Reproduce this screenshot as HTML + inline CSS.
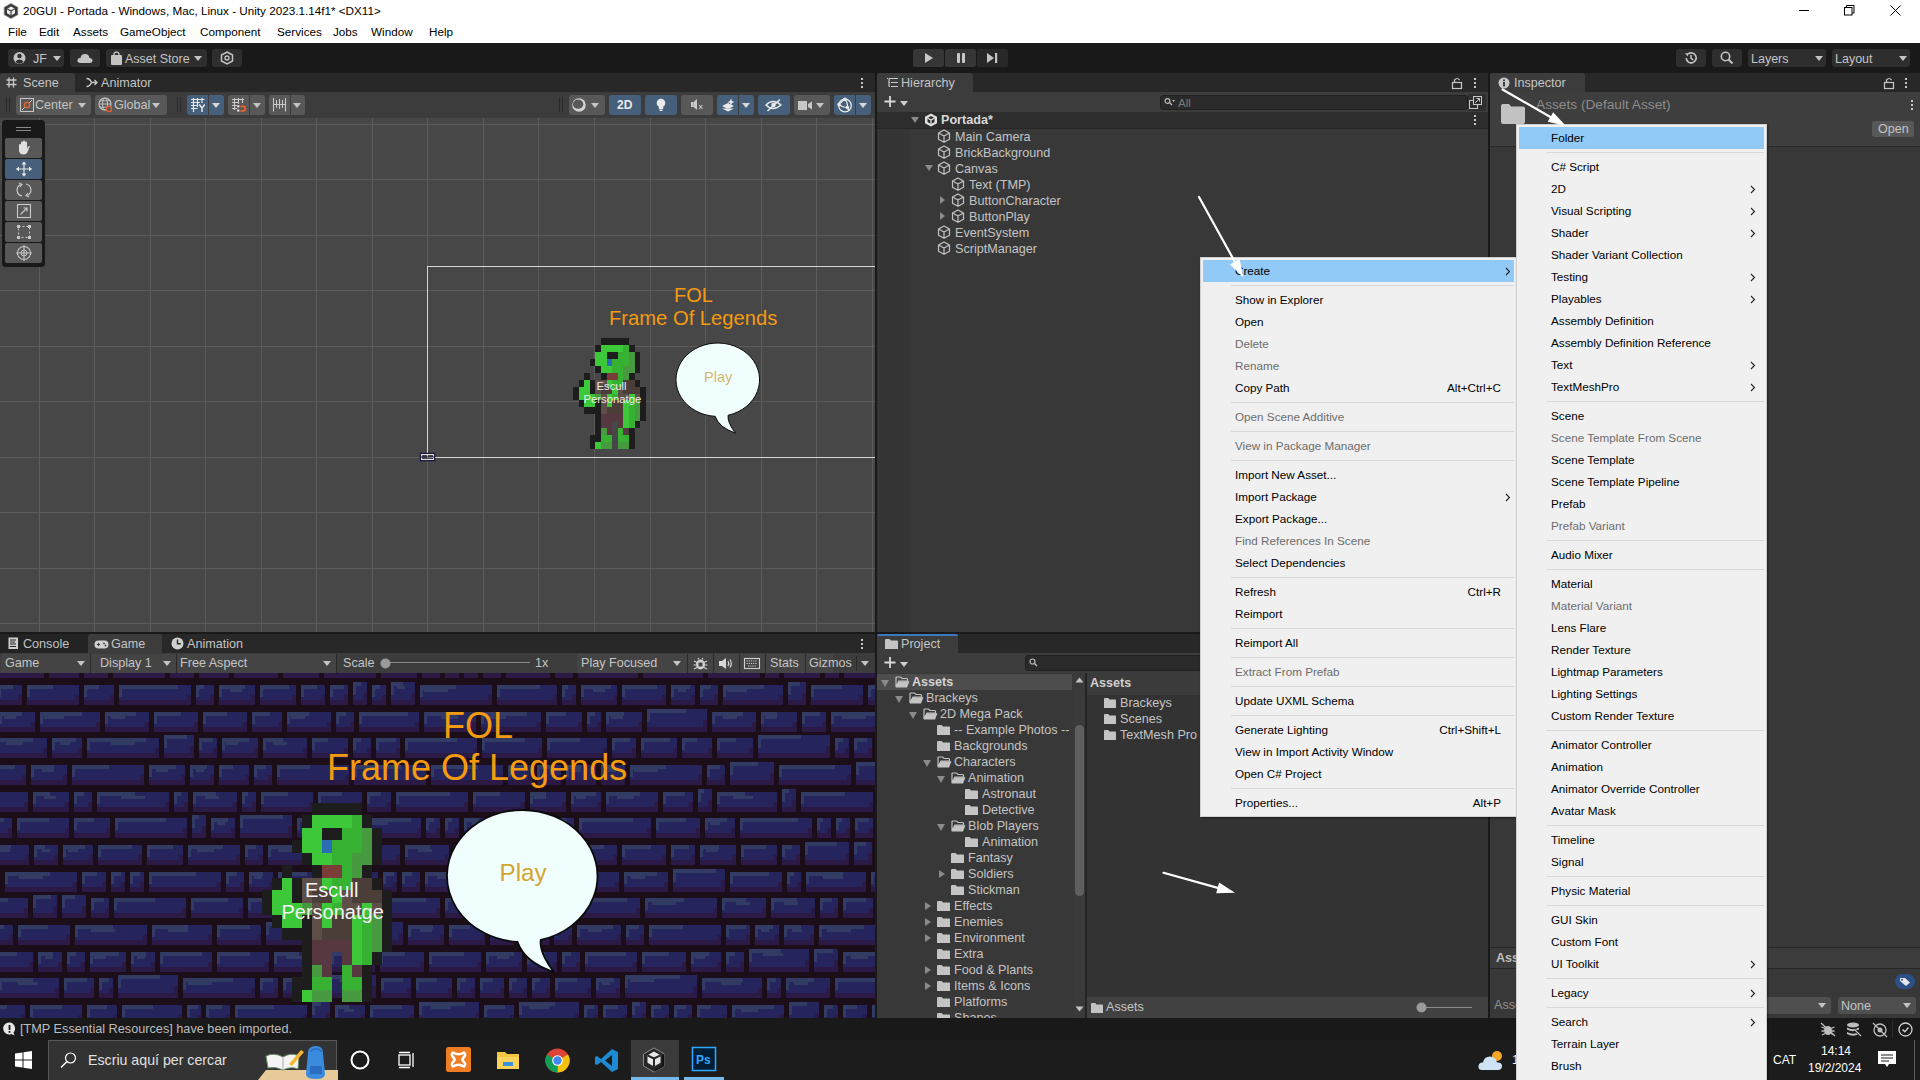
<!DOCTYPE html>
<html><head><meta charset="utf-8"><style>
*{margin:0;padding:0;box-sizing:border-box}
html,body{width:1920px;height:1080px;overflow:hidden;background:#191919;font-family:"Liberation Sans",sans-serif;}
div,span{position:absolute}
.t{white-space:nowrap;line-height:1}
.w{font-size:11.7px;color:#000}
.u{font-size:12.6px;color:#c4c4c4}
.tbb{background:#2d2d2d;border-radius:3px}
.btn{background:#585858;border-radius:3px}
.btnb{background:#46607c;border-radius:3px}
.tri{width:0;height:0;border-left:4px solid transparent;border-right:4px solid transparent;border-top:5px solid #c4c4c4}
.trir{width:0;height:0;border-top:4px solid transparent;border-bottom:4px solid transparent;border-left:5px solid #8a8a8a}
.trid{width:0;height:0;border-left:4px solid transparent;border-right:4px solid transparent;border-top:6px solid #8a8a8a}
.menu{background:#f0f0f0;border:1px solid #d0d0d0;box-shadow:1px 1px 2px rgba(0,0,0,.45)}
.mi{font-size:11.7px;color:#000;white-space:nowrap;line-height:1}
.dis{color:#6d6d6d}
.hl{background:#91c9f7}
.sep{height:1px;background:#d7d7d7}
.chev{width:5px;height:5px;border-right:1.2px solid #222;border-top:1.2px solid #222;transform:rotate(45deg)}
svg{position:absolute;overflow:visible}
</style></head><body>
<div style="left:0px;top:0px;width:1920px;height:43px;background:#fff;"></div><svg style="left:3px;top:3px" width="16" height="16" viewBox="0 0 16 16"><polygon points="8,0.5 14.8,4.3 14.8,11.7 8,15.5 1.2,11.7 1.2,4.3" fill="#3a3a3a" stroke="#888" stroke-width="0.8"/><path d="M8 3.5 L12 5.8 L12 10.2 L8 12.5 L4 10.2 L4 5.8Z" fill="#eee"/><path d="M8 8 L8 12.5 M8 8 L4 5.8 M8 8 L12 5.8" stroke="#3a3a3a" stroke-width="1.2"/></svg><div class="t w" style="left:23px;top:5px;">20GUI - Portada - Windows, Mac, Linux - Unity 2023.1.14f1* &lt;DX11&gt;</div><div class="t w" style="left:8px;top:26px;">File</div><div class="t w" style="left:39px;top:26px;">Edit</div><div class="t w" style="left:73px;top:26px;">Assets</div><div class="t w" style="left:120px;top:26px;">GameObject</div><div class="t w" style="left:200px;top:26px;">Component</div><div class="t w" style="left:277px;top:26px;">Services</div><div class="t w" style="left:333px;top:26px;">Jobs</div><div class="t w" style="left:371px;top:26px;">Window</div><div class="t w" style="left:429px;top:26px;">Help</div><div style="left:1799px;top:10px;width:10px;height:1px;background:#000;"></div><svg style="left:1844px;top:5px" width="11" height="11"><rect x="0.5" y="2.5" width="7.5" height="7.5" fill="none" stroke="#000"/><path d="M2.5 2.5 V0.5 H10 V8 H8" fill="none" stroke="#000"/></svg><svg style="left:1890px;top:5px" width="11" height="11"><path d="M0.5 0.5 L10.5 10.5 M10.5 0.5 L0.5 10.5" stroke="#000" stroke-width="1"/></svg><div style="left:0px;top:43px;width:1920px;height:30px;background:#191919;"></div><div style="left:8px;top:49px;width:56px;height:18px;background:#2e2e2e;border-radius:3px"></div><svg style="left:13px;top:51px" width="14" height="14"><circle cx="6.5" cy="7" r="6" fill="#c4c4c4"/><circle cx="6.5" cy="5" r="2.2" fill="#2e2e2e"/><path d="M2.5 10.5 Q6.5 6.5 10.5 10.5 L9 12 Q6.5 13.5 4 12Z" fill="#2e2e2e"/></svg><div class="t u" style="left:33px;top:53px;font-size:12.5px">JF</div><div class="tri" style="left:53px;top:56px"></div><div style="left:70px;top:49px;width:30px;height:18px;background:#2e2e2e;border-radius:3px"></div><svg style="left:77px;top:52px" width="16" height="12"><path d="M3.5 11 Q0 11 0.5 8 Q1 5.5 3.5 6 Q4 2 8 2 Q12 2 12.5 6 Q15.5 6 15.5 8.5 Q15.5 11 12.5 11Z" fill="#c4c4c4"/></svg><div style="left:106px;top:49px;width:101px;height:18px;background:#2e2e2e;border-radius:3px"></div><svg style="left:111px;top:51px" width="12" height="14"><rect x="0" y="4" width="11" height="10" rx="1" fill="#c4c4c4"/><path d="M3 5 V2.5 Q5.5 -0.5 8 2.5 V5" fill="none" stroke="#c4c4c4" stroke-width="1.3"/></svg><div class="t u" style="left:125px;top:53px;font-size:12.5px">Asset Store</div><div class="tri" style="left:194px;top:56px"></div><div style="left:212px;top:49px;width:30px;height:18px;background:#2e2e2e;border-radius:3px"></div><svg style="left:220px;top:51px" width="14" height="14"><polygon points="7,1 12.5,4 12.5,10 7,13 1.5,10 1.5,4" fill="none" stroke="#c4c4c4" stroke-width="1.5"/><circle cx="7" cy="7" r="2" fill="none" stroke="#c4c4c4" stroke-width="1.3"/></svg><div style="left:913px;top:49px;width:31px;height:18px;background:#363636;border-radius:2px"></div><div style="left:945px;top:49px;width:31px;height:18px;background:#363636;border-radius:2px"></div><div style="left:977px;top:49px;width:31px;height:18px;background:#282828;border-radius:2px"></div><svg style="left:923px;top:52px" width="12" height="12"><path d="M2 1 L10 6 L2 11Z" fill="#c8c8c8"/></svg><div style="left:957px;top:53px;width:3px;height:10px;background:#c8c8c8;border-radius:1px"></div><div style="left:962px;top:53px;width:3px;height:10px;background:#c8c8c8;border-radius:1px"></div><svg style="left:986px;top:52px" width="12" height="12"><path d="M1 1 L8 6 L1 11Z" fill="#c4c4c4"/><rect x="9" y="1" width="2.2" height="10" fill="#c4c4c4"/></svg><div style="left:1676px;top:49px;width:30px;height:18px;background:#2e2e2e;border-radius:3px"></div><svg style="left:1684px;top:51px" width="14" height="14"><path d="M2.2 7 A5 5 0 1 0 4 3" fill="none" stroke="#c4c4c4" stroke-width="1.6"/><path d="M1 2 L4.5 2.5 L3.5 5.5Z" fill="#c4c4c4"/><path d="M7 4 V7.3 L9.3 8.8" fill="none" stroke="#c4c4c4" stroke-width="1.5"/></svg><div style="left:1712px;top:49px;width:30px;height:18px;background:#2e2e2e;border-radius:3px"></div><svg style="left:1720px;top:51px" width="14" height="14"><circle cx="5.5" cy="5.5" r="4.2" fill="none" stroke="#c4c4c4" stroke-width="1.6"/><path d="M8.5 8.5 L12.5 12.5" stroke="#c4c4c4" stroke-width="2"/></svg><div style="left:1748px;top:49px;width:78px;height:18px;background:#2e2e2e;border-radius:3px"></div><div class="t u" style="left:1751px;top:53px;font-size:12.5px">Layers</div><div class="tri" style="left:1815px;top:56px"></div><div style="left:1832px;top:49px;width:78px;height:18px;background:#2e2e2e;border-radius:3px"></div><div class="t u" style="left:1835px;top:53px;font-size:12.5px">Layout</div><div class="tri" style="left:1899px;top:56px"></div><div style="left:0px;top:73px;width:875px;height:19px;background:#282828;"></div><div style="left:0px;top:73px;width:75px;height:19px;background:#3c3c3c;border-radius:3px 3px 0 0"></div><svg style="left:6px;top:77px" width="11" height="11"><path d="M3 0.5 V10.5 M7.5 0.5 V10.5 M0.5 3 H10.5 M0.5 7.5 H10.5" stroke="#c8c8c8" stroke-width="1.3"/></svg><div class="t u" style="left:23px;top:77px;">Scene</div><svg style="left:86px;top:77px" width="12" height="11"><path d="M0.5 1.5 Q4 1.5 5.5 5.5 Q4 9.5 0.5 9.5 M5.5 5.5 H11 M8.5 3 L11 5.5 L8.5 8" fill="none" stroke="#c8c8c8" stroke-width="1.3"/></svg><div class="t u" style="left:101px;top:77px;">Animator</div><div style="left:861px;top:78px;width:2px;height:2px;background:#c8c8c8;"></div><div style="left:861px;top:82px;width:2px;height:2px;background:#c8c8c8;"></div><div style="left:861px;top:86px;width:2px;height:2px;background:#c8c8c8;"></div><div style="left:0px;top:92px;width:875px;height:26px;background:#3c3c3c;"></div><div style="left:6px;top:97px;width:1px;height:15px;background:#2a2a2a;"></div><div style="left:9px;top:97px;width:1px;height:15px;background:#2a2a2a;"></div><div style="left:16px;top:95px;width:75px;height:20px;background:#585858;border-radius:3px"></div><svg style="left:20px;top:98px" width="14" height="14"><rect x="0.5" y="0.5" width="13" height="13" fill="none" stroke="#c8c8c8"/><circle cx="7" cy="7" r="2.6" fill="none" stroke="#e8622c" stroke-width="1.4"/><path d="M2 12 L4.6 9.4 M9.4 4.6 L12 2" stroke="#c8c8c8"/></svg><div class="t u" style="left:35px;top:99px;">Center</div><div class="tri" style="left:78px;top:103px"></div><div style="left:95px;top:95px;width:72px;height:20px;background:#585858;border-radius:3px"></div><svg style="left:98px;top:97px" width="16" height="16"><circle cx="7" cy="7" r="6" fill="none" stroke="#c8c8c8" stroke-width="1.1"/><ellipse cx="7" cy="7" rx="2.5" ry="6" fill="none" stroke="#c8c8c8" stroke-width="1"/><path d="M1 7 H13 M2 3.8 H12 M2 10.2 H12" stroke="#c8c8c8" stroke-width="0.9"/><circle cx="11" cy="12" r="2.6" fill="#585858" stroke="#e8622c" stroke-width="1.3"/></svg><div class="t u" style="left:114px;top:99px;">Global</div><div class="tri" style="left:152px;top:103px"></div><div style="left:177px;top:97px;width:1px;height:15px;background:#2a2a2a;"></div><div style="left:180px;top:97px;width:1px;height:15px;background:#2a2a2a;"></div><div style="left:187px;top:95px;width:37px;height:20px;background:#46607c;border-radius:3px"></div><div style="left:208px;top:95px;width:1px;height:20px;background:#3c3c3c;"></div><svg style="left:191px;top:98px" width="16" height="15"><path d="M2.5 0 V14 M6.5 0 V9 M11 0 V5 M0 1.5 H13.5 M0 4.5 H9 M0 7.5 H6.5 M0 10.5 H6.5" stroke="#e6e6e6" stroke-width="1.2"/><path d="M8.3 6.5 L11 10 L13.7 6.5 M11 10 V14" fill="none" stroke="#e6e6e6" stroke-width="1.5"/></svg><div class="tri" style="left:212px;top:103px;border-top-color:#d8d8d8"></div><div style="left:228px;top:95px;width:37px;height:20px;background:#585858;border-radius:3px"></div><div style="left:249px;top:95px;width:1px;height:20px;background:#3c3c3c;"></div><svg style="left:232px;top:98px" width="16" height="15"><path d="M2.5 0 V12 M6.5 0 V6 M10.5 0 V5 M0 1.5 H12 M0 4.5 H6 M0 7.5 H5 M0 10.5 H5" stroke="#c8c8c8" stroke-width="1.1"/><rect x="5.3" y="7.3" width="2" height="2" fill="#fff"/><rect x="5.3" y="11.5" width="2" height="2" fill="#fff"/><path d="M8.5 8.3 H11 Q13.3 8.3 13.3 10.6 Q13.3 12.8 11 12.8 H8.5" fill="none" stroke="#f0602a" stroke-width="1.8"/></svg><div class="tri" style="left:253px;top:103px"></div><div style="left:269px;top:95px;width:36px;height:20px;background:#585858;border-radius:3px"></div><div style="left:290px;top:95px;width:1px;height:20px;background:#3c3c3c;"></div><svg style="left:272px;top:98px" width="16" height="15"><path d="M1.5 0 V13.5 M13.5 0 V13.5 M4.5 2 V10 M7.5 1 V11 M10.5 2 V10 M1.5 6.5 H13.5" stroke="#c8c8c8" stroke-width="1.1"/></svg><div class="tri" style="left:293px;top:103px"></div><div style="left:559px;top:97px;width:1px;height:15px;background:#2a2a2a;"></div><div style="left:562px;top:97px;width:1px;height:15px;background:#2a2a2a;"></div><div style="left:569px;top:95px;width:36px;height:20px;background:#585858;border-radius:3px"></div><svg style="left:572px;top:98px" width="16" height="16"><circle cx="7" cy="7" r="6.8" fill="#d2d2d2"/><ellipse cx="6.1" cy="6.2" rx="5.2" ry="4.6" fill="#585858"/></svg><div class="tri" style="left:591px;top:103px"></div><div style="left:609px;top:95px;width:32px;height:20px;background:#46607c;border-radius:3px"></div><div class="t u" style="left:617px;top:99px;color:#eaeaea;font-weight:bold;font-size:12px">2D</div><div style="left:645px;top:95px;width:32px;height:20px;background:#46607c;border-radius:3px"></div><svg style="left:655px;top:98px" width="12" height="14"><circle cx="6" cy="5" r="4.3" fill="#eaeaea"/><rect x="3.8" y="8" width="4.4" height="3" fill="#eaeaea"/><rect x="4.5" y="11.5" width="3" height="1.5" fill="#eaeaea"/></svg><div style="left:681px;top:95px;width:32px;height:20px;background:#585858;border-radius:3px"></div><svg style="left:690px;top:98px" width="14" height="14"><rect x="1" y="4" width="2.5" height="5" fill="#c8c8c8"/><path d="M3.5 4 L7 1 V12 L3.5 9Z" fill="#c8c8c8"/><path d="M9 7 L12.5 11 M12.5 7 L9 11" stroke="#c8c8c8" stroke-width="1.1"/></svg><div style="left:717px;top:95px;width:37px;height:20px;background:#46607c;border-radius:3px"></div><div style="left:738px;top:95px;width:1px;height:20px;background:#3c3c3c;"></div><svg style="left:721px;top:98px" width="16" height="14"><path d="M1 8 L7 5 L13 8 L7 11Z M1 10.5 L7 13.5 L13 10.5" fill="#eaeaea"/><path d="M10 0.5 L11 3 L13.5 4 L11 5 L10 7.5 L9 5 L6.5 4 L9 3Z" fill="#eaeaea"/></svg><div class="tri" style="left:742px;top:103px;border-top-color:#d8d8d8"></div><div style="left:758px;top:95px;width:32px;height:20px;background:#46607c;border-radius:3px"></div><svg style="left:765px;top:98px" width="18" height="14"><path d="M1 7 Q8 0 16 7 Q8 14 1 7Z" fill="none" stroke="#eaeaea" stroke-width="1.3"/><circle cx="8.5" cy="7" r="2.2" fill="#eaeaea"/><path d="M2.5 13 L15 1.5" stroke="#eaeaea" stroke-width="1.5"/></svg><div style="left:794px;top:95px;width:36px;height:20px;background:#585858;border-radius:3px"></div><svg style="left:798px;top:100px" width="16" height="11"><rect x="0" y="1" width="9" height="9" fill="#c8c8c8"/><path d="M10 4 L14 1.5 V9.5 L10 7Z" fill="#c8c8c8"/></svg><div class="tri" style="left:816px;top:103px"></div><div style="left:834px;top:95px;width:37px;height:20px;background:#46607c;border-radius:3px"></div><div style="left:855px;top:95px;width:1px;height:20px;background:#3c3c3c;"></div><svg style="left:837px;top:97px" width="16" height="16"><circle cx="8" cy="8.5" r="6.3" fill="none" stroke="#eaeaea" stroke-width="1.3"/><path d="M8 2.2 Q4 5 2 7.5 M8 2.2 Q11 6 10.5 10.5 M2 7.5 Q6 11 10.5 10.5 M10.5 10.5 L12 14" fill="none" stroke="#eaeaea" stroke-width="1.1"/><circle cx="8" cy="2.2" r="1.7" fill="#eaeaea"/><circle cx="2" cy="7.5" r="1.7" fill="#eaeaea"/><circle cx="10.5" cy="10.5" r="1.7" fill="#eaeaea"/></svg><div class="tri" style="left:859px;top:103px;border-top-color:#d8d8d8"></div><div style="left:0px;top:118px;width:875px;height:514px;background:#474747;overflow:hidden"></div><svg style="left:0px;top:118px" width="875" height="514" shape-rendering="crispEdges"><rect x="39" y="0" width="1" height="514" fill="#5b5b5b"/><rect x="94" y="0" width="1" height="514" fill="#5b5b5b"/><rect x="150" y="0" width="1" height="514" fill="#5b5b5b"/><rect x="205" y="0" width="1" height="514" fill="#5b5b5b"/><rect x="261" y="0" width="1" height="514" fill="#5b5b5b"/><rect x="316" y="0" width="1" height="514" fill="#5b5b5b"/><rect x="372" y="0" width="1" height="514" fill="#5b5b5b"/><rect x="427" y="0" width="1" height="514" fill="#5b5b5b"/><rect x="483" y="0" width="1" height="514" fill="#5b5b5b"/><rect x="538" y="0" width="1" height="514" fill="#5b5b5b"/><rect x="594" y="0" width="1" height="514" fill="#5b5b5b"/><rect x="650" y="0" width="1" height="514" fill="#5b5b5b"/><rect x="705" y="0" width="1" height="514" fill="#5b5b5b"/><rect x="761" y="0" width="1" height="514" fill="#5b5b5b"/><rect x="816" y="0" width="1" height="514" fill="#5b5b5b"/><rect x="872" y="0" width="1" height="514" fill="#5b5b5b"/><rect x="0" y="6" width="875" height="1" fill="#5b5b5b"/><rect x="0" y="61" width="875" height="1" fill="#5b5b5b"/><rect x="0" y="117" width="875" height="1" fill="#5b5b5b"/><rect x="0" y="172" width="875" height="1" fill="#5b5b5b"/><rect x="0" y="228" width="875" height="1" fill="#5b5b5b"/><rect x="0" y="283" width="875" height="1" fill="#5b5b5b"/><rect x="0" y="339" width="875" height="1" fill="#5b5b5b"/><rect x="0" y="394" width="875" height="1" fill="#5b5b5b"/><rect x="0" y="450" width="875" height="1" fill="#5b5b5b"/><rect x="0" y="505" width="875" height="1" fill="#5b5b5b"/><rect x="427" y="148" width="448" height="1" fill="#d6d6d6"/><rect x="427" y="148" width="1" height="192" fill="#d6d6d6"/><rect x="427" y="339" width="448" height="1" fill="#d6d6d6"/></svg><svg style="left:420px;top:453px" width="16" height="9"><rect x="0.5" y="0.5" width="14" height="7" fill="none" stroke="#1a1a40" stroke-width="1.5"/><rect x="1.5" y="1.5" width="12" height="5" fill="none" stroke="#e0e0e0" stroke-width="1"/><rect x="1" y="3.5" width="13" height="1" fill="#1a1a40"/></svg><div class="t" style="left:674px;top:284.5px;font-size:20px;color:#f49a10">FOL</div><div class="t" style="left:609px;top:307.5px;font-size:20.2px;color:#f49a10">Frame Of Legends</div><svg style="left:572.8px;top:338px" width="72.8" height="111.0" shape-rendering="crispEdges"><rect x="28.00" y="0.00" width="28.00" height="6.94" fill="#1d1d1d"/><rect x="22.40" y="6.94" width="5.60" height="6.94" fill="#1d1d1d"/><rect x="28.00" y="6.94" width="22.40" height="6.94" fill="#3dc83a"/><rect x="50.40" y="6.94" width="5.60" height="6.94" fill="#37b131"/><rect x="56.00" y="6.94" width="5.60" height="6.94" fill="#1d1d1d"/><rect x="22.40" y="13.88" width="11.20" height="6.94" fill="#3dc83a"/><rect x="33.60" y="13.88" width="11.20" height="6.94" fill="#1d1d1d"/><rect x="44.80" y="13.88" width="11.20" height="6.94" fill="#37b131"/><rect x="56.00" y="13.88" width="5.60" height="6.94" fill="#479a40"/><rect x="61.60" y="13.88" width="5.60" height="6.94" fill="#1d1d1d"/><rect x="16.80" y="20.82" width="5.60" height="6.94" fill="#1d1d1d"/><rect x="22.40" y="20.82" width="11.20" height="6.94" fill="#3dc83a"/><rect x="33.60" y="20.82" width="5.60" height="6.94" fill="#2b6db5"/><rect x="39.20" y="20.82" width="16.80" height="6.94" fill="#37b131"/><rect x="56.00" y="20.82" width="5.60" height="6.94" fill="#479a40"/><rect x="61.60" y="20.82" width="5.60" height="6.94" fill="#1d1d1d"/><rect x="22.40" y="27.76" width="5.60" height="6.94" fill="#1d1d1d"/><rect x="28.00" y="27.76" width="11.20" height="6.94" fill="#3dc83a"/><rect x="39.20" y="27.76" width="11.20" height="6.94" fill="#37b131"/><rect x="50.40" y="27.76" width="11.20" height="6.94" fill="#479a40"/><rect x="61.60" y="27.76" width="5.60" height="6.94" fill="#1d1d1d"/><rect x="11.20" y="34.70" width="5.60" height="6.94" fill="#1d1d1d"/><rect x="28.00" y="34.70" width="5.60" height="6.94" fill="#1d1d1d"/><rect x="33.60" y="34.70" width="11.20" height="6.94" fill="#7b3c3a"/><rect x="44.80" y="34.70" width="5.60" height="6.94" fill="#37b131"/><rect x="50.40" y="34.70" width="5.60" height="6.94" fill="#479a40"/><rect x="56.00" y="34.70" width="5.60" height="6.94" fill="#1d1d1d"/><rect x="5.60" y="41.64" width="5.60" height="6.94" fill="#1d1d1d"/><rect x="11.20" y="41.64" width="5.60" height="6.94" fill="#3dc83a"/><rect x="16.80" y="41.64" width="5.60" height="6.94" fill="#1d1d1d"/><rect x="22.40" y="41.64" width="11.20" height="6.94" fill="#5d4f47"/><rect x="33.60" y="41.64" width="5.60" height="6.94" fill="#3dc83a"/><rect x="39.20" y="41.64" width="11.20" height="6.94" fill="#37b131"/><rect x="50.40" y="41.64" width="11.20" height="6.94" fill="#4b3e38"/><rect x="61.60" y="41.64" width="5.60" height="6.94" fill="#1d1d1d"/><rect x="0.00" y="48.58" width="5.60" height="6.94" fill="#1d1d1d"/><rect x="5.60" y="48.58" width="11.20" height="6.94" fill="#3dc83a"/><rect x="16.80" y="48.58" width="5.60" height="6.94" fill="#1d1d1d"/><rect x="22.40" y="48.58" width="5.60" height="6.94" fill="#5d4f47"/><rect x="28.00" y="48.58" width="11.20" height="6.94" fill="#4b3e38"/><rect x="39.20" y="48.58" width="5.60" height="6.94" fill="#3dc83a"/><rect x="44.80" y="48.58" width="5.60" height="6.94" fill="#5d4f47"/><rect x="50.40" y="48.58" width="16.80" height="6.94" fill="#4b3e38"/><rect x="67.20" y="48.58" width="5.60" height="6.94" fill="#1d1d1d"/><rect x="0.00" y="55.52" width="5.60" height="6.94" fill="#1d1d1d"/><rect x="5.60" y="55.52" width="16.80" height="6.94" fill="#3dc83a"/><rect x="22.40" y="55.52" width="5.60" height="6.94" fill="#479a40"/><rect x="28.00" y="55.52" width="5.60" height="6.94" fill="#5d4f47"/><rect x="33.60" y="55.52" width="5.60" height="6.94" fill="#3dc83a"/><rect x="39.20" y="55.52" width="5.60" height="6.94" fill="#37b131"/><rect x="44.80" y="55.52" width="11.20" height="6.94" fill="#5d4f47"/><rect x="56.00" y="55.52" width="5.60" height="6.94" fill="#3dc83a"/><rect x="61.60" y="55.52" width="5.60" height="6.94" fill="#5d4f47"/><rect x="67.20" y="55.52" width="5.60" height="6.94" fill="#1d1d1d"/><rect x="5.60" y="62.46" width="5.60" height="6.94" fill="#1d1d1d"/><rect x="11.20" y="62.46" width="11.20" height="6.94" fill="#3dc83a"/><rect x="22.40" y="62.46" width="5.60" height="6.94" fill="#1d1d1d"/><rect x="28.00" y="62.46" width="5.60" height="6.94" fill="#5d4f47"/><rect x="33.60" y="62.46" width="5.60" height="6.94" fill="#3dc83a"/><rect x="39.20" y="62.46" width="11.20" height="6.94" fill="#4b3e38"/><rect x="50.40" y="62.46" width="5.60" height="6.94" fill="#3dc83a"/><rect x="56.00" y="62.46" width="5.60" height="6.94" fill="#37b131"/><rect x="61.60" y="62.46" width="5.60" height="6.94" fill="#479a40"/><rect x="67.20" y="62.46" width="5.60" height="6.94" fill="#1d1d1d"/><rect x="11.20" y="69.40" width="16.80" height="6.94" fill="#1d1d1d"/><rect x="28.00" y="69.40" width="5.60" height="6.94" fill="#5d4f47"/><rect x="33.60" y="69.40" width="16.80" height="6.94" fill="#4b3e38"/><rect x="50.40" y="69.40" width="5.60" height="6.94" fill="#3dc83a"/><rect x="56.00" y="69.40" width="5.60" height="6.94" fill="#37b131"/><rect x="61.60" y="69.40" width="5.60" height="6.94" fill="#479a40"/><rect x="67.20" y="69.40" width="5.60" height="6.94" fill="#1d1d1d"/><rect x="22.40" y="76.34" width="5.60" height="6.94" fill="#1d1d1d"/><rect x="28.00" y="76.34" width="22.40" height="6.94" fill="#573840"/><rect x="50.40" y="76.34" width="5.60" height="6.94" fill="#3dc83a"/><rect x="56.00" y="76.34" width="5.60" height="6.94" fill="#37b131"/><rect x="61.60" y="76.34" width="5.60" height="6.94" fill="#479a40"/><rect x="67.20" y="76.34" width="5.60" height="6.94" fill="#1d1d1d"/><rect x="22.40" y="83.28" width="5.60" height="6.94" fill="#1d1d1d"/><rect x="28.00" y="83.28" width="11.20" height="6.94" fill="#573840"/><rect x="44.80" y="83.28" width="5.60" height="6.94" fill="#573840"/><rect x="50.40" y="83.28" width="5.60" height="6.94" fill="#3dc83a"/><rect x="56.00" y="83.28" width="5.60" height="6.94" fill="#37b131"/><rect x="61.60" y="83.28" width="5.60" height="6.94" fill="#1d1d1d"/><rect x="22.40" y="90.22" width="5.60" height="6.94" fill="#1d1d1d"/><rect x="28.00" y="90.22" width="5.60" height="6.94" fill="#479a40"/><rect x="33.60" y="90.22" width="5.60" height="6.94" fill="#573840"/><rect x="44.80" y="90.22" width="5.60" height="6.94" fill="#37b131"/><rect x="50.40" y="90.22" width="5.60" height="6.94" fill="#573840"/><rect x="56.00" y="90.22" width="5.60" height="6.94" fill="#1d1d1d"/><rect x="16.80" y="97.16" width="11.20" height="6.94" fill="#1d1d1d"/><rect x="28.00" y="97.16" width="11.20" height="6.94" fill="#37b131"/><rect x="44.80" y="97.16" width="11.20" height="6.94" fill="#37b131"/><rect x="56.00" y="97.16" width="5.60" height="6.94" fill="#1d1d1d"/><rect x="16.80" y="104.10" width="5.60" height="6.94" fill="#1d1d1d"/><rect x="22.40" y="104.10" width="5.60" height="6.94" fill="#3dc83a"/><rect x="28.00" y="104.10" width="11.20" height="6.94" fill="#479a40"/><rect x="44.80" y="104.10" width="11.20" height="6.94" fill="#479a40"/><rect x="56.00" y="104.10" width="5.60" height="6.94" fill="#1d1d1d"/></svg><div class="t" style="left:596.5px;top:381px;font-size:11.3px;color:#ececec">Escull</div><div class="t" style="left:583.5px;top:393.5px;font-size:11.3px;color:#ececec">Personatge</div><svg style="left:671.00px;top:337.50px" width="94" height="111"><path transform="translate(46.8,41.7)" d="M10.28 35.57 A41.8 36.7 0 1 0 -2.64 36.63 Q1.11 47.83 17.64 53.38 Q9.39 42.61 10.28 35.57Z" fill="#f0fefe" stroke="#0a0a0a" stroke-width="1.0" stroke-linejoin="round"/></svg><div class="t" style="left:704px;top:370px;font-size:14.5px;color:#d6b670">Play</div><div style="left:2px;top:120px;width:43px;height:147px;background:#191919;border-radius:4px"></div><div style="left:16px;top:127px;width:15px;height:1px;background:#8a8a8a;"></div><div style="left:16px;top:130px;width:15px;height:1px;background:#8a8a8a;"></div><div style="left:5px;top:138px;width:37px;height:20px;background:#585858;border-radius:2px"></div><div style="left:5px;top:159px;width:37px;height:20px;background:#46607c;border-radius:2px"></div><div style="left:5px;top:180px;width:37px;height:20px;background:#585858;border-radius:2px"></div><div style="left:5px;top:201px;width:37px;height:20px;background:#585858;border-radius:2px"></div><div style="left:5px;top:222px;width:37px;height:20px;background:#585858;border-radius:2px"></div><div style="left:5px;top:243px;width:37px;height:20px;background:#585858;border-radius:2px"></div><svg style="left:16px;top:140px" width="16" height="16"><path d="M3 9 V5 Q3 4 4 4 Q5 4 5 5 V8 V2.5 Q5 1.5 6 1.5 Q7 1.5 7 2.5 V7.5 V1.5 Q7 0.5 8 0.5 Q9 0.5 9 1.5 V7.5 V2.5 Q9 1.5 10 1.5 Q11 1.5 11 2.5 V9 L12 6.5 Q13 5.5 13.8 6.3 L11.5 12 Q10.5 14.5 7.5 14.5 Q4 14.5 3 11Z" fill="#e0e0e0"/></svg><svg style="left:15px;top:161px" width="18" height="16"><path d="M9 1 V15 M1.5 8 H16.5" stroke="#e6e6e6" stroke-width="1.2"/><path d="M9 0.5 L6.5 3.5 H11.5Z M9 15.5 L6.5 12.5 H11.5Z M1 8 L4 5.5 V10.5Z M17 8 L14 5.5 V10.5Z" fill="#e6e6e6"/></svg><svg style="left:16px;top:182px" width="16" height="16"><path d="M5 2.5 A6 6 0 0 0 6 14 M11 13.5 A6 6 0 0 0 10 2" fill="none" stroke="#c8c8c8" stroke-width="1.2"/><path d="M3 1 L6 2.5 L4 5 M13 15 L10 13.5 L12 11" fill="none" stroke="#c8c8c8" stroke-width="1.1"/></svg><svg style="left:16px;top:203px" width="16" height="16"><rect x="1.5" y="1.5" width="13" height="13" fill="none" stroke="#c8c8c8" stroke-width="1.1"/><path d="M4.5 11.5 L11 5 M7.5 5 H11 V8.5" fill="none" stroke="#c8c8c8" stroke-width="1.1"/></svg><svg style="left:16px;top:224px" width="16" height="16"><rect x="2.5" y="2.5" width="11" height="11" fill="none" stroke="#c8c8c8" stroke-width="1" stroke-dasharray="2 2"/><rect x="1" y="1" width="3" height="3" fill="#c8c8c8"/><rect x="12" y="1" width="3" height="3" fill="#c8c8c8"/><rect x="1" y="12" width="3" height="3" fill="#c8c8c8"/><rect x="12" y="12" width="3" height="3" fill="#c8c8c8"/></svg><svg style="left:15px;top:244px" width="18" height="18"><circle cx="9" cy="9" r="6.5" fill="none" stroke="#c8c8c8" stroke-width="1.1"/><path d="M9 1 V17 M1 9 H17" stroke="#c8c8c8" stroke-width="1.1"/><circle cx="9" cy="9" r="3" fill="none" stroke="#c8c8c8" stroke-width="1"/></svg><div style="left:877px;top:73px;width:611px;height:559px;background:#383838;"></div><div style="left:877px;top:73px;width:611px;height:19px;background:#282828;"></div><div style="left:877px;top:73px;width:96px;height:19px;background:#3c3c3c;border-radius:3px 3px 0 0"></div><svg style="left:886px;top:77px" width="13" height="11"><path d="M3 1.5 H12 M5 5.5 H12 M5 9.5 H12 M1 1.5 H2 M3 1.5 V9.5 M3 5.5 H4 M3 9.5 H4" stroke="#c8c8c8" stroke-width="1.2"/></svg><div class="t u" style="left:901px;top:77px;">Hierarchy</div><svg style="left:1452px;top:77px" width="11" height="12"><rect x="0.5" y="5.5" width="9" height="6" fill="none" stroke="#c8c8c8" stroke-width="1.2"/><path d="M2.5 5.5 V3 Q5 0 7.5 3" fill="none" stroke="#c8c8c8" stroke-width="1.2"/></svg><div style="left:1474px;top:78px;width:2px;height:2px;background:#c8c8c8;"></div><div style="left:1474px;top:82px;width:2px;height:2px;background:#c8c8c8;"></div><div style="left:1474px;top:86px;width:2px;height:2px;background:#c8c8c8;"></div><div style="left:877px;top:92px;width:611px;height:20px;background:#3c3c3c;"></div><svg style="left:884px;top:95px" width="14" height="14"><path d="M6 1 V12 M0.5 6.5 H11.5" stroke="#d8d8d8" stroke-width="1.8"/></svg><div class="tri" style="left:900px;top:101px;border-top-color:#d0d0d0"></div><div style="left:1160px;top:95px;width:308px;height:15px;background:#2a2a2a;border-radius:3px;border:1px solid #212121"></div><svg style="left:1164px;top:97px" width="12" height="10"><circle cx="3.5" cy="4" r="2.4" fill="none" stroke="#bbb" stroke-width="1.2"/><path d="M5.5 5.5 L8 8" stroke="#bbb" stroke-width="1.3"/><path d="M8 3 L11 3 L9.5 5Z" fill="#bbb"/></svg><div class="t u" style="left:1178px;top:98px;color:#7a7a7a;font-size:11.5px">All</div><div style="left:1468px;top:94px;width:18px;height:17px;background:#2f2f2f;border-radius:2px"></div><svg style="left:1469px;top:96px" width="14" height="14"><rect x="0.5" y="4.5" width="8" height="8" fill="none" stroke="#c8c8c8"/><rect x="4.5" y="0.5" width="8" height="8" fill="#2f2f2f" stroke="#c8c8c8"/><path d="M6 7 L10.5 2.5 M7.5 2.5 H10.5 V5.5" fill="none" stroke="#c8c8c8"/></svg><div style="left:877px;top:112px;width:611px;height:16px;background:#2d2d2d;"></div><div style="left:877px;top:128px;width:611px;height:1px;background:#262626;"></div><div style="left:877px;top:129px;width:32px;height:503px;background:#353535;"></div><div class="trid" style="left:911px;top:117px"></div><svg style="left:924px;top:113px" width="14" height="14"><path d="M7 0.5 L13 3.8 V10.2 L7 13.5 L1 10.2 V3.8Z" fill="#e0e0e0"/><path d="M7 3 L10.5 5 V9 L7 11 L3.5 9 V5Z" fill="#2d2d2d"/><path d="M7 7 V11 M7 7 L3.5 5 M7 7 L10.5 5" stroke="#e0e0e0" stroke-width="1.3"/></svg><div class="t u" style="left:941px;top:114px;font-weight:bold;color:#d8d8d8">Portada*</div><div style="left:1474px;top:115px;width:2px;height:2px;background:#c8c8c8;"></div><div style="left:1474px;top:119px;width:2px;height:2px;background:#c8c8c8;"></div><div style="left:1474px;top:123px;width:2px;height:2px;background:#c8c8c8;"></div><svg style="left:937px;top:129px" width="14" height="14"><path d="M7 1 L12.5 4 V10.2 L7 13.2 L1.5 10.2 V4Z M1.5 4 L7 7 L12.5 4 M7 7 V13.2" fill="none" stroke="#c4c4c4" stroke-width="1.2" stroke-linejoin="round"/></svg><div class="t u" style="left:955px;top:131px;">Main Camera</div><svg style="left:937px;top:145px" width="14" height="14"><path d="M7 1 L12.5 4 V10.2 L7 13.2 L1.5 10.2 V4Z M1.5 4 L7 7 L12.5 4 M7 7 V13.2" fill="none" stroke="#c4c4c4" stroke-width="1.2" stroke-linejoin="round"/></svg><div class="t u" style="left:955px;top:147px;">BrickBackground</div><svg style="left:937px;top:161px" width="14" height="14"><path d="M7 1 L12.5 4 V10.2 L7 13.2 L1.5 10.2 V4Z M1.5 4 L7 7 L12.5 4 M7 7 V13.2" fill="none" stroke="#c4c4c4" stroke-width="1.2" stroke-linejoin="round"/></svg><div class="t u" style="left:955px;top:163px;">Canvas</div><div class="trid" style="left:925px;top:165px"></div><svg style="left:951px;top:177px" width="14" height="14"><path d="M7 1 L12.5 4 V10.2 L7 13.2 L1.5 10.2 V4Z M1.5 4 L7 7 L12.5 4 M7 7 V13.2" fill="none" stroke="#c4c4c4" stroke-width="1.2" stroke-linejoin="round"/></svg><div class="t u" style="left:969px;top:179px;">Text (TMP)</div><svg style="left:951px;top:193px" width="14" height="14"><path d="M7 1 L12.5 4 V10.2 L7 13.2 L1.5 10.2 V4Z M1.5 4 L7 7 L12.5 4 M7 7 V13.2" fill="none" stroke="#c4c4c4" stroke-width="1.2" stroke-linejoin="round"/></svg><div class="t u" style="left:969px;top:195px;">ButtonCharacter</div><div class="trir" style="left:940px;top:196px"></div><svg style="left:951px;top:209px" width="14" height="14"><path d="M7 1 L12.5 4 V10.2 L7 13.2 L1.5 10.2 V4Z M1.5 4 L7 7 L12.5 4 M7 7 V13.2" fill="none" stroke="#c4c4c4" stroke-width="1.2" stroke-linejoin="round"/></svg><div class="t u" style="left:969px;top:211px;">ButtonPlay</div><div class="trir" style="left:940px;top:212px"></div><svg style="left:937px;top:225px" width="14" height="14"><path d="M7 1 L12.5 4 V10.2 L7 13.2 L1.5 10.2 V4Z M1.5 4 L7 7 L12.5 4 M7 7 V13.2" fill="none" stroke="#c4c4c4" stroke-width="1.2" stroke-linejoin="round"/></svg><div class="t u" style="left:955px;top:227px;">EventSystem</div><svg style="left:937px;top:241px" width="14" height="14"><path d="M7 1 L12.5 4 V10.2 L7 13.2 L1.5 10.2 V4Z M1.5 4 L7 7 L12.5 4 M7 7 V13.2" fill="none" stroke="#c4c4c4" stroke-width="1.2" stroke-linejoin="round"/></svg><div class="t u" style="left:955px;top:243px;">ScriptManager</div><div style="left:1490px;top:73px;width:430px;height:945px;background:#383838;"></div><div style="left:1490px;top:73px;width:430px;height:19px;background:#282828;"></div><div style="left:1490px;top:73px;width:95px;height:19px;background:#3c3c3c;border-radius:3px 3px 0 0"></div><svg style="left:1498px;top:77px" width="12" height="12"><circle cx="6" cy="6" r="5.5" fill="#c8c8c8"/><rect x="5" y="5" width="2" height="4.5" fill="#3c3c3c"/><rect x="5" y="2.5" width="2" height="1.6" fill="#3c3c3c"/></svg><div class="t u" style="left:1514px;top:77px;">Inspector</div><svg style="left:1884px;top:77px" width="11" height="12"><rect x="0.5" y="5.5" width="9" height="6" fill="none" stroke="#c8c8c8" stroke-width="1.2"/><path d="M2.5 5.5 V3 Q5 0 7.5 3" fill="none" stroke="#c8c8c8" stroke-width="1.2"/></svg><div style="left:1905px;top:78px;width:2px;height:2px;background:#c8c8c8;"></div><div style="left:1905px;top:82px;width:2px;height:2px;background:#c8c8c8;"></div><div style="left:1905px;top:86px;width:2px;height:2px;background:#c8c8c8;"></div><div style="left:1490px;top:92px;width:430px;height:55px;background:#3e3e3e;"></div><div style="left:1490px;top:146px;width:430px;height:1px;background:#2a2a2a;"></div><svg style="left:1500px;top:103px" width="26" height="22"><path d="M1 3 Q1 1 3 1 H9 L11 3.5 H23 Q25 3.5 25 5.5 V19 Q25 21 23 21 H3 Q1 21 1 19Z" fill="#c2c2c2"/></svg><div class="t u" style="left:1536px;top:98px;font-size:13.7px;color:#8c8c8c">Assets (Default Asset)</div><div style="left:1911px;top:100px;width:2px;height:2px;background:#c8c8c8;"></div><div style="left:1911px;top:104px;width:2px;height:2px;background:#c8c8c8;"></div><div style="left:1911px;top:108px;width:2px;height:2px;background:#c8c8c8;"></div><div style="left:1872px;top:121px;width:42px;height:16px;background:#585858;border-radius:3px"></div><div class="t u" style="left:1878px;top:123px;font-size:12.5px">Open</div><div style="left:1490px;top:947px;width:430px;height:1px;background:#262626;"></div><div style="left:1490px;top:948px;width:430px;height:20px;background:#3c3c3c;"></div><div class="t u" style="left:1496px;top:952px;font-weight:bold;color:#bdbdbd">Assets</div><div style="left:1490px;top:968px;width:430px;height:1px;background:#262626;"></div><svg style="left:1895px;top:974px" width="20" height="15"><rect x="0" y="0" width="20" height="15" rx="7.5" fill="#2b4f87"/><path d="M5 4 H10 L15 8.5 L11 12 L5 7Z" fill="#e8e8e8"/><circle cx="7" cy="5.8" r="1" fill="#2b4f87"/></svg><div style="left:1490px;top:996px;width:430px;height:22px;background:#383838;"></div><div class="t u" style="left:1494px;top:999px;color:#8f8f8f">Assets</div><div style="left:1655px;top:997px;width:176px;height:17px;background:#4f4f4f;border-radius:3px"></div><div class="tri" style="left:1818px;top:1003px"></div><div style="left:1838px;top:997px;width:78px;height:17px;background:#4f4f4f;border-radius:3px"></div><div class="t u" style="left:1841px;top:1000px;">None</div><div class="tri" style="left:1903px;top:1003px"></div><div style="left:0px;top:634px;width:875px;height:19px;background:#282828;"></div><div style="left:0px;top:634px;width:88px;height:19px;background:#232323;border-radius:3px 3px 0 0"></div><svg style="left:8px;top:637px" width="11" height="13"><rect x="0.5" y="0.5" width="9.5" height="11.5" fill="#d0d0d0"/><path d="M2 3 H8 M2 5 H7 M2 7 H8 M2 9.5 H8" stroke="#232323" stroke-width="1"/></svg><div class="t u" style="left:23px;top:638px;">Console</div><div style="left:88px;top:634px;width:74px;height:19px;background:#3c3c3c;border-radius:3px 3px 0 0"></div><svg style="left:94px;top:640px" width="15" height="9"><rect x="0.5" y="0.5" width="14" height="8" rx="4" fill="#d0d0d0"/><path d="M3 4.5 H6 M4.5 3 V6" stroke="#3c3c3c" stroke-width="1.1"/><circle cx="10" cy="3.3" r="0.9" fill="#3c3c3c"/><circle cx="11.5" cy="5.5" r="0.9" fill="#3c3c3c"/></svg><div class="t u" style="left:111px;top:638px;">Game</div><svg style="left:171px;top:637px" width="13" height="13"><circle cx="6.5" cy="6.5" r="6" fill="#d0d0d0"/><path d="M6.5 2.5 V6.8 H9.8" fill="none" stroke="#282828" stroke-width="1.4"/></svg><div class="t u" style="left:187px;top:638px;">Animation</div><div style="left:861px;top:639px;width:2px;height:2px;background:#c8c8c8;"></div><div style="left:861px;top:643px;width:2px;height:2px;background:#c8c8c8;"></div><div style="left:861px;top:647px;width:2px;height:2px;background:#c8c8c8;"></div><div style="left:0px;top:653px;width:875px;height:20px;background:#3c3c3c;"></div><div style="left:1px;top:654px;width:89px;height:19px;background:#444444;"></div><div style="left:90px;top:654px;width:1px;height:19px;background:#2a2a2a;"></div><div class="t u" style="left:5px;top:657px;">Game</div><div class="tri" style="left:77px;top:661px"></div><div style="left:91px;top:654px;width:85px;height:19px;background:#444444;"></div><div style="left:176px;top:654px;width:1px;height:19px;background:#2a2a2a;"></div><div class="t u" style="left:100px;top:657px;">Display 1</div><div class="tri" style="left:163px;top:661px"></div><div style="left:177px;top:654px;width:159px;height:19px;background:#444444;"></div><div style="left:336px;top:654px;width:1px;height:19px;background:#2a2a2a;"></div><div class="t u" style="left:180px;top:657px;">Free Aspect</div><div class="tri" style="left:323px;top:661px"></div><div class="t u" style="left:343px;top:657px;">Scale</div><div style="left:385px;top:662px;width:145px;height:1px;background:#8a8a8a;"></div><svg style="left:380px;top:658px" width="11" height="11"><circle cx="5.5" cy="5.5" r="5" fill="#9a9a9a"/></svg><div class="t u" style="left:535px;top:657px;">1x</div><div style="left:577px;top:654px;width:110px;height:19px;background:#444444;"></div><div style="left:687px;top:654px;width:1px;height:19px;background:#2a2a2a;"></div><div class="t u" style="left:581px;top:657px;">Play Focused</div><div class="tri" style="left:673px;top:661px"></div><div style="left:688px;top:654px;width:145px;height:19px;background:#444444;"></div><div style="left:713px;top:654px;width:1px;height:19px;background:#2a2a2a;"></div><div style="left:739px;top:654px;width:1px;height:19px;background:#2a2a2a;"></div><div style="left:765px;top:654px;width:1px;height:19px;background:#2a2a2a;"></div><div style="left:805px;top:654px;width:1px;height:19px;background:#2a2a2a;"></div><svg style="left:692px;top:656px" width="17" height="15"><ellipse cx="8.5" cy="8.5" rx="4.5" ry="5" fill="#d0d0d0"/><path d="M2 5 L5 6.5 M15 5 L12 6.5 M1.5 9 H4.5 M15.5 9 H12.5 M2 13 L5 11.5 M15 13 L12 11.5 M6 2 L7 3.5 M11 2 L10 3.5" stroke="#d0d0d0" stroke-width="1.2"/><rect x="6.5" y="6.5" width="4" height="4" fill="#444"/></svg><svg style="left:718px;top:657px" width="16" height="13"><rect x="1" y="4" width="3" height="5" fill="#d8d8d8"/><path d="M4 4 L8 1 V12 L4 9Z" fill="#d8d8d8"/><path d="M10 4 Q11.5 6.5 10 9 M12 2.5 Q14.5 6.5 12 10.5" fill="none" stroke="#d8d8d8" stroke-width="1.2"/></svg><svg style="left:744px;top:658px" width="16" height="11"><rect x="0.5" y="0.5" width="15" height="10" fill="none" stroke="#d0d0d0" stroke-width="1.1"/><path d="M2.5 3 H13.5 M2.5 5.5 H13.5 M4 8 H12" stroke="#d0d0d0" stroke-width="1" stroke-dasharray="1.2 1"/></svg><div class="t u" style="left:770px;top:657px;">Stats</div><div class="t u" style="left:809px;top:657px;">Gizmos</div><div style="left:856px;top:656px;width:1px;height:15px;background:#2a2a2a;"></div><div class="tri" style="left:861px;top:661px"></div><svg style="left:0px;top:673px;overflow:hidden" width="875" height="345" shape-rendering="crispEdges"><rect x="0" y="0" width="875" height="345" fill="#1b0e19"/><rect x="-28" y="-15" width="72" height="20" fill="#25245c"/><rect x="-28" y="-15" width="54" height="4" fill="#313b63"/><rect x="-28" y="-11" width="3" height="8" fill="#313b63"/><rect x="-6" y="-11" width="24" height="3" fill="#313b63"/><rect x="-28" y="0" width="72" height="5" fill="#2a1a45"/><rect x="40" y="-5" width="4" height="10" fill="#2a1a45"/><rect x="49" y="-15" width="30" height="20" fill="#25245c"/><rect x="49" y="-15" width="19" height="4" fill="#313b63"/><rect x="49" y="-11" width="3" height="8" fill="#313b63"/><rect x="49" y="0" width="30" height="5" fill="#2a1a45"/><rect x="75" y="-5" width="4" height="10" fill="#2a1a45"/><rect x="84" y="-18" width="24" height="23" fill="#25245c"/><rect x="84" y="-18" width="13" height="4" fill="#313b63"/><rect x="84" y="-14" width="3" height="9" fill="#313b63"/><rect x="88" y="-14" width="8" height="3" fill="#313b63"/><rect x="84" y="0" width="24" height="5" fill="#2a1a45"/><rect x="104" y="-7" width="4" height="12" fill="#2a1a45"/><rect x="113" y="-15" width="52" height="20" fill="#25245c"/><rect x="113" y="-15" width="37" height="4" fill="#313b63"/><rect x="113" y="-11" width="3" height="8" fill="#313b63"/><rect x="113" y="0" width="52" height="5" fill="#2a1a45"/><rect x="161" y="-5" width="4" height="10" fill="#2a1a45"/><rect x="170" y="-15" width="24" height="20" fill="#25245c"/><rect x="170" y="-15" width="18" height="4" fill="#313b63"/><rect x="170" y="-11" width="3" height="8" fill="#313b63"/><rect x="174" y="-11" width="8" height="3" fill="#313b63"/><rect x="170" y="0" width="24" height="5" fill="#2a1a45"/><rect x="190" y="-5" width="4" height="10" fill="#2a1a45"/><rect x="199" y="-15" width="30" height="20" fill="#25245c"/><rect x="199" y="-15" width="20" height="4" fill="#313b63"/><rect x="199" y="-11" width="3" height="8" fill="#313b63"/><rect x="199" y="0" width="30" height="5" fill="#2a1a45"/><rect x="225" y="-5" width="4" height="10" fill="#2a1a45"/><rect x="234" y="-15" width="44" height="20" fill="#25245c"/><rect x="234" y="-15" width="34" height="4" fill="#313b63"/><rect x="234" y="-11" width="3" height="8" fill="#313b63"/><rect x="234" y="0" width="44" height="5" fill="#2a1a45"/><rect x="274" y="-5" width="4" height="10" fill="#2a1a45"/><rect x="283" y="-15" width="36" height="20" fill="#25245c"/><rect x="283" y="-15" width="25" height="4" fill="#313b63"/><rect x="283" y="-11" width="3" height="8" fill="#313b63"/><rect x="291" y="-11" width="12" height="3" fill="#313b63"/><rect x="283" y="0" width="36" height="5" fill="#2a1a45"/><rect x="315" y="-5" width="4" height="10" fill="#2a1a45"/><rect x="324" y="-15" width="52" height="20" fill="#25245c"/><rect x="324" y="-15" width="44" height="4" fill="#313b63"/><rect x="324" y="-11" width="3" height="8" fill="#313b63"/><rect x="324" y="0" width="52" height="5" fill="#2a1a45"/><rect x="372" y="-5" width="4" height="10" fill="#2a1a45"/><rect x="381" y="-15" width="36" height="20" fill="#25245c"/><rect x="381" y="-15" width="19" height="4" fill="#313b63"/><rect x="381" y="-11" width="3" height="8" fill="#313b63"/><rect x="386" y="-11" width="12" height="3" fill="#313b63"/><rect x="381" y="0" width="36" height="5" fill="#2a1a45"/><rect x="413" y="-5" width="4" height="10" fill="#2a1a45"/><rect x="422" y="-15" width="18" height="20" fill="#25245c"/><rect x="422" y="-15" width="14" height="4" fill="#313b63"/><rect x="422" y="-11" width="3" height="8" fill="#313b63"/><rect x="422" y="0" width="18" height="5" fill="#2a1a45"/><rect x="436" y="-5" width="4" height="10" fill="#2a1a45"/><rect x="445" y="-15" width="14" height="20" fill="#25245c"/><rect x="445" y="-15" width="6" height="4" fill="#313b63"/><rect x="445" y="-11" width="3" height="8" fill="#313b63"/><rect x="445" y="0" width="14" height="5" fill="#2a1a45"/><rect x="455" y="-5" width="4" height="10" fill="#2a1a45"/><rect x="464" y="-15" width="14" height="20" fill="#25245c"/><rect x="464" y="-15" width="11" height="4" fill="#313b63"/><rect x="464" y="-11" width="3" height="8" fill="#313b63"/><rect x="464" y="0" width="14" height="5" fill="#2a1a45"/><rect x="474" y="-5" width="4" height="10" fill="#2a1a45"/><rect x="483" y="-15" width="18" height="20" fill="#25245c"/><rect x="483" y="-15" width="9" height="4" fill="#313b63"/><rect x="483" y="-11" width="3" height="8" fill="#313b63"/><rect x="483" y="0" width="18" height="5" fill="#2a1a45"/><rect x="497" y="-5" width="4" height="10" fill="#2a1a45"/><rect x="506" y="-18" width="44" height="23" fill="#25245c"/><rect x="506" y="-18" width="25" height="4" fill="#313b63"/><rect x="506" y="-14" width="3" height="9" fill="#313b63"/><rect x="506" y="0" width="44" height="5" fill="#2a1a45"/><rect x="546" y="-7" width="4" height="12" fill="#2a1a45"/><rect x="555" y="-15" width="18" height="20" fill="#25245c"/><rect x="555" y="-15" width="13" height="4" fill="#313b63"/><rect x="555" y="-11" width="3" height="8" fill="#313b63"/><rect x="555" y="0" width="18" height="5" fill="#2a1a45"/><rect x="569" y="-5" width="4" height="10" fill="#2a1a45"/><rect x="578" y="-15" width="60" height="20" fill="#25245c"/><rect x="578" y="-15" width="31" height="4" fill="#313b63"/><rect x="578" y="-11" width="3" height="8" fill="#313b63"/><rect x="578" y="0" width="60" height="5" fill="#2a1a45"/><rect x="634" y="-5" width="4" height="10" fill="#2a1a45"/><rect x="643" y="-15" width="60" height="20" fill="#25245c"/><rect x="643" y="-15" width="50" height="4" fill="#313b63"/><rect x="643" y="-11" width="3" height="8" fill="#313b63"/><rect x="643" y="0" width="60" height="5" fill="#2a1a45"/><rect x="699" y="-5" width="4" height="10" fill="#2a1a45"/><rect x="708" y="-15" width="52" height="20" fill="#25245c"/><rect x="708" y="-15" width="25" height="4" fill="#313b63"/><rect x="708" y="-11" width="3" height="8" fill="#313b63"/><rect x="715" y="-11" width="17" height="3" fill="#313b63"/><rect x="708" y="0" width="52" height="5" fill="#2a1a45"/><rect x="756" y="-5" width="4" height="10" fill="#2a1a45"/><rect x="765" y="-15" width="14" height="20" fill="#25245c"/><rect x="765" y="-15" width="11" height="4" fill="#313b63"/><rect x="765" y="-11" width="3" height="8" fill="#313b63"/><rect x="765" y="0" width="14" height="5" fill="#2a1a45"/><rect x="775" y="-5" width="4" height="10" fill="#2a1a45"/><rect x="784" y="-15" width="36" height="20" fill="#25245c"/><rect x="784" y="-15" width="16" height="4" fill="#313b63"/><rect x="784" y="-11" width="3" height="8" fill="#313b63"/><rect x="789" y="-11" width="12" height="3" fill="#313b63"/><rect x="784" y="0" width="36" height="5" fill="#2a1a45"/><rect x="816" y="-5" width="4" height="10" fill="#2a1a45"/><rect x="825" y="-15" width="14" height="20" fill="#25245c"/><rect x="825" y="-15" width="7" height="4" fill="#313b63"/><rect x="825" y="-11" width="3" height="8" fill="#313b63"/><rect x="825" y="0" width="14" height="5" fill="#2a1a45"/><rect x="835" y="-5" width="4" height="10" fill="#2a1a45"/><rect x="844" y="-15" width="44" height="20" fill="#25245c"/><rect x="844" y="-15" width="26" height="4" fill="#313b63"/><rect x="844" y="-11" width="3" height="8" fill="#313b63"/><rect x="851" y="-11" width="14" height="3" fill="#313b63"/><rect x="844" y="0" width="44" height="5" fill="#2a1a45"/><rect x="884" y="-5" width="4" height="10" fill="#2a1a45"/><rect x="-37" y="9" width="30" height="23" fill="#25245c"/><rect x="-37" y="9" width="17" height="4" fill="#313b63"/><rect x="-37" y="13" width="3" height="9" fill="#313b63"/><rect x="-37" y="27" width="30" height="5" fill="#2a1a45"/><rect x="-11" y="20" width="4" height="12" fill="#2a1a45"/><rect x="-2" y="12" width="24" height="20" fill="#25245c"/><rect x="-2" y="12" width="15" height="4" fill="#313b63"/><rect x="-2" y="16" width="3" height="8" fill="#313b63"/><rect x="-2" y="27" width="24" height="5" fill="#2a1a45"/><rect x="18" y="22" width="4" height="10" fill="#2a1a45"/><rect x="27" y="12" width="52" height="20" fill="#25245c"/><rect x="27" y="12" width="26" height="4" fill="#313b63"/><rect x="27" y="16" width="3" height="8" fill="#313b63"/><rect x="27" y="27" width="52" height="5" fill="#2a1a45"/><rect x="75" y="22" width="4" height="10" fill="#2a1a45"/><rect x="84" y="12" width="30" height="20" fill="#25245c"/><rect x="84" y="12" width="15" height="4" fill="#313b63"/><rect x="84" y="16" width="3" height="8" fill="#313b63"/><rect x="84" y="27" width="30" height="5" fill="#2a1a45"/><rect x="110" y="22" width="4" height="10" fill="#2a1a45"/><rect x="119" y="12" width="72" height="20" fill="#25245c"/><rect x="119" y="12" width="59" height="4" fill="#313b63"/><rect x="119" y="16" width="3" height="8" fill="#313b63"/><rect x="119" y="27" width="72" height="5" fill="#2a1a45"/><rect x="187" y="22" width="4" height="10" fill="#2a1a45"/><rect x="196" y="12" width="18" height="20" fill="#25245c"/><rect x="196" y="12" width="8" height="4" fill="#313b63"/><rect x="196" y="16" width="3" height="8" fill="#313b63"/><rect x="196" y="27" width="18" height="5" fill="#2a1a45"/><rect x="210" y="22" width="4" height="10" fill="#2a1a45"/><rect x="219" y="12" width="36" height="20" fill="#25245c"/><rect x="219" y="12" width="26" height="4" fill="#313b63"/><rect x="219" y="16" width="3" height="8" fill="#313b63"/><rect x="230" y="16" width="12" height="3" fill="#313b63"/><rect x="219" y="27" width="36" height="5" fill="#2a1a45"/><rect x="251" y="22" width="4" height="10" fill="#2a1a45"/><rect x="260" y="12" width="36" height="20" fill="#25245c"/><rect x="260" y="12" width="29" height="4" fill="#313b63"/><rect x="260" y="16" width="3" height="8" fill="#313b63"/><rect x="260" y="27" width="36" height="5" fill="#2a1a45"/><rect x="292" y="22" width="4" height="10" fill="#2a1a45"/><rect x="301" y="12" width="24" height="20" fill="#25245c"/><rect x="301" y="12" width="16" height="4" fill="#313b63"/><rect x="301" y="16" width="3" height="8" fill="#313b63"/><rect x="301" y="27" width="24" height="5" fill="#2a1a45"/><rect x="321" y="22" width="4" height="10" fill="#2a1a45"/><rect x="330" y="12" width="18" height="20" fill="#25245c"/><rect x="330" y="12" width="14" height="4" fill="#313b63"/><rect x="330" y="16" width="3" height="8" fill="#313b63"/><rect x="330" y="27" width="18" height="5" fill="#2a1a45"/><rect x="344" y="22" width="4" height="10" fill="#2a1a45"/><rect x="353" y="9" width="14" height="23" fill="#25245c"/><rect x="353" y="9" width="8" height="4" fill="#313b63"/><rect x="353" y="13" width="3" height="9" fill="#313b63"/><rect x="353" y="27" width="14" height="5" fill="#2a1a45"/><rect x="363" y="20" width="4" height="12" fill="#2a1a45"/><rect x="372" y="12" width="14" height="20" fill="#25245c"/><rect x="372" y="12" width="8" height="4" fill="#313b63"/><rect x="372" y="16" width="3" height="8" fill="#313b63"/><rect x="372" y="27" width="14" height="5" fill="#2a1a45"/><rect x="382" y="22" width="4" height="10" fill="#2a1a45"/><rect x="391" y="9" width="24" height="23" fill="#25245c"/><rect x="391" y="9" width="12" height="4" fill="#313b63"/><rect x="391" y="13" width="3" height="9" fill="#313b63"/><rect x="397" y="13" width="8" height="3" fill="#313b63"/><rect x="391" y="27" width="24" height="5" fill="#2a1a45"/><rect x="411" y="20" width="4" height="12" fill="#2a1a45"/><rect x="420" y="12" width="72" height="20" fill="#25245c"/><rect x="420" y="12" width="36" height="4" fill="#313b63"/><rect x="420" y="16" width="3" height="8" fill="#313b63"/><rect x="424" y="16" width="24" height="3" fill="#313b63"/><rect x="420" y="27" width="72" height="5" fill="#2a1a45"/><rect x="488" y="22" width="4" height="10" fill="#2a1a45"/><rect x="497" y="12" width="60" height="20" fill="#25245c"/><rect x="497" y="12" width="43" height="4" fill="#313b63"/><rect x="497" y="16" width="3" height="8" fill="#313b63"/><rect x="497" y="27" width="60" height="5" fill="#2a1a45"/><rect x="553" y="22" width="4" height="10" fill="#2a1a45"/><rect x="562" y="12" width="14" height="20" fill="#25245c"/><rect x="562" y="12" width="6" height="4" fill="#313b63"/><rect x="562" y="16" width="3" height="8" fill="#313b63"/><rect x="562" y="27" width="14" height="5" fill="#2a1a45"/><rect x="572" y="22" width="4" height="10" fill="#2a1a45"/><rect x="581" y="12" width="36" height="20" fill="#25245c"/><rect x="581" y="12" width="30" height="4" fill="#313b63"/><rect x="581" y="16" width="3" height="8" fill="#313b63"/><rect x="593" y="16" width="12" height="3" fill="#313b63"/><rect x="581" y="27" width="36" height="5" fill="#2a1a45"/><rect x="613" y="22" width="4" height="10" fill="#2a1a45"/><rect x="622" y="12" width="44" height="20" fill="#25245c"/><rect x="622" y="12" width="35" height="4" fill="#313b63"/><rect x="622" y="16" width="3" height="8" fill="#313b63"/><rect x="622" y="27" width="44" height="5" fill="#2a1a45"/><rect x="662" y="22" width="4" height="10" fill="#2a1a45"/><rect x="671" y="12" width="24" height="20" fill="#25245c"/><rect x="671" y="12" width="19" height="4" fill="#313b63"/><rect x="671" y="16" width="3" height="8" fill="#313b63"/><rect x="678" y="16" width="8" height="3" fill="#313b63"/><rect x="671" y="27" width="24" height="5" fill="#2a1a45"/><rect x="691" y="22" width="4" height="10" fill="#2a1a45"/><rect x="700" y="12" width="18" height="20" fill="#25245c"/><rect x="700" y="12" width="11" height="4" fill="#313b63"/><rect x="700" y="16" width="3" height="8" fill="#313b63"/><rect x="700" y="27" width="18" height="5" fill="#2a1a45"/><rect x="714" y="22" width="4" height="10" fill="#2a1a45"/><rect x="723" y="12" width="60" height="20" fill="#25245c"/><rect x="723" y="12" width="41" height="4" fill="#313b63"/><rect x="723" y="16" width="3" height="8" fill="#313b63"/><rect x="727" y="16" width="20" height="3" fill="#313b63"/><rect x="723" y="27" width="60" height="5" fill="#2a1a45"/><rect x="779" y="22" width="4" height="10" fill="#2a1a45"/><rect x="788" y="9" width="18" height="23" fill="#25245c"/><rect x="788" y="9" width="12" height="4" fill="#313b63"/><rect x="788" y="13" width="3" height="9" fill="#313b63"/><rect x="788" y="27" width="18" height="5" fill="#2a1a45"/><rect x="802" y="20" width="4" height="12" fill="#2a1a45"/><rect x="811" y="12" width="52" height="20" fill="#25245c"/><rect x="811" y="12" width="31" height="4" fill="#313b63"/><rect x="811" y="16" width="3" height="8" fill="#313b63"/><rect x="811" y="27" width="52" height="5" fill="#2a1a45"/><rect x="859" y="22" width="4" height="10" fill="#2a1a45"/><rect x="868" y="12" width="60" height="20" fill="#25245c"/><rect x="868" y="12" width="47" height="4" fill="#313b63"/><rect x="868" y="16" width="3" height="8" fill="#313b63"/><rect x="888" y="16" width="20" height="3" fill="#313b63"/><rect x="868" y="27" width="60" height="5" fill="#2a1a45"/><rect x="924" y="22" width="4" height="10" fill="#2a1a45"/><rect x="-1" y="39" width="36" height="20" fill="#25245c"/><rect x="-1" y="39" width="23" height="4" fill="#313b63"/><rect x="-1" y="43" width="3" height="8" fill="#313b63"/><rect x="4" y="43" width="12" height="3" fill="#313b63"/><rect x="-1" y="54" width="36" height="5" fill="#2a1a45"/><rect x="31" y="49" width="4" height="10" fill="#2a1a45"/><rect x="40" y="39" width="60" height="20" fill="#25245c"/><rect x="40" y="39" width="42" height="4" fill="#313b63"/><rect x="40" y="43" width="3" height="8" fill="#313b63"/><rect x="44" y="43" width="20" height="3" fill="#313b63"/><rect x="40" y="54" width="60" height="5" fill="#2a1a45"/><rect x="96" y="49" width="4" height="10" fill="#2a1a45"/><rect x="105" y="39" width="44" height="20" fill="#25245c"/><rect x="105" y="39" width="31" height="4" fill="#313b63"/><rect x="105" y="43" width="3" height="8" fill="#313b63"/><rect x="111" y="43" width="14" height="3" fill="#313b63"/><rect x="105" y="54" width="44" height="5" fill="#2a1a45"/><rect x="145" y="49" width="4" height="10" fill="#2a1a45"/><rect x="154" y="39" width="44" height="20" fill="#25245c"/><rect x="154" y="39" width="27" height="4" fill="#313b63"/><rect x="154" y="43" width="3" height="8" fill="#313b63"/><rect x="154" y="54" width="44" height="5" fill="#2a1a45"/><rect x="194" y="49" width="4" height="10" fill="#2a1a45"/><rect x="203" y="39" width="44" height="20" fill="#25245c"/><rect x="203" y="39" width="24" height="4" fill="#313b63"/><rect x="203" y="43" width="3" height="8" fill="#313b63"/><rect x="203" y="54" width="44" height="5" fill="#2a1a45"/><rect x="243" y="49" width="4" height="10" fill="#2a1a45"/><rect x="252" y="39" width="30" height="20" fill="#25245c"/><rect x="252" y="39" width="18" height="4" fill="#313b63"/><rect x="252" y="43" width="3" height="8" fill="#313b63"/><rect x="252" y="54" width="30" height="5" fill="#2a1a45"/><rect x="278" y="49" width="4" height="10" fill="#2a1a45"/><rect x="287" y="39" width="44" height="20" fill="#25245c"/><rect x="287" y="39" width="22" height="4" fill="#313b63"/><rect x="287" y="43" width="3" height="8" fill="#313b63"/><rect x="291" y="43" width="14" height="3" fill="#313b63"/><rect x="287" y="54" width="44" height="5" fill="#2a1a45"/><rect x="327" y="49" width="4" height="10" fill="#2a1a45"/><rect x="336" y="39" width="18" height="20" fill="#25245c"/><rect x="336" y="39" width="10" height="4" fill="#313b63"/><rect x="336" y="43" width="3" height="8" fill="#313b63"/><rect x="336" y="54" width="18" height="5" fill="#2a1a45"/><rect x="350" y="49" width="4" height="10" fill="#2a1a45"/><rect x="359" y="39" width="60" height="20" fill="#25245c"/><rect x="359" y="39" width="49" height="4" fill="#313b63"/><rect x="359" y="43" width="3" height="8" fill="#313b63"/><rect x="359" y="54" width="60" height="5" fill="#2a1a45"/><rect x="415" y="49" width="4" height="10" fill="#2a1a45"/><rect x="424" y="39" width="52" height="20" fill="#25245c"/><rect x="424" y="39" width="33" height="4" fill="#313b63"/><rect x="424" y="43" width="3" height="8" fill="#313b63"/><rect x="441" y="43" width="17" height="3" fill="#313b63"/><rect x="424" y="54" width="52" height="5" fill="#2a1a45"/><rect x="472" y="49" width="4" height="10" fill="#2a1a45"/><rect x="481" y="39" width="60" height="20" fill="#25245c"/><rect x="481" y="39" width="46" height="4" fill="#313b63"/><rect x="481" y="43" width="3" height="8" fill="#313b63"/><rect x="486" y="43" width="20" height="3" fill="#313b63"/><rect x="481" y="54" width="60" height="5" fill="#2a1a45"/><rect x="537" y="49" width="4" height="10" fill="#2a1a45"/><rect x="546" y="39" width="36" height="20" fill="#25245c"/><rect x="546" y="39" width="20" height="4" fill="#313b63"/><rect x="546" y="43" width="3" height="8" fill="#313b63"/><rect x="546" y="54" width="36" height="5" fill="#2a1a45"/><rect x="578" y="49" width="4" height="10" fill="#2a1a45"/><rect x="587" y="39" width="14" height="20" fill="#25245c"/><rect x="587" y="39" width="8" height="4" fill="#313b63"/><rect x="587" y="43" width="3" height="8" fill="#313b63"/><rect x="587" y="54" width="14" height="5" fill="#2a1a45"/><rect x="597" y="49" width="4" height="10" fill="#2a1a45"/><rect x="606" y="39" width="36" height="20" fill="#25245c"/><rect x="606" y="39" width="18" height="4" fill="#313b63"/><rect x="606" y="43" width="3" height="8" fill="#313b63"/><rect x="611" y="43" width="12" height="3" fill="#313b63"/><rect x="606" y="54" width="36" height="5" fill="#2a1a45"/><rect x="638" y="49" width="4" height="10" fill="#2a1a45"/><rect x="647" y="36" width="60" height="23" fill="#25245c"/><rect x="647" y="36" width="39" height="4" fill="#313b63"/><rect x="647" y="40" width="3" height="9" fill="#313b63"/><rect x="647" y="54" width="60" height="5" fill="#2a1a45"/><rect x="703" y="47" width="4" height="12" fill="#2a1a45"/><rect x="712" y="39" width="44" height="20" fill="#25245c"/><rect x="712" y="39" width="31" height="4" fill="#313b63"/><rect x="712" y="43" width="3" height="8" fill="#313b63"/><rect x="723" y="43" width="14" height="3" fill="#313b63"/><rect x="712" y="54" width="44" height="5" fill="#2a1a45"/><rect x="752" y="49" width="4" height="10" fill="#2a1a45"/><rect x="761" y="39" width="36" height="20" fill="#25245c"/><rect x="761" y="39" width="16" height="4" fill="#313b63"/><rect x="761" y="43" width="3" height="8" fill="#313b63"/><rect x="765" y="43" width="12" height="3" fill="#313b63"/><rect x="761" y="54" width="36" height="5" fill="#2a1a45"/><rect x="793" y="49" width="4" height="10" fill="#2a1a45"/><rect x="802" y="39" width="24" height="20" fill="#25245c"/><rect x="802" y="39" width="18" height="4" fill="#313b63"/><rect x="802" y="43" width="3" height="8" fill="#313b63"/><rect x="802" y="54" width="24" height="5" fill="#2a1a45"/><rect x="822" y="49" width="4" height="10" fill="#2a1a45"/><rect x="831" y="39" width="72" height="20" fill="#25245c"/><rect x="831" y="39" width="61" height="4" fill="#313b63"/><rect x="831" y="43" width="3" height="8" fill="#313b63"/><rect x="842" y="43" width="24" height="3" fill="#313b63"/><rect x="831" y="54" width="72" height="5" fill="#2a1a45"/><rect x="899" y="49" width="4" height="10" fill="#2a1a45"/><rect x="-5" y="65" width="52" height="20" fill="#25245c"/><rect x="-5" y="65" width="38" height="4" fill="#313b63"/><rect x="-5" y="69" width="3" height="8" fill="#313b63"/><rect x="6" y="69" width="17" height="3" fill="#313b63"/><rect x="-5" y="80" width="52" height="5" fill="#2a1a45"/><rect x="43" y="75" width="4" height="10" fill="#2a1a45"/><rect x="52" y="65" width="30" height="20" fill="#25245c"/><rect x="52" y="65" width="24" height="4" fill="#313b63"/><rect x="52" y="69" width="3" height="8" fill="#313b63"/><rect x="60" y="69" width="10" height="3" fill="#313b63"/><rect x="52" y="80" width="30" height="5" fill="#2a1a45"/><rect x="78" y="75" width="4" height="10" fill="#2a1a45"/><rect x="87" y="65" width="72" height="20" fill="#25245c"/><rect x="87" y="65" width="59" height="4" fill="#313b63"/><rect x="87" y="69" width="3" height="8" fill="#313b63"/><rect x="111" y="69" width="24" height="3" fill="#313b63"/><rect x="87" y="80" width="72" height="5" fill="#2a1a45"/><rect x="155" y="75" width="4" height="10" fill="#2a1a45"/><rect x="164" y="62" width="30" height="23" fill="#25245c"/><rect x="164" y="62" width="23" height="4" fill="#313b63"/><rect x="164" y="66" width="3" height="9" fill="#313b63"/><rect x="164" y="80" width="30" height="5" fill="#2a1a45"/><rect x="190" y="73" width="4" height="12" fill="#2a1a45"/><rect x="199" y="65" width="18" height="20" fill="#25245c"/><rect x="199" y="65" width="14" height="4" fill="#313b63"/><rect x="199" y="69" width="3" height="8" fill="#313b63"/><rect x="199" y="80" width="18" height="5" fill="#2a1a45"/><rect x="213" y="75" width="4" height="10" fill="#2a1a45"/><rect x="222" y="65" width="36" height="20" fill="#25245c"/><rect x="222" y="65" width="27" height="4" fill="#313b63"/><rect x="222" y="69" width="3" height="8" fill="#313b63"/><rect x="226" y="69" width="12" height="3" fill="#313b63"/><rect x="222" y="80" width="36" height="5" fill="#2a1a45"/><rect x="254" y="75" width="4" height="10" fill="#2a1a45"/><rect x="263" y="65" width="44" height="20" fill="#25245c"/><rect x="263" y="65" width="20" height="4" fill="#313b63"/><rect x="263" y="69" width="3" height="8" fill="#313b63"/><rect x="273" y="69" width="14" height="3" fill="#313b63"/><rect x="263" y="80" width="44" height="5" fill="#2a1a45"/><rect x="303" y="75" width="4" height="10" fill="#2a1a45"/><rect x="312" y="65" width="36" height="20" fill="#25245c"/><rect x="312" y="65" width="16" height="4" fill="#313b63"/><rect x="312" y="69" width="3" height="8" fill="#313b63"/><rect x="312" y="80" width="36" height="5" fill="#2a1a45"/><rect x="344" y="75" width="4" height="10" fill="#2a1a45"/><rect x="353" y="65" width="18" height="20" fill="#25245c"/><rect x="353" y="65" width="8" height="4" fill="#313b63"/><rect x="353" y="69" width="3" height="8" fill="#313b63"/><rect x="353" y="80" width="18" height="5" fill="#2a1a45"/><rect x="367" y="75" width="4" height="10" fill="#2a1a45"/><rect x="376" y="65" width="24" height="20" fill="#25245c"/><rect x="376" y="65" width="20" height="4" fill="#313b63"/><rect x="376" y="69" width="3" height="8" fill="#313b63"/><rect x="376" y="80" width="24" height="5" fill="#2a1a45"/><rect x="396" y="75" width="4" height="10" fill="#2a1a45"/><rect x="405" y="65" width="72" height="20" fill="#25245c"/><rect x="405" y="65" width="52" height="4" fill="#313b63"/><rect x="405" y="69" width="3" height="8" fill="#313b63"/><rect x="405" y="80" width="72" height="5" fill="#2a1a45"/><rect x="473" y="75" width="4" height="10" fill="#2a1a45"/><rect x="482" y="65" width="60" height="20" fill="#25245c"/><rect x="482" y="65" width="43" height="4" fill="#313b63"/><rect x="482" y="69" width="3" height="8" fill="#313b63"/><rect x="482" y="80" width="60" height="5" fill="#2a1a45"/><rect x="538" y="75" width="4" height="10" fill="#2a1a45"/><rect x="547" y="65" width="60" height="20" fill="#25245c"/><rect x="547" y="65" width="33" height="4" fill="#313b63"/><rect x="547" y="69" width="3" height="8" fill="#313b63"/><rect x="547" y="80" width="60" height="5" fill="#2a1a45"/><rect x="603" y="75" width="4" height="10" fill="#2a1a45"/><rect x="612" y="65" width="24" height="20" fill="#25245c"/><rect x="612" y="65" width="18" height="4" fill="#313b63"/><rect x="612" y="69" width="3" height="8" fill="#313b63"/><rect x="612" y="80" width="24" height="5" fill="#2a1a45"/><rect x="632" y="75" width="4" height="10" fill="#2a1a45"/><rect x="641" y="65" width="36" height="20" fill="#25245c"/><rect x="641" y="65" width="29" height="4" fill="#313b63"/><rect x="641" y="69" width="3" height="8" fill="#313b63"/><rect x="641" y="80" width="36" height="5" fill="#2a1a45"/><rect x="673" y="75" width="4" height="10" fill="#2a1a45"/><rect x="682" y="65" width="30" height="20" fill="#25245c"/><rect x="682" y="65" width="15" height="4" fill="#313b63"/><rect x="682" y="69" width="3" height="8" fill="#313b63"/><rect x="682" y="80" width="30" height="5" fill="#2a1a45"/><rect x="708" y="75" width="4" height="10" fill="#2a1a45"/><rect x="717" y="65" width="36" height="20" fill="#25245c"/><rect x="717" y="65" width="19" height="4" fill="#313b63"/><rect x="717" y="69" width="3" height="8" fill="#313b63"/><rect x="717" y="80" width="36" height="5" fill="#2a1a45"/><rect x="749" y="75" width="4" height="10" fill="#2a1a45"/><rect x="758" y="62" width="72" height="23" fill="#25245c"/><rect x="758" y="62" width="43" height="4" fill="#313b63"/><rect x="758" y="66" width="3" height="9" fill="#313b63"/><rect x="758" y="80" width="72" height="5" fill="#2a1a45"/><rect x="826" y="73" width="4" height="12" fill="#2a1a45"/><rect x="835" y="65" width="14" height="20" fill="#25245c"/><rect x="835" y="65" width="8" height="4" fill="#313b63"/><rect x="835" y="69" width="3" height="8" fill="#313b63"/><rect x="835" y="80" width="14" height="5" fill="#2a1a45"/><rect x="845" y="75" width="4" height="10" fill="#2a1a45"/><rect x="854" y="65" width="18" height="20" fill="#25245c"/><rect x="854" y="65" width="13" height="4" fill="#313b63"/><rect x="854" y="69" width="3" height="8" fill="#313b63"/><rect x="854" y="80" width="18" height="5" fill="#2a1a45"/><rect x="868" y="75" width="4" height="10" fill="#2a1a45"/><rect x="-34" y="92" width="60" height="20" fill="#25245c"/><rect x="-34" y="92" width="49" height="4" fill="#313b63"/><rect x="-34" y="96" width="3" height="8" fill="#313b63"/><rect x="-34" y="107" width="60" height="5" fill="#2a1a45"/><rect x="22" y="102" width="4" height="10" fill="#2a1a45"/><rect x="31" y="92" width="36" height="20" fill="#25245c"/><rect x="31" y="92" width="23" height="4" fill="#313b63"/><rect x="31" y="96" width="3" height="8" fill="#313b63"/><rect x="42" y="96" width="12" height="3" fill="#313b63"/><rect x="31" y="107" width="36" height="5" fill="#2a1a45"/><rect x="63" y="102" width="4" height="10" fill="#2a1a45"/><rect x="72" y="92" width="72" height="20" fill="#25245c"/><rect x="72" y="92" width="37" height="4" fill="#313b63"/><rect x="72" y="96" width="3" height="8" fill="#313b63"/><rect x="72" y="107" width="72" height="5" fill="#2a1a45"/><rect x="140" y="102" width="4" height="10" fill="#2a1a45"/><rect x="149" y="92" width="36" height="20" fill="#25245c"/><rect x="149" y="92" width="27" height="4" fill="#313b63"/><rect x="149" y="96" width="3" height="8" fill="#313b63"/><rect x="156" y="96" width="12" height="3" fill="#313b63"/><rect x="149" y="107" width="36" height="5" fill="#2a1a45"/><rect x="181" y="102" width="4" height="10" fill="#2a1a45"/><rect x="190" y="92" width="24" height="20" fill="#25245c"/><rect x="190" y="92" width="17" height="4" fill="#313b63"/><rect x="190" y="96" width="3" height="8" fill="#313b63"/><rect x="196" y="96" width="8" height="3" fill="#313b63"/><rect x="190" y="107" width="24" height="5" fill="#2a1a45"/><rect x="210" y="102" width="4" height="10" fill="#2a1a45"/><rect x="219" y="92" width="30" height="20" fill="#25245c"/><rect x="219" y="92" width="14" height="4" fill="#313b63"/><rect x="219" y="96" width="3" height="8" fill="#313b63"/><rect x="219" y="107" width="30" height="5" fill="#2a1a45"/><rect x="245" y="102" width="4" height="10" fill="#2a1a45"/><rect x="254" y="92" width="18" height="20" fill="#25245c"/><rect x="254" y="92" width="12" height="4" fill="#313b63"/><rect x="254" y="96" width="3" height="8" fill="#313b63"/><rect x="254" y="107" width="18" height="5" fill="#2a1a45"/><rect x="268" y="102" width="4" height="10" fill="#2a1a45"/><rect x="277" y="92" width="72" height="20" fill="#25245c"/><rect x="277" y="92" width="33" height="4" fill="#313b63"/><rect x="277" y="96" width="3" height="8" fill="#313b63"/><rect x="277" y="107" width="72" height="5" fill="#2a1a45"/><rect x="345" y="102" width="4" height="10" fill="#2a1a45"/><rect x="354" y="92" width="72" height="20" fill="#25245c"/><rect x="354" y="92" width="47" height="4" fill="#313b63"/><rect x="354" y="96" width="3" height="8" fill="#313b63"/><rect x="354" y="107" width="72" height="5" fill="#2a1a45"/><rect x="422" y="102" width="4" height="10" fill="#2a1a45"/><rect x="431" y="92" width="72" height="20" fill="#25245c"/><rect x="431" y="92" width="47" height="4" fill="#313b63"/><rect x="431" y="96" width="3" height="8" fill="#313b63"/><rect x="431" y="107" width="72" height="5" fill="#2a1a45"/><rect x="499" y="102" width="4" height="10" fill="#2a1a45"/><rect x="508" y="92" width="24" height="20" fill="#25245c"/><rect x="508" y="92" width="17" height="4" fill="#313b63"/><rect x="508" y="96" width="3" height="8" fill="#313b63"/><rect x="508" y="107" width="24" height="5" fill="#2a1a45"/><rect x="528" y="102" width="4" height="10" fill="#2a1a45"/><rect x="537" y="92" width="24" height="20" fill="#25245c"/><rect x="537" y="92" width="13" height="4" fill="#313b63"/><rect x="537" y="96" width="3" height="8" fill="#313b63"/><rect x="537" y="107" width="24" height="5" fill="#2a1a45"/><rect x="557" y="102" width="4" height="10" fill="#2a1a45"/><rect x="566" y="92" width="30" height="20" fill="#25245c"/><rect x="566" y="92" width="15" height="4" fill="#313b63"/><rect x="566" y="96" width="3" height="8" fill="#313b63"/><rect x="571" y="96" width="10" height="3" fill="#313b63"/><rect x="566" y="107" width="30" height="5" fill="#2a1a45"/><rect x="592" y="102" width="4" height="10" fill="#2a1a45"/><rect x="601" y="92" width="24" height="20" fill="#25245c"/><rect x="601" y="92" width="13" height="4" fill="#313b63"/><rect x="601" y="96" width="3" height="8" fill="#313b63"/><rect x="608" y="96" width="8" height="3" fill="#313b63"/><rect x="601" y="107" width="24" height="5" fill="#2a1a45"/><rect x="621" y="102" width="4" height="10" fill="#2a1a45"/><rect x="630" y="92" width="72" height="20" fill="#25245c"/><rect x="630" y="92" width="36" height="4" fill="#313b63"/><rect x="630" y="96" width="3" height="8" fill="#313b63"/><rect x="634" y="96" width="24" height="3" fill="#313b63"/><rect x="630" y="107" width="72" height="5" fill="#2a1a45"/><rect x="698" y="102" width="4" height="10" fill="#2a1a45"/><rect x="707" y="92" width="18" height="20" fill="#25245c"/><rect x="707" y="92" width="13" height="4" fill="#313b63"/><rect x="707" y="96" width="3" height="8" fill="#313b63"/><rect x="707" y="107" width="18" height="5" fill="#2a1a45"/><rect x="721" y="102" width="4" height="10" fill="#2a1a45"/><rect x="730" y="89" width="44" height="23" fill="#25245c"/><rect x="730" y="89" width="28" height="4" fill="#313b63"/><rect x="730" y="93" width="3" height="9" fill="#313b63"/><rect x="730" y="107" width="44" height="5" fill="#2a1a45"/><rect x="770" y="100" width="4" height="12" fill="#2a1a45"/><rect x="779" y="92" width="72" height="20" fill="#25245c"/><rect x="779" y="92" width="56" height="4" fill="#313b63"/><rect x="779" y="96" width="3" height="8" fill="#313b63"/><rect x="779" y="107" width="72" height="5" fill="#2a1a45"/><rect x="847" y="102" width="4" height="10" fill="#2a1a45"/><rect x="856" y="89" width="60" height="23" fill="#25245c"/><rect x="856" y="89" width="27" height="4" fill="#313b63"/><rect x="856" y="93" width="3" height="9" fill="#313b63"/><rect x="856" y="107" width="60" height="5" fill="#2a1a45"/><rect x="912" y="100" width="4" height="12" fill="#2a1a45"/><rect x="-32" y="119" width="60" height="20" fill="#25245c"/><rect x="-32" y="119" width="31" height="4" fill="#313b63"/><rect x="-32" y="123" width="3" height="8" fill="#313b63"/><rect x="-23" y="123" width="20" height="3" fill="#313b63"/><rect x="-32" y="134" width="60" height="5" fill="#2a1a45"/><rect x="24" y="129" width="4" height="10" fill="#2a1a45"/><rect x="33" y="119" width="36" height="20" fill="#25245c"/><rect x="33" y="119" width="17" height="4" fill="#313b63"/><rect x="33" y="123" width="3" height="8" fill="#313b63"/><rect x="44" y="123" width="12" height="3" fill="#313b63"/><rect x="33" y="134" width="36" height="5" fill="#2a1a45"/><rect x="65" y="129" width="4" height="10" fill="#2a1a45"/><rect x="74" y="119" width="18" height="20" fill="#25245c"/><rect x="74" y="119" width="10" height="4" fill="#313b63"/><rect x="74" y="123" width="3" height="8" fill="#313b63"/><rect x="74" y="134" width="18" height="5" fill="#2a1a45"/><rect x="88" y="129" width="4" height="10" fill="#2a1a45"/><rect x="97" y="119" width="72" height="20" fill="#25245c"/><rect x="97" y="119" width="38" height="4" fill="#313b63"/><rect x="97" y="123" width="3" height="8" fill="#313b63"/><rect x="121" y="123" width="24" height="3" fill="#313b63"/><rect x="97" y="134" width="72" height="5" fill="#2a1a45"/><rect x="165" y="129" width="4" height="10" fill="#2a1a45"/><rect x="174" y="119" width="14" height="20" fill="#25245c"/><rect x="174" y="119" width="7" height="4" fill="#313b63"/><rect x="174" y="123" width="3" height="8" fill="#313b63"/><rect x="174" y="134" width="14" height="5" fill="#2a1a45"/><rect x="184" y="129" width="4" height="10" fill="#2a1a45"/><rect x="193" y="119" width="44" height="20" fill="#25245c"/><rect x="193" y="119" width="23" height="4" fill="#313b63"/><rect x="193" y="123" width="3" height="8" fill="#313b63"/><rect x="205" y="123" width="14" height="3" fill="#313b63"/><rect x="193" y="134" width="44" height="5" fill="#2a1a45"/><rect x="233" y="129" width="4" height="10" fill="#2a1a45"/><rect x="242" y="119" width="14" height="20" fill="#25245c"/><rect x="242" y="119" width="6" height="4" fill="#313b63"/><rect x="242" y="123" width="3" height="8" fill="#313b63"/><rect x="242" y="134" width="14" height="5" fill="#2a1a45"/><rect x="252" y="129" width="4" height="10" fill="#2a1a45"/><rect x="261" y="119" width="52" height="20" fill="#25245c"/><rect x="261" y="119" width="27" height="4" fill="#313b63"/><rect x="261" y="123" width="3" height="8" fill="#313b63"/><rect x="261" y="134" width="52" height="5" fill="#2a1a45"/><rect x="309" y="129" width="4" height="10" fill="#2a1a45"/><rect x="318" y="119" width="44" height="20" fill="#25245c"/><rect x="318" y="119" width="24" height="4" fill="#313b63"/><rect x="318" y="123" width="3" height="8" fill="#313b63"/><rect x="318" y="134" width="44" height="5" fill="#2a1a45"/><rect x="358" y="129" width="4" height="10" fill="#2a1a45"/><rect x="367" y="119" width="24" height="20" fill="#25245c"/><rect x="367" y="119" width="14" height="4" fill="#313b63"/><rect x="367" y="123" width="3" height="8" fill="#313b63"/><rect x="367" y="134" width="24" height="5" fill="#2a1a45"/><rect x="387" y="129" width="4" height="10" fill="#2a1a45"/><rect x="396" y="119" width="72" height="20" fill="#25245c"/><rect x="396" y="119" width="54" height="4" fill="#313b63"/><rect x="396" y="123" width="3" height="8" fill="#313b63"/><rect x="396" y="134" width="72" height="5" fill="#2a1a45"/><rect x="464" y="129" width="4" height="10" fill="#2a1a45"/><rect x="473" y="119" width="52" height="20" fill="#25245c"/><rect x="473" y="119" width="27" height="4" fill="#313b63"/><rect x="473" y="123" width="3" height="8" fill="#313b63"/><rect x="473" y="134" width="52" height="5" fill="#2a1a45"/><rect x="521" y="129" width="4" height="10" fill="#2a1a45"/><rect x="530" y="119" width="36" height="20" fill="#25245c"/><rect x="530" y="119" width="16" height="4" fill="#313b63"/><rect x="530" y="123" width="3" height="8" fill="#313b63"/><rect x="534" y="123" width="12" height="3" fill="#313b63"/><rect x="530" y="134" width="36" height="5" fill="#2a1a45"/><rect x="562" y="129" width="4" height="10" fill="#2a1a45"/><rect x="571" y="119" width="30" height="20" fill="#25245c"/><rect x="571" y="119" width="25" height="4" fill="#313b63"/><rect x="571" y="123" width="3" height="8" fill="#313b63"/><rect x="576" y="123" width="10" height="3" fill="#313b63"/><rect x="571" y="134" width="30" height="5" fill="#2a1a45"/><rect x="597" y="129" width="4" height="10" fill="#2a1a45"/><rect x="606" y="119" width="52" height="20" fill="#25245c"/><rect x="606" y="119" width="34" height="4" fill="#313b63"/><rect x="606" y="123" width="3" height="8" fill="#313b63"/><rect x="617" y="123" width="17" height="3" fill="#313b63"/><rect x="606" y="134" width="52" height="5" fill="#2a1a45"/><rect x="654" y="129" width="4" height="10" fill="#2a1a45"/><rect x="663" y="119" width="30" height="20" fill="#25245c"/><rect x="663" y="119" width="22" height="4" fill="#313b63"/><rect x="663" y="123" width="3" height="8" fill="#313b63"/><rect x="663" y="134" width="30" height="5" fill="#2a1a45"/><rect x="689" y="129" width="4" height="10" fill="#2a1a45"/><rect x="698" y="116" width="14" height="23" fill="#25245c"/><rect x="698" y="116" width="6" height="4" fill="#313b63"/><rect x="698" y="120" width="3" height="9" fill="#313b63"/><rect x="698" y="134" width="14" height="5" fill="#2a1a45"/><rect x="708" y="127" width="4" height="12" fill="#2a1a45"/><rect x="717" y="119" width="60" height="20" fill="#25245c"/><rect x="717" y="119" width="28" height="4" fill="#313b63"/><rect x="717" y="123" width="3" height="8" fill="#313b63"/><rect x="733" y="123" width="20" height="3" fill="#313b63"/><rect x="717" y="134" width="60" height="5" fill="#2a1a45"/><rect x="773" y="129" width="4" height="10" fill="#2a1a45"/><rect x="782" y="116" width="14" height="23" fill="#25245c"/><rect x="782" y="116" width="7" height="4" fill="#313b63"/><rect x="782" y="120" width="3" height="9" fill="#313b63"/><rect x="782" y="134" width="14" height="5" fill="#2a1a45"/><rect x="792" y="127" width="4" height="12" fill="#2a1a45"/><rect x="801" y="119" width="72" height="20" fill="#25245c"/><rect x="801" y="119" width="44" height="4" fill="#313b63"/><rect x="801" y="123" width="3" height="8" fill="#313b63"/><rect x="801" y="134" width="72" height="5" fill="#2a1a45"/><rect x="869" y="129" width="4" height="10" fill="#2a1a45"/><rect x="-54" y="145" width="18" height="20" fill="#25245c"/><rect x="-54" y="145" width="13" height="4" fill="#313b63"/><rect x="-54" y="149" width="3" height="8" fill="#313b63"/><rect x="-54" y="160" width="18" height="5" fill="#2a1a45"/><rect x="-40" y="155" width="4" height="10" fill="#2a1a45"/><rect x="-31" y="145" width="14" height="20" fill="#25245c"/><rect x="-31" y="145" width="11" height="4" fill="#313b63"/><rect x="-31" y="149" width="3" height="8" fill="#313b63"/><rect x="-31" y="160" width="14" height="5" fill="#2a1a45"/><rect x="-21" y="155" width="4" height="10" fill="#2a1a45"/><rect x="-12" y="145" width="24" height="20" fill="#25245c"/><rect x="-12" y="145" width="16" height="4" fill="#313b63"/><rect x="-12" y="149" width="3" height="8" fill="#313b63"/><rect x="-12" y="160" width="24" height="5" fill="#2a1a45"/><rect x="8" y="155" width="4" height="10" fill="#2a1a45"/><rect x="17" y="145" width="52" height="20" fill="#25245c"/><rect x="17" y="145" width="32" height="4" fill="#313b63"/><rect x="17" y="149" width="3" height="8" fill="#313b63"/><rect x="17" y="160" width="52" height="5" fill="#2a1a45"/><rect x="65" y="155" width="4" height="10" fill="#2a1a45"/><rect x="74" y="145" width="36" height="20" fill="#25245c"/><rect x="74" y="145" width="20" height="4" fill="#313b63"/><rect x="74" y="149" width="3" height="8" fill="#313b63"/><rect x="74" y="160" width="36" height="5" fill="#2a1a45"/><rect x="106" y="155" width="4" height="10" fill="#2a1a45"/><rect x="115" y="145" width="72" height="20" fill="#25245c"/><rect x="115" y="145" width="51" height="4" fill="#313b63"/><rect x="115" y="149" width="3" height="8" fill="#313b63"/><rect x="115" y="160" width="72" height="5" fill="#2a1a45"/><rect x="183" y="155" width="4" height="10" fill="#2a1a45"/><rect x="192" y="142" width="14" height="23" fill="#25245c"/><rect x="192" y="142" width="7" height="4" fill="#313b63"/><rect x="192" y="146" width="3" height="9" fill="#313b63"/><rect x="192" y="160" width="14" height="5" fill="#2a1a45"/><rect x="202" y="153" width="4" height="12" fill="#2a1a45"/><rect x="211" y="145" width="24" height="20" fill="#25245c"/><rect x="211" y="145" width="17" height="4" fill="#313b63"/><rect x="211" y="149" width="3" height="8" fill="#313b63"/><rect x="217" y="149" width="8" height="3" fill="#313b63"/><rect x="211" y="160" width="24" height="5" fill="#2a1a45"/><rect x="231" y="155" width="4" height="10" fill="#2a1a45"/><rect x="240" y="142" width="52" height="23" fill="#25245c"/><rect x="240" y="142" width="43" height="4" fill="#313b63"/><rect x="240" y="146" width="3" height="9" fill="#313b63"/><rect x="240" y="160" width="52" height="5" fill="#2a1a45"/><rect x="288" y="153" width="4" height="12" fill="#2a1a45"/><rect x="297" y="145" width="18" height="20" fill="#25245c"/><rect x="297" y="145" width="9" height="4" fill="#313b63"/><rect x="297" y="149" width="3" height="8" fill="#313b63"/><rect x="297" y="160" width="18" height="5" fill="#2a1a45"/><rect x="311" y="155" width="4" height="10" fill="#2a1a45"/><rect x="320" y="145" width="36" height="20" fill="#25245c"/><rect x="320" y="145" width="19" height="4" fill="#313b63"/><rect x="320" y="149" width="3" height="8" fill="#313b63"/><rect x="320" y="160" width="36" height="5" fill="#2a1a45"/><rect x="352" y="155" width="4" height="10" fill="#2a1a45"/><rect x="361" y="145" width="60" height="20" fill="#25245c"/><rect x="361" y="145" width="50" height="4" fill="#313b63"/><rect x="361" y="149" width="3" height="8" fill="#313b63"/><rect x="368" y="149" width="20" height="3" fill="#313b63"/><rect x="361" y="160" width="60" height="5" fill="#2a1a45"/><rect x="417" y="155" width="4" height="10" fill="#2a1a45"/><rect x="426" y="145" width="14" height="20" fill="#25245c"/><rect x="426" y="145" width="8" height="4" fill="#313b63"/><rect x="426" y="149" width="3" height="8" fill="#313b63"/><rect x="426" y="160" width="14" height="5" fill="#2a1a45"/><rect x="436" y="155" width="4" height="10" fill="#2a1a45"/><rect x="445" y="145" width="14" height="20" fill="#25245c"/><rect x="445" y="145" width="7" height="4" fill="#313b63"/><rect x="445" y="149" width="3" height="8" fill="#313b63"/><rect x="445" y="160" width="14" height="5" fill="#2a1a45"/><rect x="455" y="155" width="4" height="10" fill="#2a1a45"/><rect x="464" y="145" width="24" height="20" fill="#25245c"/><rect x="464" y="145" width="15" height="4" fill="#313b63"/><rect x="464" y="149" width="3" height="8" fill="#313b63"/><rect x="472" y="149" width="8" height="3" fill="#313b63"/><rect x="464" y="160" width="24" height="5" fill="#2a1a45"/><rect x="484" y="155" width="4" height="10" fill="#2a1a45"/><rect x="493" y="145" width="52" height="20" fill="#25245c"/><rect x="493" y="145" width="38" height="4" fill="#313b63"/><rect x="493" y="149" width="3" height="8" fill="#313b63"/><rect x="493" y="160" width="52" height="5" fill="#2a1a45"/><rect x="541" y="155" width="4" height="10" fill="#2a1a45"/><rect x="550" y="145" width="24" height="20" fill="#25245c"/><rect x="550" y="145" width="17" height="4" fill="#313b63"/><rect x="550" y="149" width="3" height="8" fill="#313b63"/><rect x="554" y="149" width="8" height="3" fill="#313b63"/><rect x="550" y="160" width="24" height="5" fill="#2a1a45"/><rect x="570" y="155" width="4" height="10" fill="#2a1a45"/><rect x="579" y="145" width="72" height="20" fill="#25245c"/><rect x="579" y="145" width="54" height="4" fill="#313b63"/><rect x="579" y="149" width="3" height="8" fill="#313b63"/><rect x="579" y="160" width="72" height="5" fill="#2a1a45"/><rect x="647" y="155" width="4" height="10" fill="#2a1a45"/><rect x="656" y="145" width="44" height="20" fill="#25245c"/><rect x="656" y="145" width="30" height="4" fill="#313b63"/><rect x="656" y="149" width="3" height="8" fill="#313b63"/><rect x="656" y="160" width="44" height="5" fill="#2a1a45"/><rect x="696" y="155" width="4" height="10" fill="#2a1a45"/><rect x="705" y="145" width="30" height="20" fill="#25245c"/><rect x="705" y="145" width="22" height="4" fill="#313b63"/><rect x="705" y="149" width="3" height="8" fill="#313b63"/><rect x="710" y="149" width="10" height="3" fill="#313b63"/><rect x="705" y="160" width="30" height="5" fill="#2a1a45"/><rect x="731" y="155" width="4" height="10" fill="#2a1a45"/><rect x="740" y="145" width="72" height="20" fill="#25245c"/><rect x="740" y="145" width="58" height="4" fill="#313b63"/><rect x="740" y="149" width="3" height="8" fill="#313b63"/><rect x="740" y="160" width="72" height="5" fill="#2a1a45"/><rect x="808" y="155" width="4" height="10" fill="#2a1a45"/><rect x="817" y="145" width="14" height="20" fill="#25245c"/><rect x="817" y="145" width="6" height="4" fill="#313b63"/><rect x="817" y="149" width="3" height="8" fill="#313b63"/><rect x="817" y="160" width="14" height="5" fill="#2a1a45"/><rect x="827" y="155" width="4" height="10" fill="#2a1a45"/><rect x="836" y="145" width="14" height="20" fill="#25245c"/><rect x="836" y="145" width="6" height="4" fill="#313b63"/><rect x="836" y="149" width="3" height="8" fill="#313b63"/><rect x="836" y="160" width="14" height="5" fill="#2a1a45"/><rect x="846" y="155" width="4" height="10" fill="#2a1a45"/><rect x="855" y="145" width="18" height="20" fill="#25245c"/><rect x="855" y="145" width="14" height="4" fill="#313b63"/><rect x="855" y="149" width="3" height="8" fill="#313b63"/><rect x="855" y="160" width="18" height="5" fill="#2a1a45"/><rect x="869" y="155" width="4" height="10" fill="#2a1a45"/><rect x="-15" y="172" width="44" height="20" fill="#25245c"/><rect x="-15" y="172" width="26" height="4" fill="#313b63"/><rect x="-15" y="176" width="3" height="8" fill="#313b63"/><rect x="-4" y="176" width="14" height="3" fill="#313b63"/><rect x="-15" y="187" width="44" height="5" fill="#2a1a45"/><rect x="25" y="182" width="4" height="10" fill="#2a1a45"/><rect x="34" y="172" width="24" height="20" fill="#25245c"/><rect x="34" y="172" width="11" height="4" fill="#313b63"/><rect x="34" y="176" width="3" height="8" fill="#313b63"/><rect x="42" y="176" width="8" height="3" fill="#313b63"/><rect x="34" y="187" width="24" height="5" fill="#2a1a45"/><rect x="54" y="182" width="4" height="10" fill="#2a1a45"/><rect x="63" y="172" width="30" height="20" fill="#25245c"/><rect x="63" y="172" width="22" height="4" fill="#313b63"/><rect x="63" y="176" width="3" height="8" fill="#313b63"/><rect x="68" y="176" width="10" height="3" fill="#313b63"/><rect x="63" y="187" width="30" height="5" fill="#2a1a45"/><rect x="89" y="182" width="4" height="10" fill="#2a1a45"/><rect x="98" y="172" width="44" height="20" fill="#25245c"/><rect x="98" y="172" width="34" height="4" fill="#313b63"/><rect x="98" y="176" width="3" height="8" fill="#313b63"/><rect x="98" y="187" width="44" height="5" fill="#2a1a45"/><rect x="138" y="182" width="4" height="10" fill="#2a1a45"/><rect x="147" y="172" width="36" height="20" fill="#25245c"/><rect x="147" y="172" width="26" height="4" fill="#313b63"/><rect x="147" y="176" width="3" height="8" fill="#313b63"/><rect x="147" y="187" width="36" height="5" fill="#2a1a45"/><rect x="179" y="182" width="4" height="10" fill="#2a1a45"/><rect x="188" y="172" width="52" height="20" fill="#25245c"/><rect x="188" y="172" width="35" height="4" fill="#313b63"/><rect x="188" y="176" width="3" height="8" fill="#313b63"/><rect x="197" y="176" width="17" height="3" fill="#313b63"/><rect x="188" y="187" width="52" height="5" fill="#2a1a45"/><rect x="236" y="182" width="4" height="10" fill="#2a1a45"/><rect x="245" y="172" width="18" height="20" fill="#25245c"/><rect x="245" y="172" width="11" height="4" fill="#313b63"/><rect x="245" y="176" width="3" height="8" fill="#313b63"/><rect x="245" y="187" width="18" height="5" fill="#2a1a45"/><rect x="259" y="182" width="4" height="10" fill="#2a1a45"/><rect x="268" y="172" width="60" height="20" fill="#25245c"/><rect x="268" y="172" width="45" height="4" fill="#313b63"/><rect x="268" y="176" width="3" height="8" fill="#313b63"/><rect x="278" y="176" width="20" height="3" fill="#313b63"/><rect x="268" y="187" width="60" height="5" fill="#2a1a45"/><rect x="324" y="182" width="4" height="10" fill="#2a1a45"/><rect x="333" y="172" width="18" height="20" fill="#25245c"/><rect x="333" y="172" width="11" height="4" fill="#313b63"/><rect x="333" y="176" width="3" height="8" fill="#313b63"/><rect x="333" y="187" width="18" height="5" fill="#2a1a45"/><rect x="347" y="182" width="4" height="10" fill="#2a1a45"/><rect x="356" y="172" width="44" height="20" fill="#25245c"/><rect x="356" y="172" width="22" height="4" fill="#313b63"/><rect x="356" y="176" width="3" height="8" fill="#313b63"/><rect x="365" y="176" width="14" height="3" fill="#313b63"/><rect x="356" y="187" width="44" height="5" fill="#2a1a45"/><rect x="396" y="182" width="4" height="10" fill="#2a1a45"/><rect x="405" y="172" width="44" height="20" fill="#25245c"/><rect x="405" y="172" width="25" height="4" fill="#313b63"/><rect x="405" y="176" width="3" height="8" fill="#313b63"/><rect x="418" y="176" width="14" height="3" fill="#313b63"/><rect x="405" y="187" width="44" height="5" fill="#2a1a45"/><rect x="445" y="182" width="4" height="10" fill="#2a1a45"/><rect x="454" y="172" width="36" height="20" fill="#25245c"/><rect x="454" y="172" width="27" height="4" fill="#313b63"/><rect x="454" y="176" width="3" height="8" fill="#313b63"/><rect x="463" y="176" width="12" height="3" fill="#313b63"/><rect x="454" y="187" width="36" height="5" fill="#2a1a45"/><rect x="486" y="182" width="4" height="10" fill="#2a1a45"/><rect x="495" y="172" width="30" height="20" fill="#25245c"/><rect x="495" y="172" width="24" height="4" fill="#313b63"/><rect x="495" y="176" width="3" height="8" fill="#313b63"/><rect x="495" y="187" width="30" height="5" fill="#2a1a45"/><rect x="521" y="182" width="4" height="10" fill="#2a1a45"/><rect x="530" y="169" width="30" height="23" fill="#25245c"/><rect x="530" y="169" width="23" height="4" fill="#313b63"/><rect x="530" y="173" width="3" height="9" fill="#313b63"/><rect x="539" y="173" width="10" height="3" fill="#313b63"/><rect x="530" y="187" width="30" height="5" fill="#2a1a45"/><rect x="556" y="180" width="4" height="12" fill="#2a1a45"/><rect x="565" y="172" width="52" height="20" fill="#25245c"/><rect x="565" y="172" width="39" height="4" fill="#313b63"/><rect x="565" y="176" width="3" height="8" fill="#313b63"/><rect x="565" y="187" width="52" height="5" fill="#2a1a45"/><rect x="613" y="182" width="4" height="10" fill="#2a1a45"/><rect x="622" y="172" width="44" height="20" fill="#25245c"/><rect x="622" y="172" width="29" height="4" fill="#313b63"/><rect x="622" y="176" width="3" height="8" fill="#313b63"/><rect x="622" y="187" width="44" height="5" fill="#2a1a45"/><rect x="662" y="182" width="4" height="10" fill="#2a1a45"/><rect x="671" y="172" width="24" height="20" fill="#25245c"/><rect x="671" y="172" width="18" height="4" fill="#313b63"/><rect x="671" y="176" width="3" height="8" fill="#313b63"/><rect x="671" y="187" width="24" height="5" fill="#2a1a45"/><rect x="691" y="182" width="4" height="10" fill="#2a1a45"/><rect x="700" y="172" width="36" height="20" fill="#25245c"/><rect x="700" y="172" width="19" height="4" fill="#313b63"/><rect x="700" y="176" width="3" height="8" fill="#313b63"/><rect x="706" y="176" width="12" height="3" fill="#313b63"/><rect x="700" y="187" width="36" height="5" fill="#2a1a45"/><rect x="732" y="182" width="4" height="10" fill="#2a1a45"/><rect x="741" y="172" width="36" height="20" fill="#25245c"/><rect x="741" y="172" width="25" height="4" fill="#313b63"/><rect x="741" y="176" width="3" height="8" fill="#313b63"/><rect x="741" y="187" width="36" height="5" fill="#2a1a45"/><rect x="773" y="182" width="4" height="10" fill="#2a1a45"/><rect x="782" y="172" width="18" height="20" fill="#25245c"/><rect x="782" y="172" width="10" height="4" fill="#313b63"/><rect x="782" y="176" width="3" height="8" fill="#313b63"/><rect x="782" y="187" width="18" height="5" fill="#2a1a45"/><rect x="796" y="182" width="4" height="10" fill="#2a1a45"/><rect x="805" y="169" width="44" height="23" fill="#25245c"/><rect x="805" y="169" width="32" height="4" fill="#313b63"/><rect x="805" y="173" width="3" height="9" fill="#313b63"/><rect x="805" y="187" width="44" height="5" fill="#2a1a45"/><rect x="845" y="180" width="4" height="12" fill="#2a1a45"/><rect x="854" y="169" width="18" height="23" fill="#25245c"/><rect x="854" y="169" width="12" height="4" fill="#313b63"/><rect x="854" y="173" width="3" height="9" fill="#313b63"/><rect x="854" y="187" width="18" height="5" fill="#2a1a45"/><rect x="868" y="180" width="4" height="12" fill="#2a1a45"/><rect x="-52" y="199" width="52" height="20" fill="#25245c"/><rect x="-52" y="199" width="27" height="4" fill="#313b63"/><rect x="-52" y="203" width="3" height="8" fill="#313b63"/><rect x="-52" y="214" width="52" height="5" fill="#2a1a45"/><rect x="-4" y="209" width="4" height="10" fill="#2a1a45"/><rect x="5" y="199" width="72" height="20" fill="#25245c"/><rect x="5" y="199" width="45" height="4" fill="#313b63"/><rect x="5" y="203" width="3" height="8" fill="#313b63"/><rect x="19" y="203" width="24" height="3" fill="#313b63"/><rect x="5" y="214" width="72" height="5" fill="#2a1a45"/><rect x="73" y="209" width="4" height="10" fill="#2a1a45"/><rect x="82" y="199" width="24" height="20" fill="#25245c"/><rect x="82" y="199" width="15" height="4" fill="#313b63"/><rect x="82" y="203" width="3" height="8" fill="#313b63"/><rect x="82" y="214" width="24" height="5" fill="#2a1a45"/><rect x="102" y="209" width="4" height="10" fill="#2a1a45"/><rect x="111" y="199" width="14" height="20" fill="#25245c"/><rect x="111" y="199" width="10" height="4" fill="#313b63"/><rect x="111" y="203" width="3" height="8" fill="#313b63"/><rect x="111" y="214" width="14" height="5" fill="#2a1a45"/><rect x="121" y="209" width="4" height="10" fill="#2a1a45"/><rect x="130" y="199" width="14" height="20" fill="#25245c"/><rect x="130" y="199" width="10" height="4" fill="#313b63"/><rect x="130" y="203" width="3" height="8" fill="#313b63"/><rect x="130" y="214" width="14" height="5" fill="#2a1a45"/><rect x="140" y="209" width="4" height="10" fill="#2a1a45"/><rect x="149" y="199" width="72" height="20" fill="#25245c"/><rect x="149" y="199" width="47" height="4" fill="#313b63"/><rect x="149" y="203" width="3" height="8" fill="#313b63"/><rect x="149" y="214" width="72" height="5" fill="#2a1a45"/><rect x="217" y="209" width="4" height="10" fill="#2a1a45"/><rect x="226" y="199" width="18" height="20" fill="#25245c"/><rect x="226" y="199" width="11" height="4" fill="#313b63"/><rect x="226" y="203" width="3" height="8" fill="#313b63"/><rect x="226" y="214" width="18" height="5" fill="#2a1a45"/><rect x="240" y="209" width="4" height="10" fill="#2a1a45"/><rect x="249" y="199" width="24" height="20" fill="#25245c"/><rect x="249" y="199" width="14" height="4" fill="#313b63"/><rect x="249" y="203" width="3" height="8" fill="#313b63"/><rect x="254" y="203" width="8" height="3" fill="#313b63"/><rect x="249" y="214" width="24" height="5" fill="#2a1a45"/><rect x="269" y="209" width="4" height="10" fill="#2a1a45"/><rect x="278" y="199" width="52" height="20" fill="#25245c"/><rect x="278" y="199" width="29" height="4" fill="#313b63"/><rect x="278" y="203" width="3" height="8" fill="#313b63"/><rect x="278" y="214" width="52" height="5" fill="#2a1a45"/><rect x="326" y="209" width="4" height="10" fill="#2a1a45"/><rect x="335" y="199" width="14" height="20" fill="#25245c"/><rect x="335" y="199" width="10" height="4" fill="#313b63"/><rect x="335" y="203" width="3" height="8" fill="#313b63"/><rect x="335" y="214" width="14" height="5" fill="#2a1a45"/><rect x="345" y="209" width="4" height="10" fill="#2a1a45"/><rect x="354" y="199" width="24" height="20" fill="#25245c"/><rect x="354" y="199" width="12" height="4" fill="#313b63"/><rect x="354" y="203" width="3" height="8" fill="#313b63"/><rect x="361" y="203" width="8" height="3" fill="#313b63"/><rect x="354" y="214" width="24" height="5" fill="#2a1a45"/><rect x="374" y="209" width="4" height="10" fill="#2a1a45"/><rect x="383" y="199" width="14" height="20" fill="#25245c"/><rect x="383" y="199" width="11" height="4" fill="#313b63"/><rect x="383" y="203" width="3" height="8" fill="#313b63"/><rect x="383" y="214" width="14" height="5" fill="#2a1a45"/><rect x="393" y="209" width="4" height="10" fill="#2a1a45"/><rect x="402" y="199" width="18" height="20" fill="#25245c"/><rect x="402" y="199" width="10" height="4" fill="#313b63"/><rect x="402" y="203" width="3" height="8" fill="#313b63"/><rect x="402" y="214" width="18" height="5" fill="#2a1a45"/><rect x="416" y="209" width="4" height="10" fill="#2a1a45"/><rect x="425" y="199" width="60" height="20" fill="#25245c"/><rect x="425" y="199" width="32" height="4" fill="#313b63"/><rect x="425" y="203" width="3" height="8" fill="#313b63"/><rect x="437" y="203" width="20" height="3" fill="#313b63"/><rect x="425" y="214" width="60" height="5" fill="#2a1a45"/><rect x="481" y="209" width="4" height="10" fill="#2a1a45"/><rect x="490" y="199" width="52" height="20" fill="#25245c"/><rect x="490" y="199" width="39" height="4" fill="#313b63"/><rect x="490" y="203" width="3" height="8" fill="#313b63"/><rect x="502" y="203" width="17" height="3" fill="#313b63"/><rect x="490" y="214" width="52" height="5" fill="#2a1a45"/><rect x="538" y="209" width="4" height="10" fill="#2a1a45"/><rect x="547" y="199" width="72" height="20" fill="#25245c"/><rect x="547" y="199" width="39" height="4" fill="#313b63"/><rect x="547" y="203" width="3" height="8" fill="#313b63"/><rect x="547" y="214" width="72" height="5" fill="#2a1a45"/><rect x="615" y="209" width="4" height="10" fill="#2a1a45"/><rect x="624" y="199" width="44" height="20" fill="#25245c"/><rect x="624" y="199" width="33" height="4" fill="#313b63"/><rect x="624" y="203" width="3" height="8" fill="#313b63"/><rect x="631" y="203" width="14" height="3" fill="#313b63"/><rect x="624" y="214" width="44" height="5" fill="#2a1a45"/><rect x="664" y="209" width="4" height="10" fill="#2a1a45"/><rect x="673" y="196" width="52" height="23" fill="#25245c"/><rect x="673" y="196" width="43" height="4" fill="#313b63"/><rect x="673" y="200" width="3" height="9" fill="#313b63"/><rect x="673" y="214" width="52" height="5" fill="#2a1a45"/><rect x="721" y="207" width="4" height="12" fill="#2a1a45"/><rect x="730" y="199" width="52" height="20" fill="#25245c"/><rect x="730" y="199" width="39" height="4" fill="#313b63"/><rect x="730" y="203" width="3" height="8" fill="#313b63"/><rect x="730" y="214" width="52" height="5" fill="#2a1a45"/><rect x="778" y="209" width="4" height="10" fill="#2a1a45"/><rect x="787" y="199" width="14" height="20" fill="#25245c"/><rect x="787" y="199" width="7" height="4" fill="#313b63"/><rect x="787" y="203" width="3" height="8" fill="#313b63"/><rect x="787" y="214" width="14" height="5" fill="#2a1a45"/><rect x="797" y="209" width="4" height="10" fill="#2a1a45"/><rect x="806" y="199" width="60" height="20" fill="#25245c"/><rect x="806" y="199" width="37" height="4" fill="#313b63"/><rect x="806" y="203" width="3" height="8" fill="#313b63"/><rect x="823" y="203" width="20" height="3" fill="#313b63"/><rect x="806" y="214" width="60" height="5" fill="#2a1a45"/><rect x="862" y="209" width="4" height="10" fill="#2a1a45"/><rect x="871" y="199" width="24" height="20" fill="#25245c"/><rect x="871" y="199" width="18" height="4" fill="#313b63"/><rect x="871" y="203" width="3" height="8" fill="#313b63"/><rect x="879" y="203" width="8" height="3" fill="#313b63"/><rect x="871" y="214" width="24" height="5" fill="#2a1a45"/><rect x="891" y="209" width="4" height="10" fill="#2a1a45"/><rect x="-8" y="225" width="36" height="20" fill="#25245c"/><rect x="-8" y="225" width="16" height="4" fill="#313b63"/><rect x="-8" y="229" width="3" height="8" fill="#313b63"/><rect x="-8" y="240" width="36" height="5" fill="#2a1a45"/><rect x="24" y="235" width="4" height="10" fill="#2a1a45"/><rect x="33" y="222" width="24" height="23" fill="#25245c"/><rect x="33" y="222" width="18" height="4" fill="#313b63"/><rect x="33" y="226" width="3" height="9" fill="#313b63"/><rect x="33" y="240" width="24" height="5" fill="#2a1a45"/><rect x="53" y="233" width="4" height="12" fill="#2a1a45"/><rect x="62" y="222" width="24" height="23" fill="#25245c"/><rect x="62" y="222" width="13" height="4" fill="#313b63"/><rect x="62" y="226" width="3" height="9" fill="#313b63"/><rect x="62" y="240" width="24" height="5" fill="#2a1a45"/><rect x="82" y="233" width="4" height="12" fill="#2a1a45"/><rect x="91" y="225" width="18" height="20" fill="#25245c"/><rect x="91" y="225" width="13" height="4" fill="#313b63"/><rect x="91" y="229" width="3" height="8" fill="#313b63"/><rect x="91" y="240" width="18" height="5" fill="#2a1a45"/><rect x="105" y="235" width="4" height="10" fill="#2a1a45"/><rect x="114" y="225" width="72" height="20" fill="#25245c"/><rect x="114" y="225" width="41" height="4" fill="#313b63"/><rect x="114" y="229" width="3" height="8" fill="#313b63"/><rect x="114" y="240" width="72" height="5" fill="#2a1a45"/><rect x="182" y="235" width="4" height="10" fill="#2a1a45"/><rect x="191" y="225" width="52" height="20" fill="#25245c"/><rect x="191" y="225" width="37" height="4" fill="#313b63"/><rect x="191" y="229" width="3" height="8" fill="#313b63"/><rect x="191" y="240" width="52" height="5" fill="#2a1a45"/><rect x="239" y="235" width="4" height="10" fill="#2a1a45"/><rect x="248" y="225" width="60" height="20" fill="#25245c"/><rect x="248" y="225" width="40" height="4" fill="#313b63"/><rect x="248" y="229" width="3" height="8" fill="#313b63"/><rect x="248" y="240" width="60" height="5" fill="#2a1a45"/><rect x="304" y="235" width="4" height="10" fill="#2a1a45"/><rect x="313" y="225" width="24" height="20" fill="#25245c"/><rect x="313" y="225" width="20" height="4" fill="#313b63"/><rect x="313" y="229" width="3" height="8" fill="#313b63"/><rect x="320" y="229" width="8" height="3" fill="#313b63"/><rect x="313" y="240" width="24" height="5" fill="#2a1a45"/><rect x="333" y="235" width="4" height="10" fill="#2a1a45"/><rect x="342" y="225" width="18" height="20" fill="#25245c"/><rect x="342" y="225" width="15" height="4" fill="#313b63"/><rect x="342" y="229" width="3" height="8" fill="#313b63"/><rect x="342" y="240" width="18" height="5" fill="#2a1a45"/><rect x="356" y="235" width="4" height="10" fill="#2a1a45"/><rect x="365" y="225" width="18" height="20" fill="#25245c"/><rect x="365" y="225" width="13" height="4" fill="#313b63"/><rect x="365" y="229" width="3" height="8" fill="#313b63"/><rect x="365" y="240" width="18" height="5" fill="#2a1a45"/><rect x="379" y="235" width="4" height="10" fill="#2a1a45"/><rect x="388" y="225" width="52" height="20" fill="#25245c"/><rect x="388" y="225" width="38" height="4" fill="#313b63"/><rect x="388" y="229" width="3" height="8" fill="#313b63"/><rect x="388" y="240" width="52" height="5" fill="#2a1a45"/><rect x="436" y="235" width="4" height="10" fill="#2a1a45"/><rect x="445" y="225" width="18" height="20" fill="#25245c"/><rect x="445" y="225" width="8" height="4" fill="#313b63"/><rect x="445" y="229" width="3" height="8" fill="#313b63"/><rect x="445" y="240" width="18" height="5" fill="#2a1a45"/><rect x="459" y="235" width="4" height="10" fill="#2a1a45"/><rect x="468" y="225" width="60" height="20" fill="#25245c"/><rect x="468" y="225" width="40" height="4" fill="#313b63"/><rect x="468" y="229" width="3" height="8" fill="#313b63"/><rect x="472" y="229" width="20" height="3" fill="#313b63"/><rect x="468" y="240" width="60" height="5" fill="#2a1a45"/><rect x="524" y="235" width="4" height="10" fill="#2a1a45"/><rect x="533" y="225" width="30" height="20" fill="#25245c"/><rect x="533" y="225" width="15" height="4" fill="#313b63"/><rect x="533" y="229" width="3" height="8" fill="#313b63"/><rect x="533" y="240" width="30" height="5" fill="#2a1a45"/><rect x="559" y="235" width="4" height="10" fill="#2a1a45"/><rect x="568" y="225" width="72" height="20" fill="#25245c"/><rect x="568" y="225" width="59" height="4" fill="#313b63"/><rect x="568" y="229" width="3" height="8" fill="#313b63"/><rect x="568" y="240" width="72" height="5" fill="#2a1a45"/><rect x="636" y="235" width="4" height="10" fill="#2a1a45"/><rect x="645" y="225" width="72" height="20" fill="#25245c"/><rect x="645" y="225" width="39" height="4" fill="#313b63"/><rect x="645" y="229" width="3" height="8" fill="#313b63"/><rect x="652" y="229" width="24" height="3" fill="#313b63"/><rect x="645" y="240" width="72" height="5" fill="#2a1a45"/><rect x="713" y="235" width="4" height="10" fill="#2a1a45"/><rect x="722" y="225" width="44" height="20" fill="#25245c"/><rect x="722" y="225" width="24" height="4" fill="#313b63"/><rect x="722" y="229" width="3" height="8" fill="#313b63"/><rect x="736" y="229" width="14" height="3" fill="#313b63"/><rect x="722" y="240" width="44" height="5" fill="#2a1a45"/><rect x="762" y="235" width="4" height="10" fill="#2a1a45"/><rect x="771" y="225" width="44" height="20" fill="#25245c"/><rect x="771" y="225" width="26" height="4" fill="#313b63"/><rect x="771" y="229" width="3" height="8" fill="#313b63"/><rect x="784" y="229" width="14" height="3" fill="#313b63"/><rect x="771" y="240" width="44" height="5" fill="#2a1a45"/><rect x="811" y="235" width="4" height="10" fill="#2a1a45"/><rect x="820" y="225" width="18" height="20" fill="#25245c"/><rect x="820" y="225" width="12" height="4" fill="#313b63"/><rect x="820" y="229" width="3" height="8" fill="#313b63"/><rect x="820" y="240" width="18" height="5" fill="#2a1a45"/><rect x="834" y="235" width="4" height="10" fill="#2a1a45"/><rect x="843" y="225" width="30" height="20" fill="#25245c"/><rect x="843" y="225" width="23" height="4" fill="#313b63"/><rect x="843" y="229" width="3" height="8" fill="#313b63"/><rect x="843" y="240" width="30" height="5" fill="#2a1a45"/><rect x="869" y="235" width="4" height="10" fill="#2a1a45"/><rect x="-5" y="252" width="18" height="20" fill="#25245c"/><rect x="-5" y="252" width="9" height="4" fill="#313b63"/><rect x="-5" y="256" width="3" height="8" fill="#313b63"/><rect x="-5" y="267" width="18" height="5" fill="#2a1a45"/><rect x="9" y="262" width="4" height="10" fill="#2a1a45"/><rect x="18" y="252" width="52" height="20" fill="#25245c"/><rect x="18" y="252" width="30" height="4" fill="#313b63"/><rect x="18" y="256" width="3" height="8" fill="#313b63"/><rect x="18" y="267" width="52" height="5" fill="#2a1a45"/><rect x="66" y="262" width="4" height="10" fill="#2a1a45"/><rect x="75" y="252" width="72" height="20" fill="#25245c"/><rect x="75" y="252" width="38" height="4" fill="#313b63"/><rect x="75" y="256" width="3" height="8" fill="#313b63"/><rect x="91" y="256" width="24" height="3" fill="#313b63"/><rect x="75" y="267" width="72" height="5" fill="#2a1a45"/><rect x="143" y="262" width="4" height="10" fill="#2a1a45"/><rect x="152" y="252" width="60" height="20" fill="#25245c"/><rect x="152" y="252" width="36" height="4" fill="#313b63"/><rect x="152" y="256" width="3" height="8" fill="#313b63"/><rect x="168" y="256" width="20" height="3" fill="#313b63"/><rect x="152" y="267" width="60" height="5" fill="#2a1a45"/><rect x="208" y="262" width="4" height="10" fill="#2a1a45"/><rect x="217" y="252" width="44" height="20" fill="#25245c"/><rect x="217" y="252" width="33" height="4" fill="#313b63"/><rect x="217" y="256" width="3" height="8" fill="#313b63"/><rect x="217" y="267" width="44" height="5" fill="#2a1a45"/><rect x="257" y="262" width="4" height="10" fill="#2a1a45"/><rect x="266" y="249" width="72" height="23" fill="#25245c"/><rect x="266" y="249" width="41" height="4" fill="#313b63"/><rect x="266" y="253" width="3" height="9" fill="#313b63"/><rect x="290" y="253" width="24" height="3" fill="#313b63"/><rect x="266" y="267" width="72" height="5" fill="#2a1a45"/><rect x="334" y="260" width="4" height="12" fill="#2a1a45"/><rect x="343" y="249" width="60" height="23" fill="#25245c"/><rect x="343" y="249" width="36" height="4" fill="#313b63"/><rect x="343" y="253" width="3" height="9" fill="#313b63"/><rect x="343" y="267" width="60" height="5" fill="#2a1a45"/><rect x="399" y="260" width="4" height="12" fill="#2a1a45"/><rect x="408" y="252" width="36" height="20" fill="#25245c"/><rect x="408" y="252" width="25" height="4" fill="#313b63"/><rect x="408" y="256" width="3" height="8" fill="#313b63"/><rect x="420" y="256" width="12" height="3" fill="#313b63"/><rect x="408" y="267" width="36" height="5" fill="#2a1a45"/><rect x="440" y="262" width="4" height="10" fill="#2a1a45"/><rect x="449" y="252" width="36" height="20" fill="#25245c"/><rect x="449" y="252" width="21" height="4" fill="#313b63"/><rect x="449" y="256" width="3" height="8" fill="#313b63"/><rect x="449" y="267" width="36" height="5" fill="#2a1a45"/><rect x="481" y="262" width="4" height="10" fill="#2a1a45"/><rect x="490" y="252" width="24" height="20" fill="#25245c"/><rect x="490" y="252" width="12" height="4" fill="#313b63"/><rect x="490" y="256" width="3" height="8" fill="#313b63"/><rect x="490" y="267" width="24" height="5" fill="#2a1a45"/><rect x="510" y="262" width="4" height="10" fill="#2a1a45"/><rect x="519" y="252" width="30" height="20" fill="#25245c"/><rect x="519" y="252" width="13" height="4" fill="#313b63"/><rect x="519" y="256" width="3" height="8" fill="#313b63"/><rect x="519" y="267" width="30" height="5" fill="#2a1a45"/><rect x="545" y="262" width="4" height="10" fill="#2a1a45"/><rect x="554" y="252" width="18" height="20" fill="#25245c"/><rect x="554" y="252" width="11" height="4" fill="#313b63"/><rect x="554" y="256" width="3" height="8" fill="#313b63"/><rect x="554" y="267" width="18" height="5" fill="#2a1a45"/><rect x="568" y="262" width="4" height="10" fill="#2a1a45"/><rect x="577" y="252" width="44" height="20" fill="#25245c"/><rect x="577" y="252" width="36" height="4" fill="#313b63"/><rect x="577" y="256" width="3" height="8" fill="#313b63"/><rect x="588" y="256" width="14" height="3" fill="#313b63"/><rect x="577" y="267" width="44" height="5" fill="#2a1a45"/><rect x="617" y="262" width="4" height="10" fill="#2a1a45"/><rect x="626" y="252" width="18" height="20" fill="#25245c"/><rect x="626" y="252" width="13" height="4" fill="#313b63"/><rect x="626" y="256" width="3" height="8" fill="#313b63"/><rect x="626" y="267" width="18" height="5" fill="#2a1a45"/><rect x="640" y="262" width="4" height="10" fill="#2a1a45"/><rect x="649" y="252" width="72" height="20" fill="#25245c"/><rect x="649" y="252" width="34" height="4" fill="#313b63"/><rect x="649" y="256" width="3" height="8" fill="#313b63"/><rect x="649" y="267" width="72" height="5" fill="#2a1a45"/><rect x="717" y="262" width="4" height="10" fill="#2a1a45"/><rect x="726" y="252" width="24" height="20" fill="#25245c"/><rect x="726" y="252" width="20" height="4" fill="#313b63"/><rect x="726" y="256" width="3" height="8" fill="#313b63"/><rect x="726" y="267" width="24" height="5" fill="#2a1a45"/><rect x="746" y="262" width="4" height="10" fill="#2a1a45"/><rect x="755" y="252" width="24" height="20" fill="#25245c"/><rect x="755" y="252" width="18" height="4" fill="#313b63"/><rect x="755" y="256" width="3" height="8" fill="#313b63"/><rect x="761" y="256" width="8" height="3" fill="#313b63"/><rect x="755" y="267" width="24" height="5" fill="#2a1a45"/><rect x="775" y="262" width="4" height="10" fill="#2a1a45"/><rect x="784" y="252" width="30" height="20" fill="#25245c"/><rect x="784" y="252" width="17" height="4" fill="#313b63"/><rect x="784" y="256" width="3" height="8" fill="#313b63"/><rect x="792" y="256" width="10" height="3" fill="#313b63"/><rect x="784" y="267" width="30" height="5" fill="#2a1a45"/><rect x="810" y="262" width="4" height="10" fill="#2a1a45"/><rect x="819" y="252" width="72" height="20" fill="#25245c"/><rect x="819" y="252" width="45" height="4" fill="#313b63"/><rect x="819" y="256" width="3" height="8" fill="#313b63"/><rect x="827" y="256" width="24" height="3" fill="#313b63"/><rect x="819" y="267" width="72" height="5" fill="#2a1a45"/><rect x="887" y="262" width="4" height="10" fill="#2a1a45"/><rect x="-19" y="279" width="52" height="20" fill="#25245c"/><rect x="-19" y="279" width="36" height="4" fill="#313b63"/><rect x="-19" y="283" width="3" height="8" fill="#313b63"/><rect x="-19" y="294" width="52" height="5" fill="#2a1a45"/><rect x="29" y="289" width="4" height="10" fill="#2a1a45"/><rect x="38" y="279" width="24" height="20" fill="#25245c"/><rect x="38" y="279" width="15" height="4" fill="#313b63"/><rect x="38" y="283" width="3" height="8" fill="#313b63"/><rect x="45" y="283" width="8" height="3" fill="#313b63"/><rect x="38" y="294" width="24" height="5" fill="#2a1a45"/><rect x="58" y="289" width="4" height="10" fill="#2a1a45"/><rect x="67" y="279" width="18" height="20" fill="#25245c"/><rect x="67" y="279" width="9" height="4" fill="#313b63"/><rect x="67" y="283" width="3" height="8" fill="#313b63"/><rect x="67" y="294" width="18" height="5" fill="#2a1a45"/><rect x="81" y="289" width="4" height="10" fill="#2a1a45"/><rect x="90" y="279" width="36" height="20" fill="#25245c"/><rect x="90" y="279" width="29" height="4" fill="#313b63"/><rect x="90" y="283" width="3" height="8" fill="#313b63"/><rect x="94" y="283" width="12" height="3" fill="#313b63"/><rect x="90" y="294" width="36" height="5" fill="#2a1a45"/><rect x="122" y="289" width="4" height="10" fill="#2a1a45"/><rect x="131" y="279" width="24" height="20" fill="#25245c"/><rect x="131" y="279" width="15" height="4" fill="#313b63"/><rect x="131" y="283" width="3" height="8" fill="#313b63"/><rect x="137" y="283" width="8" height="3" fill="#313b63"/><rect x="131" y="294" width="24" height="5" fill="#2a1a45"/><rect x="151" y="289" width="4" height="10" fill="#2a1a45"/><rect x="160" y="279" width="52" height="20" fill="#25245c"/><rect x="160" y="279" width="42" height="4" fill="#313b63"/><rect x="160" y="283" width="3" height="8" fill="#313b63"/><rect x="160" y="294" width="52" height="5" fill="#2a1a45"/><rect x="208" y="289" width="4" height="10" fill="#2a1a45"/><rect x="217" y="279" width="52" height="20" fill="#25245c"/><rect x="217" y="279" width="33" height="4" fill="#313b63"/><rect x="217" y="283" width="3" height="8" fill="#313b63"/><rect x="217" y="294" width="52" height="5" fill="#2a1a45"/><rect x="265" y="289" width="4" height="10" fill="#2a1a45"/><rect x="274" y="279" width="52" height="20" fill="#25245c"/><rect x="274" y="279" width="25" height="4" fill="#313b63"/><rect x="274" y="283" width="3" height="8" fill="#313b63"/><rect x="286" y="283" width="17" height="3" fill="#313b63"/><rect x="274" y="294" width="52" height="5" fill="#2a1a45"/><rect x="322" y="289" width="4" height="10" fill="#2a1a45"/><rect x="331" y="279" width="44" height="20" fill="#25245c"/><rect x="331" y="279" width="27" height="4" fill="#313b63"/><rect x="331" y="283" width="3" height="8" fill="#313b63"/><rect x="331" y="294" width="44" height="5" fill="#2a1a45"/><rect x="371" y="289" width="4" height="10" fill="#2a1a45"/><rect x="380" y="279" width="44" height="20" fill="#25245c"/><rect x="380" y="279" width="25" height="4" fill="#313b63"/><rect x="380" y="283" width="3" height="8" fill="#313b63"/><rect x="380" y="294" width="44" height="5" fill="#2a1a45"/><rect x="420" y="289" width="4" height="10" fill="#2a1a45"/><rect x="429" y="279" width="52" height="20" fill="#25245c"/><rect x="429" y="279" width="35" height="4" fill="#313b63"/><rect x="429" y="283" width="3" height="8" fill="#313b63"/><rect x="429" y="294" width="52" height="5" fill="#2a1a45"/><rect x="477" y="289" width="4" height="10" fill="#2a1a45"/><rect x="486" y="279" width="36" height="20" fill="#25245c"/><rect x="486" y="279" width="28" height="4" fill="#313b63"/><rect x="486" y="283" width="3" height="8" fill="#313b63"/><rect x="497" y="283" width="12" height="3" fill="#313b63"/><rect x="486" y="294" width="36" height="5" fill="#2a1a45"/><rect x="518" y="289" width="4" height="10" fill="#2a1a45"/><rect x="527" y="279" width="30" height="20" fill="#25245c"/><rect x="527" y="279" width="18" height="4" fill="#313b63"/><rect x="527" y="283" width="3" height="8" fill="#313b63"/><rect x="536" y="283" width="10" height="3" fill="#313b63"/><rect x="527" y="294" width="30" height="5" fill="#2a1a45"/><rect x="553" y="289" width="4" height="10" fill="#2a1a45"/><rect x="562" y="279" width="18" height="20" fill="#25245c"/><rect x="562" y="279" width="9" height="4" fill="#313b63"/><rect x="562" y="283" width="3" height="8" fill="#313b63"/><rect x="562" y="294" width="18" height="5" fill="#2a1a45"/><rect x="576" y="289" width="4" height="10" fill="#2a1a45"/><rect x="585" y="279" width="52" height="20" fill="#25245c"/><rect x="585" y="279" width="41" height="4" fill="#313b63"/><rect x="585" y="283" width="3" height="8" fill="#313b63"/><rect x="585" y="294" width="52" height="5" fill="#2a1a45"/><rect x="633" y="289" width="4" height="10" fill="#2a1a45"/><rect x="642" y="279" width="44" height="20" fill="#25245c"/><rect x="642" y="279" width="27" height="4" fill="#313b63"/><rect x="642" y="283" width="3" height="8" fill="#313b63"/><rect x="642" y="294" width="44" height="5" fill="#2a1a45"/><rect x="682" y="289" width="4" height="10" fill="#2a1a45"/><rect x="691" y="279" width="30" height="20" fill="#25245c"/><rect x="691" y="279" width="18" height="4" fill="#313b63"/><rect x="691" y="283" width="3" height="8" fill="#313b63"/><rect x="695" y="283" width="10" height="3" fill="#313b63"/><rect x="691" y="294" width="30" height="5" fill="#2a1a45"/><rect x="717" y="289" width="4" height="10" fill="#2a1a45"/><rect x="726" y="279" width="18" height="20" fill="#25245c"/><rect x="726" y="279" width="9" height="4" fill="#313b63"/><rect x="726" y="283" width="3" height="8" fill="#313b63"/><rect x="726" y="294" width="18" height="5" fill="#2a1a45"/><rect x="740" y="289" width="4" height="10" fill="#2a1a45"/><rect x="749" y="276" width="60" height="23" fill="#25245c"/><rect x="749" y="276" width="32" height="4" fill="#313b63"/><rect x="749" y="280" width="3" height="9" fill="#313b63"/><rect x="763" y="280" width="20" height="3" fill="#313b63"/><rect x="749" y="294" width="60" height="5" fill="#2a1a45"/><rect x="805" y="287" width="4" height="12" fill="#2a1a45"/><rect x="814" y="276" width="24" height="23" fill="#25245c"/><rect x="814" y="276" width="19" height="4" fill="#313b63"/><rect x="814" y="280" width="3" height="9" fill="#313b63"/><rect x="814" y="294" width="24" height="5" fill="#2a1a45"/><rect x="834" y="287" width="4" height="12" fill="#2a1a45"/><rect x="843" y="279" width="52" height="20" fill="#25245c"/><rect x="843" y="279" width="37" height="4" fill="#313b63"/><rect x="843" y="283" width="3" height="8" fill="#313b63"/><rect x="851" y="283" width="17" height="3" fill="#313b63"/><rect x="843" y="294" width="52" height="5" fill="#2a1a45"/><rect x="891" y="289" width="4" height="10" fill="#2a1a45"/><rect x="-1" y="305" width="60" height="20" fill="#25245c"/><rect x="-1" y="305" width="34" height="4" fill="#313b63"/><rect x="-1" y="309" width="3" height="8" fill="#313b63"/><rect x="18" y="309" width="20" height="3" fill="#313b63"/><rect x="-1" y="320" width="60" height="5" fill="#2a1a45"/><rect x="55" y="315" width="4" height="10" fill="#2a1a45"/><rect x="64" y="305" width="30" height="20" fill="#25245c"/><rect x="64" y="305" width="23" height="4" fill="#313b63"/><rect x="64" y="309" width="3" height="8" fill="#313b63"/><rect x="64" y="320" width="30" height="5" fill="#2a1a45"/><rect x="90" y="315" width="4" height="10" fill="#2a1a45"/><rect x="99" y="305" width="14" height="20" fill="#25245c"/><rect x="99" y="305" width="10" height="4" fill="#313b63"/><rect x="99" y="309" width="3" height="8" fill="#313b63"/><rect x="99" y="320" width="14" height="5" fill="#2a1a45"/><rect x="109" y="315" width="4" height="10" fill="#2a1a45"/><rect x="118" y="302" width="60" height="23" fill="#25245c"/><rect x="118" y="302" width="42" height="4" fill="#313b63"/><rect x="118" y="306" width="3" height="9" fill="#313b63"/><rect x="118" y="320" width="60" height="5" fill="#2a1a45"/><rect x="174" y="313" width="4" height="12" fill="#2a1a45"/><rect x="183" y="305" width="72" height="20" fill="#25245c"/><rect x="183" y="305" width="50" height="4" fill="#313b63"/><rect x="183" y="309" width="3" height="8" fill="#313b63"/><rect x="188" y="309" width="24" height="3" fill="#313b63"/><rect x="183" y="320" width="72" height="5" fill="#2a1a45"/><rect x="251" y="315" width="4" height="10" fill="#2a1a45"/><rect x="260" y="305" width="18" height="20" fill="#25245c"/><rect x="260" y="305" width="13" height="4" fill="#313b63"/><rect x="260" y="309" width="3" height="8" fill="#313b63"/><rect x="260" y="320" width="18" height="5" fill="#2a1a45"/><rect x="274" y="315" width="4" height="10" fill="#2a1a45"/><rect x="283" y="305" width="36" height="20" fill="#25245c"/><rect x="283" y="305" width="26" height="4" fill="#313b63"/><rect x="283" y="309" width="3" height="8" fill="#313b63"/><rect x="294" y="309" width="12" height="3" fill="#313b63"/><rect x="283" y="320" width="36" height="5" fill="#2a1a45"/><rect x="315" y="315" width="4" height="10" fill="#2a1a45"/><rect x="324" y="302" width="52" height="23" fill="#25245c"/><rect x="324" y="302" width="28" height="4" fill="#313b63"/><rect x="324" y="306" width="3" height="9" fill="#313b63"/><rect x="339" y="306" width="17" height="3" fill="#313b63"/><rect x="324" y="320" width="52" height="5" fill="#2a1a45"/><rect x="372" y="313" width="4" height="12" fill="#2a1a45"/><rect x="381" y="305" width="30" height="20" fill="#25245c"/><rect x="381" y="305" width="22" height="4" fill="#313b63"/><rect x="381" y="309" width="3" height="8" fill="#313b63"/><rect x="381" y="320" width="30" height="5" fill="#2a1a45"/><rect x="407" y="315" width="4" height="10" fill="#2a1a45"/><rect x="416" y="305" width="36" height="20" fill="#25245c"/><rect x="416" y="305" width="21" height="4" fill="#313b63"/><rect x="416" y="309" width="3" height="8" fill="#313b63"/><rect x="416" y="320" width="36" height="5" fill="#2a1a45"/><rect x="448" y="315" width="4" height="10" fill="#2a1a45"/><rect x="457" y="305" width="18" height="20" fill="#25245c"/><rect x="457" y="305" width="9" height="4" fill="#313b63"/><rect x="457" y="309" width="3" height="8" fill="#313b63"/><rect x="457" y="320" width="18" height="5" fill="#2a1a45"/><rect x="471" y="315" width="4" height="10" fill="#2a1a45"/><rect x="480" y="305" width="24" height="20" fill="#25245c"/><rect x="480" y="305" width="13" height="4" fill="#313b63"/><rect x="480" y="309" width="3" height="8" fill="#313b63"/><rect x="480" y="320" width="24" height="5" fill="#2a1a45"/><rect x="500" y="315" width="4" height="10" fill="#2a1a45"/><rect x="509" y="305" width="18" height="20" fill="#25245c"/><rect x="509" y="305" width="8" height="4" fill="#313b63"/><rect x="509" y="309" width="3" height="8" fill="#313b63"/><rect x="509" y="320" width="18" height="5" fill="#2a1a45"/><rect x="523" y="315" width="4" height="10" fill="#2a1a45"/><rect x="532" y="305" width="18" height="20" fill="#25245c"/><rect x="532" y="305" width="8" height="4" fill="#313b63"/><rect x="532" y="309" width="3" height="8" fill="#313b63"/><rect x="532" y="320" width="18" height="5" fill="#2a1a45"/><rect x="546" y="315" width="4" height="10" fill="#2a1a45"/><rect x="555" y="305" width="36" height="20" fill="#25245c"/><rect x="555" y="305" width="22" height="4" fill="#313b63"/><rect x="555" y="309" width="3" height="8" fill="#313b63"/><rect x="555" y="320" width="36" height="5" fill="#2a1a45"/><rect x="587" y="315" width="4" height="10" fill="#2a1a45"/><rect x="596" y="305" width="24" height="20" fill="#25245c"/><rect x="596" y="305" width="18" height="4" fill="#313b63"/><rect x="596" y="309" width="3" height="8" fill="#313b63"/><rect x="602" y="309" width="8" height="3" fill="#313b63"/><rect x="596" y="320" width="24" height="5" fill="#2a1a45"/><rect x="616" y="315" width="4" height="10" fill="#2a1a45"/><rect x="625" y="302" width="72" height="23" fill="#25245c"/><rect x="625" y="302" width="55" height="4" fill="#313b63"/><rect x="625" y="306" width="3" height="9" fill="#313b63"/><rect x="630" y="306" width="24" height="3" fill="#313b63"/><rect x="625" y="320" width="72" height="5" fill="#2a1a45"/><rect x="693" y="313" width="4" height="12" fill="#2a1a45"/><rect x="702" y="305" width="60" height="20" fill="#25245c"/><rect x="702" y="305" width="41" height="4" fill="#313b63"/><rect x="702" y="309" width="3" height="8" fill="#313b63"/><rect x="721" y="309" width="20" height="3" fill="#313b63"/><rect x="702" y="320" width="60" height="5" fill="#2a1a45"/><rect x="758" y="315" width="4" height="10" fill="#2a1a45"/><rect x="767" y="305" width="14" height="20" fill="#25245c"/><rect x="767" y="305" width="9" height="4" fill="#313b63"/><rect x="767" y="309" width="3" height="8" fill="#313b63"/><rect x="767" y="320" width="14" height="5" fill="#2a1a45"/><rect x="777" y="315" width="4" height="10" fill="#2a1a45"/><rect x="786" y="305" width="44" height="20" fill="#25245c"/><rect x="786" y="305" width="28" height="4" fill="#313b63"/><rect x="786" y="309" width="3" height="8" fill="#313b63"/><rect x="794" y="309" width="14" height="3" fill="#313b63"/><rect x="786" y="320" width="44" height="5" fill="#2a1a45"/><rect x="826" y="315" width="4" height="10" fill="#2a1a45"/><rect x="835" y="305" width="72" height="20" fill="#25245c"/><rect x="835" y="305" width="50" height="4" fill="#313b63"/><rect x="835" y="309" width="3" height="8" fill="#313b63"/><rect x="835" y="320" width="72" height="5" fill="#2a1a45"/><rect x="903" y="315" width="4" height="10" fill="#2a1a45"/><rect x="-47" y="332" width="72" height="20" fill="#25245c"/><rect x="-47" y="332" width="54" height="4" fill="#313b63"/><rect x="-47" y="336" width="3" height="8" fill="#313b63"/><rect x="-24" y="336" width="24" height="3" fill="#313b63"/><rect x="-47" y="347" width="72" height="5" fill="#2a1a45"/><rect x="21" y="342" width="4" height="10" fill="#2a1a45"/><rect x="30" y="332" width="52" height="20" fill="#25245c"/><rect x="30" y="332" width="32" height="4" fill="#313b63"/><rect x="30" y="336" width="3" height="8" fill="#313b63"/><rect x="30" y="347" width="52" height="5" fill="#2a1a45"/><rect x="78" y="342" width="4" height="10" fill="#2a1a45"/><rect x="87" y="332" width="30" height="20" fill="#25245c"/><rect x="87" y="332" width="20" height="4" fill="#313b63"/><rect x="87" y="336" width="3" height="8" fill="#313b63"/><rect x="87" y="347" width="30" height="5" fill="#2a1a45"/><rect x="113" y="342" width="4" height="10" fill="#2a1a45"/><rect x="122" y="332" width="60" height="20" fill="#25245c"/><rect x="122" y="332" width="31" height="4" fill="#313b63"/><rect x="122" y="336" width="3" height="8" fill="#313b63"/><rect x="122" y="347" width="60" height="5" fill="#2a1a45"/><rect x="178" y="342" width="4" height="10" fill="#2a1a45"/><rect x="187" y="332" width="14" height="20" fill="#25245c"/><rect x="187" y="332" width="11" height="4" fill="#313b63"/><rect x="187" y="336" width="3" height="8" fill="#313b63"/><rect x="187" y="347" width="14" height="5" fill="#2a1a45"/><rect x="197" y="342" width="4" height="10" fill="#2a1a45"/><rect x="206" y="332" width="24" height="20" fill="#25245c"/><rect x="206" y="332" width="16" height="4" fill="#313b63"/><rect x="206" y="336" width="3" height="8" fill="#313b63"/><rect x="206" y="347" width="24" height="5" fill="#2a1a45"/><rect x="226" y="342" width="4" height="10" fill="#2a1a45"/><rect x="235" y="332" width="72" height="20" fill="#25245c"/><rect x="235" y="332" width="39" height="4" fill="#313b63"/><rect x="235" y="336" width="3" height="8" fill="#313b63"/><rect x="235" y="347" width="72" height="5" fill="#2a1a45"/><rect x="303" y="342" width="4" height="10" fill="#2a1a45"/><rect x="312" y="329" width="18" height="23" fill="#25245c"/><rect x="312" y="329" width="9" height="4" fill="#313b63"/><rect x="312" y="333" width="3" height="9" fill="#313b63"/><rect x="312" y="347" width="18" height="5" fill="#2a1a45"/><rect x="326" y="340" width="4" height="12" fill="#2a1a45"/><rect x="335" y="332" width="30" height="20" fill="#25245c"/><rect x="335" y="332" width="14" height="4" fill="#313b63"/><rect x="335" y="336" width="3" height="8" fill="#313b63"/><rect x="344" y="336" width="10" height="3" fill="#313b63"/><rect x="335" y="347" width="30" height="5" fill="#2a1a45"/><rect x="361" y="342" width="4" height="10" fill="#2a1a45"/><rect x="370" y="332" width="44" height="20" fill="#25245c"/><rect x="370" y="332" width="32" height="4" fill="#313b63"/><rect x="370" y="336" width="3" height="8" fill="#313b63"/><rect x="370" y="347" width="44" height="5" fill="#2a1a45"/><rect x="410" y="342" width="4" height="10" fill="#2a1a45"/><rect x="419" y="329" width="60" height="23" fill="#25245c"/><rect x="419" y="329" width="46" height="4" fill="#313b63"/><rect x="419" y="333" width="3" height="9" fill="#313b63"/><rect x="431" y="333" width="20" height="3" fill="#313b63"/><rect x="419" y="347" width="60" height="5" fill="#2a1a45"/><rect x="475" y="340" width="4" height="12" fill="#2a1a45"/><rect x="484" y="332" width="30" height="20" fill="#25245c"/><rect x="484" y="332" width="21" height="4" fill="#313b63"/><rect x="484" y="336" width="3" height="8" fill="#313b63"/><rect x="484" y="347" width="30" height="5" fill="#2a1a45"/><rect x="510" y="342" width="4" height="10" fill="#2a1a45"/><rect x="519" y="329" width="60" height="23" fill="#25245c"/><rect x="519" y="329" width="36" height="4" fill="#313b63"/><rect x="519" y="333" width="3" height="9" fill="#313b63"/><rect x="529" y="333" width="20" height="3" fill="#313b63"/><rect x="519" y="347" width="60" height="5" fill="#2a1a45"/><rect x="575" y="340" width="4" height="12" fill="#2a1a45"/><rect x="584" y="332" width="14" height="20" fill="#25245c"/><rect x="584" y="332" width="10" height="4" fill="#313b63"/><rect x="584" y="336" width="3" height="8" fill="#313b63"/><rect x="584" y="347" width="14" height="5" fill="#2a1a45"/><rect x="594" y="342" width="4" height="10" fill="#2a1a45"/><rect x="603" y="332" width="24" height="20" fill="#25245c"/><rect x="603" y="332" width="15" height="4" fill="#313b63"/><rect x="603" y="336" width="3" height="8" fill="#313b63"/><rect x="603" y="347" width="24" height="5" fill="#2a1a45"/><rect x="623" y="342" width="4" height="10" fill="#2a1a45"/><rect x="632" y="329" width="14" height="23" fill="#25245c"/><rect x="632" y="329" width="8" height="4" fill="#313b63"/><rect x="632" y="333" width="3" height="9" fill="#313b63"/><rect x="632" y="347" width="14" height="5" fill="#2a1a45"/><rect x="642" y="340" width="4" height="12" fill="#2a1a45"/><rect x="651" y="332" width="18" height="20" fill="#25245c"/><rect x="651" y="332" width="10" height="4" fill="#313b63"/><rect x="651" y="336" width="3" height="8" fill="#313b63"/><rect x="651" y="347" width="18" height="5" fill="#2a1a45"/><rect x="665" y="342" width="4" height="10" fill="#2a1a45"/><rect x="674" y="332" width="18" height="20" fill="#25245c"/><rect x="674" y="332" width="12" height="4" fill="#313b63"/><rect x="674" y="336" width="3" height="8" fill="#313b63"/><rect x="674" y="347" width="18" height="5" fill="#2a1a45"/><rect x="688" y="342" width="4" height="10" fill="#2a1a45"/><rect x="697" y="332" width="30" height="20" fill="#25245c"/><rect x="697" y="332" width="14" height="4" fill="#313b63"/><rect x="697" y="336" width="3" height="8" fill="#313b63"/><rect x="697" y="347" width="30" height="5" fill="#2a1a45"/><rect x="723" y="342" width="4" height="10" fill="#2a1a45"/><rect x="732" y="332" width="52" height="20" fill="#25245c"/><rect x="732" y="332" width="42" height="4" fill="#313b63"/><rect x="732" y="336" width="3" height="8" fill="#313b63"/><rect x="741" y="336" width="17" height="3" fill="#313b63"/><rect x="732" y="347" width="52" height="5" fill="#2a1a45"/><rect x="780" y="342" width="4" height="10" fill="#2a1a45"/><rect x="789" y="329" width="30" height="23" fill="#25245c"/><rect x="789" y="329" width="18" height="4" fill="#313b63"/><rect x="789" y="333" width="3" height="9" fill="#313b63"/><rect x="789" y="347" width="30" height="5" fill="#2a1a45"/><rect x="815" y="340" width="4" height="12" fill="#2a1a45"/><rect x="824" y="332" width="14" height="20" fill="#25245c"/><rect x="824" y="332" width="9" height="4" fill="#313b63"/><rect x="824" y="336" width="3" height="8" fill="#313b63"/><rect x="824" y="347" width="14" height="5" fill="#2a1a45"/><rect x="834" y="342" width="4" height="10" fill="#2a1a45"/><rect x="843" y="332" width="24" height="20" fill="#25245c"/><rect x="843" y="332" width="14" height="4" fill="#313b63"/><rect x="843" y="336" width="3" height="8" fill="#313b63"/><rect x="843" y="347" width="24" height="5" fill="#2a1a45"/><rect x="863" y="342" width="4" height="10" fill="#2a1a45"/><rect x="872" y="332" width="52" height="20" fill="#25245c"/><rect x="872" y="332" width="24" height="4" fill="#313b63"/><rect x="872" y="336" width="3" height="8" fill="#313b63"/><rect x="879" y="336" width="17" height="3" fill="#313b63"/><rect x="872" y="347" width="52" height="5" fill="#2a1a45"/><rect x="920" y="342" width="4" height="10" fill="#2a1a45"/><rect x="-11" y="359" width="72" height="20" fill="#25245c"/><rect x="-11" y="359" width="46" height="4" fill="#313b63"/><rect x="-11" y="363" width="3" height="8" fill="#313b63"/><rect x="12" y="363" width="24" height="3" fill="#313b63"/><rect x="-11" y="374" width="72" height="5" fill="#2a1a45"/><rect x="57" y="369" width="4" height="10" fill="#2a1a45"/><rect x="66" y="359" width="60" height="20" fill="#25245c"/><rect x="66" y="359" width="38" height="4" fill="#313b63"/><rect x="66" y="363" width="3" height="8" fill="#313b63"/><rect x="75" y="363" width="20" height="3" fill="#313b63"/><rect x="66" y="374" width="60" height="5" fill="#2a1a45"/><rect x="122" y="369" width="4" height="10" fill="#2a1a45"/><rect x="131" y="359" width="60" height="20" fill="#25245c"/><rect x="131" y="359" width="36" height="4" fill="#313b63"/><rect x="131" y="363" width="3" height="8" fill="#313b63"/><rect x="143" y="363" width="20" height="3" fill="#313b63"/><rect x="131" y="374" width="60" height="5" fill="#2a1a45"/><rect x="187" y="369" width="4" height="10" fill="#2a1a45"/><rect x="196" y="359" width="44" height="20" fill="#25245c"/><rect x="196" y="359" width="30" height="4" fill="#313b63"/><rect x="196" y="363" width="3" height="8" fill="#313b63"/><rect x="196" y="374" width="44" height="5" fill="#2a1a45"/><rect x="236" y="369" width="4" height="10" fill="#2a1a45"/><rect x="245" y="359" width="36" height="20" fill="#25245c"/><rect x="245" y="359" width="24" height="4" fill="#313b63"/><rect x="245" y="363" width="3" height="8" fill="#313b63"/><rect x="245" y="374" width="36" height="5" fill="#2a1a45"/><rect x="277" y="369" width="4" height="10" fill="#2a1a45"/><rect x="286" y="359" width="30" height="20" fill="#25245c"/><rect x="286" y="359" width="17" height="4" fill="#313b63"/><rect x="286" y="363" width="3" height="8" fill="#313b63"/><rect x="296" y="363" width="10" height="3" fill="#313b63"/><rect x="286" y="374" width="30" height="5" fill="#2a1a45"/><rect x="312" y="369" width="4" height="10" fill="#2a1a45"/><rect x="321" y="359" width="44" height="20" fill="#25245c"/><rect x="321" y="359" width="24" height="4" fill="#313b63"/><rect x="321" y="363" width="3" height="8" fill="#313b63"/><rect x="321" y="374" width="44" height="5" fill="#2a1a45"/><rect x="361" y="369" width="4" height="10" fill="#2a1a45"/><rect x="370" y="356" width="18" height="23" fill="#25245c"/><rect x="370" y="356" width="10" height="4" fill="#313b63"/><rect x="370" y="360" width="3" height="9" fill="#313b63"/><rect x="370" y="374" width="18" height="5" fill="#2a1a45"/><rect x="384" y="367" width="4" height="12" fill="#2a1a45"/><rect x="393" y="359" width="18" height="20" fill="#25245c"/><rect x="393" y="359" width="10" height="4" fill="#313b63"/><rect x="393" y="363" width="3" height="8" fill="#313b63"/><rect x="393" y="374" width="18" height="5" fill="#2a1a45"/><rect x="407" y="369" width="4" height="10" fill="#2a1a45"/><rect x="416" y="359" width="72" height="20" fill="#25245c"/><rect x="416" y="359" width="41" height="4" fill="#313b63"/><rect x="416" y="363" width="3" height="8" fill="#313b63"/><rect x="416" y="374" width="72" height="5" fill="#2a1a45"/><rect x="484" y="369" width="4" height="10" fill="#2a1a45"/><rect x="493" y="356" width="60" height="23" fill="#25245c"/><rect x="493" y="356" width="30" height="4" fill="#313b63"/><rect x="493" y="360" width="3" height="9" fill="#313b63"/><rect x="493" y="374" width="60" height="5" fill="#2a1a45"/><rect x="549" y="367" width="4" height="12" fill="#2a1a45"/><rect x="558" y="359" width="14" height="20" fill="#25245c"/><rect x="558" y="359" width="8" height="4" fill="#313b63"/><rect x="558" y="363" width="3" height="8" fill="#313b63"/><rect x="558" y="374" width="14" height="5" fill="#2a1a45"/><rect x="568" y="369" width="4" height="10" fill="#2a1a45"/><rect x="577" y="359" width="24" height="20" fill="#25245c"/><rect x="577" y="359" width="16" height="4" fill="#313b63"/><rect x="577" y="363" width="3" height="8" fill="#313b63"/><rect x="584" y="363" width="8" height="3" fill="#313b63"/><rect x="577" y="374" width="24" height="5" fill="#2a1a45"/><rect x="597" y="369" width="4" height="10" fill="#2a1a45"/><rect x="606" y="359" width="52" height="20" fill="#25245c"/><rect x="606" y="359" width="27" height="4" fill="#313b63"/><rect x="606" y="363" width="3" height="8" fill="#313b63"/><rect x="621" y="363" width="17" height="3" fill="#313b63"/><rect x="606" y="374" width="52" height="5" fill="#2a1a45"/><rect x="654" y="369" width="4" height="10" fill="#2a1a45"/><rect x="663" y="359" width="60" height="20" fill="#25245c"/><rect x="663" y="359" width="36" height="4" fill="#313b63"/><rect x="663" y="363" width="3" height="8" fill="#313b63"/><rect x="663" y="374" width="60" height="5" fill="#2a1a45"/><rect x="719" y="369" width="4" height="10" fill="#2a1a45"/><rect x="728" y="356" width="30" height="23" fill="#25245c"/><rect x="728" y="356" width="17" height="4" fill="#313b63"/><rect x="728" y="360" width="3" height="9" fill="#313b63"/><rect x="728" y="374" width="30" height="5" fill="#2a1a45"/><rect x="754" y="367" width="4" height="12" fill="#2a1a45"/><rect x="763" y="356" width="24" height="23" fill="#25245c"/><rect x="763" y="356" width="11" height="4" fill="#313b63"/><rect x="763" y="360" width="3" height="9" fill="#313b63"/><rect x="763" y="374" width="24" height="5" fill="#2a1a45"/><rect x="783" y="367" width="4" height="12" fill="#2a1a45"/><rect x="792" y="359" width="14" height="20" fill="#25245c"/><rect x="792" y="359" width="11" height="4" fill="#313b63"/><rect x="792" y="363" width="3" height="8" fill="#313b63"/><rect x="792" y="374" width="14" height="5" fill="#2a1a45"/><rect x="802" y="369" width="4" height="10" fill="#2a1a45"/><rect x="811" y="359" width="18" height="20" fill="#25245c"/><rect x="811" y="359" width="9" height="4" fill="#313b63"/><rect x="811" y="363" width="3" height="8" fill="#313b63"/><rect x="811" y="374" width="18" height="5" fill="#2a1a45"/><rect x="825" y="369" width="4" height="10" fill="#2a1a45"/><rect x="834" y="359" width="18" height="20" fill="#25245c"/><rect x="834" y="359" width="14" height="4" fill="#313b63"/><rect x="834" y="363" width="3" height="8" fill="#313b63"/><rect x="834" y="374" width="18" height="5" fill="#2a1a45"/><rect x="848" y="369" width="4" height="10" fill="#2a1a45"/><rect x="857" y="356" width="36" height="23" fill="#25245c"/><rect x="857" y="356" width="22" height="4" fill="#313b63"/><rect x="857" y="360" width="3" height="9" fill="#313b63"/><rect x="861" y="360" width="12" height="3" fill="#313b63"/><rect x="857" y="374" width="36" height="5" fill="#2a1a45"/><rect x="889" y="367" width="4" height="12" fill="#2a1a45"/></svg><div class="t" style="left:443px;top:707.7px;font-size:36px;color:#f49c10">FOL</div><div class="t" style="left:327px;top:749.6px;font-size:36px;color:#f49c10">Frame Of Legends</div><svg style="left:262.2px;top:802.9px" width="130.0" height="199.2" shape-rendering="crispEdges"><rect x="50.00" y="0.00" width="50.00" height="12.45" fill="#1d1d1d"/><rect x="40.00" y="12.45" width="10.00" height="12.45" fill="#1d1d1d"/><rect x="50.00" y="12.45" width="40.00" height="12.45" fill="#3dc83a"/><rect x="90.00" y="12.45" width="10.00" height="12.45" fill="#37b131"/><rect x="100.00" y="12.45" width="10.00" height="12.45" fill="#1d1d1d"/><rect x="40.00" y="24.90" width="20.00" height="12.45" fill="#3dc83a"/><rect x="60.00" y="24.90" width="20.00" height="12.45" fill="#1d1d1d"/><rect x="80.00" y="24.90" width="20.00" height="12.45" fill="#37b131"/><rect x="100.00" y="24.90" width="10.00" height="12.45" fill="#479a40"/><rect x="110.00" y="24.90" width="10.00" height="12.45" fill="#1d1d1d"/><rect x="30.00" y="37.35" width="10.00" height="12.45" fill="#1d1d1d"/><rect x="40.00" y="37.35" width="20.00" height="12.45" fill="#3dc83a"/><rect x="60.00" y="37.35" width="10.00" height="12.45" fill="#2b6db5"/><rect x="70.00" y="37.35" width="30.00" height="12.45" fill="#37b131"/><rect x="100.00" y="37.35" width="10.00" height="12.45" fill="#479a40"/><rect x="110.00" y="37.35" width="10.00" height="12.45" fill="#1d1d1d"/><rect x="40.00" y="49.80" width="10.00" height="12.45" fill="#1d1d1d"/><rect x="50.00" y="49.80" width="20.00" height="12.45" fill="#3dc83a"/><rect x="70.00" y="49.80" width="20.00" height="12.45" fill="#37b131"/><rect x="90.00" y="49.80" width="20.00" height="12.45" fill="#479a40"/><rect x="110.00" y="49.80" width="10.00" height="12.45" fill="#1d1d1d"/><rect x="20.00" y="62.25" width="10.00" height="12.45" fill="#1d1d1d"/><rect x="50.00" y="62.25" width="10.00" height="12.45" fill="#1d1d1d"/><rect x="60.00" y="62.25" width="20.00" height="12.45" fill="#7b3c3a"/><rect x="80.00" y="62.25" width="10.00" height="12.45" fill="#37b131"/><rect x="90.00" y="62.25" width="10.00" height="12.45" fill="#479a40"/><rect x="100.00" y="62.25" width="10.00" height="12.45" fill="#1d1d1d"/><rect x="10.00" y="74.70" width="10.00" height="12.45" fill="#1d1d1d"/><rect x="20.00" y="74.70" width="10.00" height="12.45" fill="#3dc83a"/><rect x="30.00" y="74.70" width="10.00" height="12.45" fill="#1d1d1d"/><rect x="40.00" y="74.70" width="20.00" height="12.45" fill="#5d4f47"/><rect x="60.00" y="74.70" width="10.00" height="12.45" fill="#3dc83a"/><rect x="70.00" y="74.70" width="20.00" height="12.45" fill="#37b131"/><rect x="90.00" y="74.70" width="20.00" height="12.45" fill="#4b3e38"/><rect x="110.00" y="74.70" width="10.00" height="12.45" fill="#1d1d1d"/><rect x="0.00" y="87.15" width="10.00" height="12.45" fill="#1d1d1d"/><rect x="10.00" y="87.15" width="20.00" height="12.45" fill="#3dc83a"/><rect x="30.00" y="87.15" width="10.00" height="12.45" fill="#1d1d1d"/><rect x="40.00" y="87.15" width="10.00" height="12.45" fill="#5d4f47"/><rect x="50.00" y="87.15" width="20.00" height="12.45" fill="#4b3e38"/><rect x="70.00" y="87.15" width="10.00" height="12.45" fill="#3dc83a"/><rect x="80.00" y="87.15" width="10.00" height="12.45" fill="#5d4f47"/><rect x="90.00" y="87.15" width="30.00" height="12.45" fill="#4b3e38"/><rect x="120.00" y="87.15" width="10.00" height="12.45" fill="#1d1d1d"/><rect x="0.00" y="99.60" width="10.00" height="12.45" fill="#1d1d1d"/><rect x="10.00" y="99.60" width="30.00" height="12.45" fill="#3dc83a"/><rect x="40.00" y="99.60" width="10.00" height="12.45" fill="#479a40"/><rect x="50.00" y="99.60" width="10.00" height="12.45" fill="#5d4f47"/><rect x="60.00" y="99.60" width="10.00" height="12.45" fill="#3dc83a"/><rect x="70.00" y="99.60" width="10.00" height="12.45" fill="#37b131"/><rect x="80.00" y="99.60" width="20.00" height="12.45" fill="#5d4f47"/><rect x="100.00" y="99.60" width="10.00" height="12.45" fill="#3dc83a"/><rect x="110.00" y="99.60" width="10.00" height="12.45" fill="#5d4f47"/><rect x="120.00" y="99.60" width="10.00" height="12.45" fill="#1d1d1d"/><rect x="10.00" y="112.05" width="10.00" height="12.45" fill="#1d1d1d"/><rect x="20.00" y="112.05" width="20.00" height="12.45" fill="#3dc83a"/><rect x="40.00" y="112.05" width="10.00" height="12.45" fill="#1d1d1d"/><rect x="50.00" y="112.05" width="10.00" height="12.45" fill="#5d4f47"/><rect x="60.00" y="112.05" width="10.00" height="12.45" fill="#3dc83a"/><rect x="70.00" y="112.05" width="20.00" height="12.45" fill="#4b3e38"/><rect x="90.00" y="112.05" width="10.00" height="12.45" fill="#3dc83a"/><rect x="100.00" y="112.05" width="10.00" height="12.45" fill="#37b131"/><rect x="110.00" y="112.05" width="10.00" height="12.45" fill="#479a40"/><rect x="120.00" y="112.05" width="10.00" height="12.45" fill="#1d1d1d"/><rect x="20.00" y="124.50" width="30.00" height="12.45" fill="#1d1d1d"/><rect x="50.00" y="124.50" width="10.00" height="12.45" fill="#5d4f47"/><rect x="60.00" y="124.50" width="30.00" height="12.45" fill="#4b3e38"/><rect x="90.00" y="124.50" width="10.00" height="12.45" fill="#3dc83a"/><rect x="100.00" y="124.50" width="10.00" height="12.45" fill="#37b131"/><rect x="110.00" y="124.50" width="10.00" height="12.45" fill="#479a40"/><rect x="120.00" y="124.50" width="10.00" height="12.45" fill="#1d1d1d"/><rect x="40.00" y="136.95" width="10.00" height="12.45" fill="#1d1d1d"/><rect x="50.00" y="136.95" width="40.00" height="12.45" fill="#573840"/><rect x="90.00" y="136.95" width="10.00" height="12.45" fill="#3dc83a"/><rect x="100.00" y="136.95" width="10.00" height="12.45" fill="#37b131"/><rect x="110.00" y="136.95" width="10.00" height="12.45" fill="#479a40"/><rect x="120.00" y="136.95" width="10.00" height="12.45" fill="#1d1d1d"/><rect x="40.00" y="149.40" width="10.00" height="12.45" fill="#1d1d1d"/><rect x="50.00" y="149.40" width="20.00" height="12.45" fill="#573840"/><rect x="80.00" y="149.40" width="10.00" height="12.45" fill="#573840"/><rect x="90.00" y="149.40" width="10.00" height="12.45" fill="#3dc83a"/><rect x="100.00" y="149.40" width="10.00" height="12.45" fill="#37b131"/><rect x="110.00" y="149.40" width="10.00" height="12.45" fill="#1d1d1d"/><rect x="40.00" y="161.85" width="10.00" height="12.45" fill="#1d1d1d"/><rect x="50.00" y="161.85" width="10.00" height="12.45" fill="#479a40"/><rect x="60.00" y="161.85" width="10.00" height="12.45" fill="#573840"/><rect x="80.00" y="161.85" width="10.00" height="12.45" fill="#37b131"/><rect x="90.00" y="161.85" width="10.00" height="12.45" fill="#573840"/><rect x="100.00" y="161.85" width="10.00" height="12.45" fill="#1d1d1d"/><rect x="30.00" y="174.30" width="20.00" height="12.45" fill="#1d1d1d"/><rect x="50.00" y="174.30" width="20.00" height="12.45" fill="#37b131"/><rect x="80.00" y="174.30" width="20.00" height="12.45" fill="#37b131"/><rect x="100.00" y="174.30" width="10.00" height="12.45" fill="#1d1d1d"/><rect x="30.00" y="186.75" width="10.00" height="12.45" fill="#1d1d1d"/><rect x="40.00" y="186.75" width="10.00" height="12.45" fill="#3dc83a"/><rect x="50.00" y="186.75" width="20.00" height="12.45" fill="#479a40"/><rect x="80.00" y="186.75" width="20.00" height="12.45" fill="#479a40"/><rect x="100.00" y="186.75" width="10.00" height="12.45" fill="#1d1d1d"/></svg><div class="t" style="left:305px;top:880px;font-size:20px;color:#f4f4f4">Escull</div><div class="t" style="left:281.5px;top:902px;font-size:20px;color:#f4f4f4">Personatge</div><svg style="left:442.00px;top:805.40px" width="160" height="192"><path transform="translate(80.25,71)" d="M18.50 63.97 A75.25 66 0 1 0 -4.75 65.87 Q2.00 86.10 31.75 96.10 Q16.90 76.70 18.50 63.97Z" fill="#f0fefe" stroke="#0a0a0a" stroke-width="1.8" stroke-linejoin="round"/></svg><div class="t" style="left:499.5px;top:861px;font-size:24.2px;color:#d4a52e">Play</div><div style="left:877px;top:634px;width:611px;height:384px;background:#383838;"></div><div style="left:877px;top:634px;width:611px;height:19px;background:#282828;"></div><div style="left:877px;top:634px;width:81px;height:19px;background:#3c3c3c;border-radius:3px 3px 0 0"></div><div style="left:877px;top:634px;width:81px;height:2px;background:#3a79bb;border-radius:3px 3px 0 0"></div><svg style="left:885px;top:639px" width="13" height="10" viewBox="0 0 13 10" preserveAspectRatio="none"><path d="M0 1 Q0 0 1 0 H4.5 L6 1.5 H12 Q13 1.5 13 2.5 V10 H0Z" fill="#c4c4c4"/></svg><div class="t u" style="left:901px;top:638px;">Project</div><div style="left:877px;top:653px;width:611px;height:20px;background:#3c3c3c;"></div><svg style="left:884px;top:656px" width="14" height="14"><path d="M6 1 V12 M0.5 6.5 H11.5" stroke="#d8d8d8" stroke-width="1.8"/></svg><div class="tri" style="left:900px;top:662px;border-top-color:#d0d0d0"></div><div style="left:1025px;top:655px;width:460px;height:16px;background:#2a2a2a;border-radius:3px;border:1px solid #212121"></div><svg style="left:1029px;top:658px" width="10" height="10"><circle cx="3.5" cy="3.5" r="2.5" fill="none" stroke="#bbb" stroke-width="1.2"/><path d="M5.5 5.5 L8 8" stroke="#bbb" stroke-width="1.4"/></svg><div style="left:877px;top:673px;width:208px;height:345px;background:#383838;"></div><div style="left:877px;top:674px;width:195px;height:16px;background:#4d4d4d;"></div><div style="left:877px;top:673px;width:196px;height:345px;overflow:hidden"><div class="trid" style="left:4px;top:7px;border-left-width:4.5px;border-right-width:4.5px;border-top-width:7px"></div><svg style="left:18px;top:3px" width="15" height="12"><path d="M1 2 Q1 1 2 1 H5.5 L7 2.5 H11.5 Q12.5 2.5 12.5 3.5 V5 H4 L1 11Z" fill="none" stroke="#c4c4c4" stroke-width="1.2"/><path d="M3.5 5.2 H14.5 L12 11.5 H0.8Z" fill="#c4c4c4"/></svg><div class="t u" style="left:35px;top:3px;font-weight:bold;color:#d4d4d4">Assets</div><div class="trid" style="left:18px;top:23px;border-left-width:4.5px;border-right-width:4.5px;border-top-width:7px"></div><svg style="left:32px;top:19px" width="15" height="12"><path d="M1 2 Q1 1 2 1 H5.5 L7 2.5 H11.5 Q12.5 2.5 12.5 3.5 V5 H4 L1 11Z" fill="none" stroke="#c4c4c4" stroke-width="1.2"/><path d="M3.5 5.2 H14.5 L12 11.5 H0.8Z" fill="#c4c4c4"/></svg><div class="t u" style="left:49px;top:19px;">Brackeys</div><div class="trid" style="left:32px;top:39px;border-left-width:4.5px;border-right-width:4.5px;border-top-width:7px"></div><svg style="left:46px;top:35px" width="15" height="12"><path d="M1 2 Q1 1 2 1 H5.5 L7 2.5 H11.5 Q12.5 2.5 12.5 3.5 V5 H4 L1 11Z" fill="none" stroke="#c4c4c4" stroke-width="1.2"/><path d="M3.5 5.2 H14.5 L12 11.5 H0.8Z" fill="#c4c4c4"/></svg><div class="t u" style="left:63px;top:35px;">2D Mega Pack</div><svg style="left:60px;top:52px" width="13" height="10" viewBox="0 0 13 10" preserveAspectRatio="none"><path d="M0 1 Q0 0 1 0 H4.5 L6 1.5 H12 Q13 1.5 13 2.5 V10 H0Z" fill="#c4c4c4"/></svg><div class="t u" style="left:77px;top:51px;">-- Example Photos --</div><svg style="left:60px;top:68px" width="13" height="10" viewBox="0 0 13 10" preserveAspectRatio="none"><path d="M0 1 Q0 0 1 0 H4.5 L6 1.5 H12 Q13 1.5 13 2.5 V10 H0Z" fill="#c4c4c4"/></svg><div class="t u" style="left:77px;top:67px;">Backgrounds</div><div class="trid" style="left:46px;top:87px;border-left-width:4.5px;border-right-width:4.5px;border-top-width:7px"></div><svg style="left:60px;top:83px" width="15" height="12"><path d="M1 2 Q1 1 2 1 H5.5 L7 2.5 H11.5 Q12.5 2.5 12.5 3.5 V5 H4 L1 11Z" fill="none" stroke="#c4c4c4" stroke-width="1.2"/><path d="M3.5 5.2 H14.5 L12 11.5 H0.8Z" fill="#c4c4c4"/></svg><div class="t u" style="left:77px;top:83px;">Characters</div><div class="trid" style="left:60px;top:103px;border-left-width:4.5px;border-right-width:4.5px;border-top-width:7px"></div><svg style="left:74px;top:99px" width="15" height="12"><path d="M1 2 Q1 1 2 1 H5.5 L7 2.5 H11.5 Q12.5 2.5 12.5 3.5 V5 H4 L1 11Z" fill="none" stroke="#c4c4c4" stroke-width="1.2"/><path d="M3.5 5.2 H14.5 L12 11.5 H0.8Z" fill="#c4c4c4"/></svg><div class="t u" style="left:91px;top:99px;">Animation</div><svg style="left:88px;top:116px" width="13" height="10" viewBox="0 0 13 10" preserveAspectRatio="none"><path d="M0 1 Q0 0 1 0 H4.5 L6 1.5 H12 Q13 1.5 13 2.5 V10 H0Z" fill="#c4c4c4"/></svg><div class="t u" style="left:105px;top:115px;">Astronaut</div><svg style="left:88px;top:132px" width="13" height="10" viewBox="0 0 13 10" preserveAspectRatio="none"><path d="M0 1 Q0 0 1 0 H4.5 L6 1.5 H12 Q13 1.5 13 2.5 V10 H0Z" fill="#c4c4c4"/></svg><div class="t u" style="left:105px;top:131px;">Detective</div><div class="trid" style="left:60px;top:151px;border-left-width:4.5px;border-right-width:4.5px;border-top-width:7px"></div><svg style="left:74px;top:147px" width="15" height="12"><path d="M1 2 Q1 1 2 1 H5.5 L7 2.5 H11.5 Q12.5 2.5 12.5 3.5 V5 H4 L1 11Z" fill="none" stroke="#c4c4c4" stroke-width="1.2"/><path d="M3.5 5.2 H14.5 L12 11.5 H0.8Z" fill="#c4c4c4"/></svg><div class="t u" style="left:91px;top:147px;">Blob Players</div><svg style="left:88px;top:164px" width="13" height="10" viewBox="0 0 13 10" preserveAspectRatio="none"><path d="M0 1 Q0 0 1 0 H4.5 L6 1.5 H12 Q13 1.5 13 2.5 V10 H0Z" fill="#c4c4c4"/></svg><div class="t u" style="left:105px;top:163px;">Animation</div><svg style="left:74px;top:180px" width="13" height="10" viewBox="0 0 13 10" preserveAspectRatio="none"><path d="M0 1 Q0 0 1 0 H4.5 L6 1.5 H12 Q13 1.5 13 2.5 V10 H0Z" fill="#c4c4c4"/></svg><div class="t u" style="left:91px;top:179px;">Fantasy</div><div class="trir" style="left:62px;top:197px;border-left-width:6px"></div><svg style="left:74px;top:196px" width="13" height="10" viewBox="0 0 13 10" preserveAspectRatio="none"><path d="M0 1 Q0 0 1 0 H4.5 L6 1.5 H12 Q13 1.5 13 2.5 V10 H0Z" fill="#c4c4c4"/></svg><div class="t u" style="left:91px;top:195px;">Soldiers</div><svg style="left:74px;top:212px" width="13" height="10" viewBox="0 0 13 10" preserveAspectRatio="none"><path d="M0 1 Q0 0 1 0 H4.5 L6 1.5 H12 Q13 1.5 13 2.5 V10 H0Z" fill="#c4c4c4"/></svg><div class="t u" style="left:91px;top:211px;">Stickman</div><div class="trir" style="left:48px;top:229px;border-left-width:6px"></div><svg style="left:60px;top:228px" width="13" height="10" viewBox="0 0 13 10" preserveAspectRatio="none"><path d="M0 1 Q0 0 1 0 H4.5 L6 1.5 H12 Q13 1.5 13 2.5 V10 H0Z" fill="#c4c4c4"/></svg><div class="t u" style="left:77px;top:227px;">Effects</div><div class="trir" style="left:48px;top:245px;border-left-width:6px"></div><svg style="left:60px;top:244px" width="13" height="10" viewBox="0 0 13 10" preserveAspectRatio="none"><path d="M0 1 Q0 0 1 0 H4.5 L6 1.5 H12 Q13 1.5 13 2.5 V10 H0Z" fill="#c4c4c4"/></svg><div class="t u" style="left:77px;top:243px;">Enemies</div><div class="trir" style="left:48px;top:261px;border-left-width:6px"></div><svg style="left:60px;top:260px" width="13" height="10" viewBox="0 0 13 10" preserveAspectRatio="none"><path d="M0 1 Q0 0 1 0 H4.5 L6 1.5 H12 Q13 1.5 13 2.5 V10 H0Z" fill="#c4c4c4"/></svg><div class="t u" style="left:77px;top:259px;">Environment</div><svg style="left:60px;top:276px" width="13" height="10" viewBox="0 0 13 10" preserveAspectRatio="none"><path d="M0 1 Q0 0 1 0 H4.5 L6 1.5 H12 Q13 1.5 13 2.5 V10 H0Z" fill="#c4c4c4"/></svg><div class="t u" style="left:77px;top:275px;">Extra</div><div class="trir" style="left:48px;top:293px;border-left-width:6px"></div><svg style="left:60px;top:292px" width="13" height="10" viewBox="0 0 13 10" preserveAspectRatio="none"><path d="M0 1 Q0 0 1 0 H4.5 L6 1.5 H12 Q13 1.5 13 2.5 V10 H0Z" fill="#c4c4c4"/></svg><div class="t u" style="left:77px;top:291px;">Food &amp; Plants</div><div class="trir" style="left:48px;top:309px;border-left-width:6px"></div><svg style="left:60px;top:308px" width="13" height="10" viewBox="0 0 13 10" preserveAspectRatio="none"><path d="M0 1 Q0 0 1 0 H4.5 L6 1.5 H12 Q13 1.5 13 2.5 V10 H0Z" fill="#c4c4c4"/></svg><div class="t u" style="left:77px;top:307px;">Items &amp; Icons</div><svg style="left:60px;top:324px" width="13" height="10" viewBox="0 0 13 10" preserveAspectRatio="none"><path d="M0 1 Q0 0 1 0 H4.5 L6 1.5 H12 Q13 1.5 13 2.5 V10 H0Z" fill="#c4c4c4"/></svg><div class="t u" style="left:77px;top:323px;">Platforms</div><svg style="left:60px;top:340px" width="13" height="10" viewBox="0 0 13 10" preserveAspectRatio="none"><path d="M0 1 Q0 0 1 0 H4.5 L6 1.5 H12 Q13 1.5 13 2.5 V10 H0Z" fill="#c4c4c4"/></svg><div class="t u" style="left:77px;top:339px;">Shapes</div></div><div style="left:1073px;top:673px;width:13px;height:345px;background:#3a3a3a;"></div><svg style="left:1075px;top:677px" width="9" height="6"><path d="M0.5 5.5 L4.5 0.5 L8.5 5.5Z" fill="#c4c4c4"/></svg><svg style="left:1075px;top:1006px" width="9" height="6"><path d="M0.5 0.5 L4.5 5.5 L8.5 0.5Z" fill="#c4c4c4"/></svg><div style="left:1075px;top:725px;width:9px;height:171px;background:#5f5f5f;border-radius:5px"></div><div style="left:1085px;top:673px;width:2px;height:345px;background:#242424;"></div><div style="left:1087px;top:673px;width:401px;height:345px;background:#333333;"></div><div style="left:1087px;top:673px;width:401px;height:22px;background:#3b3b3b;"></div><div class="t u" style="left:1090px;top:677px;font-weight:bold;color:#d0d0d0">Assets</div><svg style="left:1104px;top:698px" width="12" height="10" viewBox="0 0 13 10" preserveAspectRatio="none"><path d="M0 1 Q0 0 1 0 H4.5 L6 1.5 H12 Q13 1.5 13 2.5 V10 H0Z" fill="#c4c4c4"/></svg><div class="t u" style="left:1120px;top:697px;">Brackeys</div><svg style="left:1104px;top:714px" width="12" height="10" viewBox="0 0 13 10" preserveAspectRatio="none"><path d="M0 1 Q0 0 1 0 H4.5 L6 1.5 H12 Q13 1.5 13 2.5 V10 H0Z" fill="#c4c4c4"/></svg><div class="t u" style="left:1120px;top:713px;">Scenes</div><svg style="left:1104px;top:730px" width="12" height="10" viewBox="0 0 13 10" preserveAspectRatio="none"><path d="M0 1 Q0 0 1 0 H4.5 L6 1.5 H12 Q13 1.5 13 2.5 V10 H0Z" fill="#c4c4c4"/></svg><div class="t u" style="left:1120px;top:729px;">TextMesh Pro</div><div style="left:1087px;top:997px;width:401px;height:21px;background:#414141;"></div><svg style="left:1091px;top:1003px" width="12" height="10" viewBox="0 0 13 10" preserveAspectRatio="none"><path d="M0 1 Q0 0 1 0 H4.5 L6 1.5 H12 Q13 1.5 13 2.5 V10 H0Z" fill="#c4c4c4"/></svg><div class="t u" style="left:1106px;top:1001px;">Assets</div><div style="left:1425px;top:1007px;width:47px;height:1px;background:#8a8a8a;"></div><svg style="left:1416px;top:1002px" width="11" height="11"><circle cx="5.5" cy="5.5" r="5" fill="#9a9a9a"/></svg><div style="left:0px;top:1018px;width:1920px;height:22px;background:#191919;"></div><svg style="left:3px;top:1022px" width="13" height="14"><path d="M6.5 0.5 A6 6 0 1 0 8.5 12 L11.5 13.5 L10.5 10.5 A6 6 0 0 0 6.5 0.5Z" fill="#e6e6e6"/><rect x="5.6" y="3" width="1.8" height="5" fill="#191919"/><rect x="5.6" y="9" width="1.8" height="1.8" fill="#191919"/></svg><div class="t u" style="left:20px;top:1023px;color:#bdbdbd;font-size:12.7px">[TMP Essential Resources] have been imported.</div><svg style="left:1820px;top:1022px" width="16" height="15"><ellipse cx="8" cy="8.5" rx="4" ry="4.5" fill="#bdbdbd"/><path d="M1.5 5 L5 6.5 M14.5 5 L11 6.5 M1.5 9 H4 M14.5 9 H12 M2 13 L5 11.5 M14 13 L11 11.5 M1 1 L15 14" stroke="#bdbdbd" stroke-width="1.3"/></svg><svg style="left:1846px;top:1022px" width="16" height="15"><ellipse cx="7" cy="3" rx="6" ry="2.5" fill="#bdbdbd"/><path d="M1 5.5 Q7 9 13 5.5 V7.5 Q7 11 1 7.5Z M1 10 Q7 13.5 13 10 V12 Q7 15.5 1 12Z" fill="#bdbdbd"/><path d="M9 8 L15 14" stroke="#191919" stroke-width="2.5"/><path d="M9 8 L15 14" stroke="#bdbdbd" stroke-width="1.2"/></svg><svg style="left:1872px;top:1022px" width="16" height="15"><circle cx="8" cy="8" r="6" fill="none" stroke="#bdbdbd" stroke-width="1.3"/><circle cx="8" cy="8" r="2.5" fill="#bdbdbd"/><path d="M1 1 L15 15" stroke="#bdbdbd" stroke-width="1.3"/></svg><div style="left:1892px;top:1020px;width:1px;height:18px;background:#2c2c2c;"></div><svg style="left:1898px;top:1022px" width="15" height="15"><circle cx="7.5" cy="7.5" r="6.5" fill="none" stroke="#d0d0d0" stroke-width="1.3"/><path d="M4.5 7.5 L6.8 9.8 L10.5 5.5" fill="none" stroke="#d0d0d0" stroke-width="1.4"/></svg><div style="left:0px;top:1040px;width:1920px;height:40px;background:#1c1c1c;"></div><svg style="left:15px;top:1051px" width="18" height="18"><path d="M0 2.5 L7.5 1.5 V8.5 H0Z M8.5 1.3 L17 0 V8.5 H8.5Z M0 9.5 H7.5 V16.5 L0 15.5Z M8.5 9.5 H17 V18 L8.5 16.7Z" fill="#fff"/></svg><div style="left:48px;top:1040px;width:289px;height:40px;background:#333333;border:1px solid #585858;border-bottom:none"></div><svg style="left:60px;top:1052px" width="17" height="17"><circle cx="10.5" cy="6" r="5" fill="none" stroke="#fff" stroke-width="1.2"/><path d="M7 9.5 L1 15.5" stroke="#fff" stroke-width="1.4"/></svg><div class="t" style="left:88px;top:1053px;font-size:14.2px;color:#e0e0e0">Escriu aquí per cercar</div><svg style="left:256px;top:1044px" width="82" height="36"><path d="M2 36 L10 26 H82 V36Z" fill="#e8c99a"/><path d="M12 24 L10 12 Q18 8 27 13 Q35 8 43 12 L42 25 Q35 22 27 26 Q19 22 12 24Z" fill="#f4f4f4" stroke="#6a8f6a" stroke-width="1"/><path d="M27 13 V26" stroke="#aaa"/><path d="M33 20 L45 6 L48 8 L36 22Z" fill="#f7b733"/><path d="M46 3 Q52 0 61 8 L67 16 Q70 30 63 33 L55 34 Q47 32 49 22Z" fill="#3b8de0" opacity="0"/><path d="M52 9 Q52 2 60 2 Q67 2 67 9 L69 30 Q69 35 60 35 Q50 35 50 30Z" fill="#3a8bdd"/><path d="M54 22 H66 V30 H54Z" fill="#2a6cc0"/><path d="M55 8 Q55 5 60 5 Q65 5 65 8" fill="none" stroke="#2a6cc0" stroke-width="1.5"/></svg><svg style="left:350px;top:1050px" width="20" height="20"><circle cx="10" cy="10" r="8.5" fill="none" stroke="#fff" stroke-width="2"/></svg><svg style="left:398px;top:1051px" width="18" height="18"><rect x="1" y="4" width="11" height="10" fill="none" stroke="#fff" stroke-width="1.3"/><path d="M1 1.5 H12 M1 16.5 H12 M15 2 V16" stroke="#fff" stroke-width="1.3"/></svg><svg style="left:446px;top:1047px" width="26" height="26"><rect x="0" y="0" width="25" height="25" rx="2.5" fill="#ef7d22"/><path d="M7 5.5 Q12.5 9 18 5.5 Q20.5 8 17.5 10.5 Q15.5 12.5 17.5 14.5 Q20.5 17 18 19.5 Q12.5 16 7 19.5 Q4.5 17 7.5 14.5 Q9.5 12.5 7.5 10.5 Q4.5 8 7 5.5Z" fill="none" stroke="#fff" stroke-width="2.6" stroke-linejoin="round"/></svg><svg style="left:497px;top:1050px" width="22" height="20"><path d="M0 2 H8 L10 4 H22 V19 H0Z" fill="#f5c542"/><path d="M0 7 H22 V19 H0Z" fill="#ffd35a"/><rect x="6" y="12" width="10" height="4" fill="#3a90e0"/></svg><svg style="left:545px;top:1048px" width="25" height="25"><circle cx="12.5" cy="12.5" r="12" fill="#db4437"/><path d="M12.5 12.5 L23 6.5 A12 12 0 0 1 12.5 24.5Z" fill="#f4c20d"/><path d="M12.5 12.5 L12.5 24.5 A12 12 0 0 1 2 6.5Z" fill="#0f9d58"/><circle cx="12.5" cy="12.5" r="5.3" fill="#fff"/><circle cx="12.5" cy="12.5" r="4.2" fill="#4285f4"/></svg><svg style="left:594px;top:1048px" width="25" height="25"><path d="M18 1 L24 4 V21 L18 24 L7 14 L3 17 L1 16 V9 L3 8 L7 11Z M18 7 L11 12.5 L18 18Z" fill="#1f8ad2" fill-rule="evenodd"/></svg><div style="left:631px;top:1040px;width:48px;height:40px;background:#3b3b3b;"></div><div style="left:631px;top:1077px;width:48px;height:3px;background:#76b9ed;"></div><svg style="left:642px;top:1047px" width="26" height="26"><path d="M12 1 L22.5 7 V19 L12 25 L1.5 19 V7Z" fill="#262626" stroke="#8a8a8a" stroke-width="1"/><path d="M12 4.5 L18.5 8.3 V15.7 L12 19.5 L5.5 15.7 V8.3Z" fill="#e8e8e8"/><path d="M12 11.5 V19.5 M12 11.5 L5.5 8.3 M12 11.5 L18.5 8.3" stroke="#262626" stroke-width="2"/><path d="M22.5 7 V19 L12 25 L14 22 L20 18.5 V9Z" fill="#111"/></svg><svg style="left:692px;top:1047px" width="25" height="25"><rect x="0.5" y="0.5" width="23" height="23" fill="#001d34" stroke="#31a8ff" stroke-width="1.5"/><text x="4" y="17" font-family="Liberation Sans" font-weight="bold" font-size="12" fill="#31a8ff">Ps</text></svg><div style="left:684px;top:1077px;width:40px;height:3px;background:#76b9ed;"></div><svg style="left:1478px;top:1048px" width="28" height="24"><circle cx="19" cy="8" r="5" fill="#f5a623"/><path d="M4 22 Q0 22 0.5 18 Q1 14 5 14.5 Q6 8.5 12 8.5 Q18 8.5 19 14.5 Q24 14 24 18 Q24 22 20 22Z" fill="#cfe3f7"/></svg><div class="t" style="left:1512px;top:1053px;font-size:13px;color:#fff">1</div><div class="t" style="left:1773px;top:1054px;font-size:12px;color:#fff">CAT</div><div class="t" style="left:1821px;top:1045px;font-size:12px;color:#fff">14:14</div><div class="t" style="left:1808px;top:1062px;font-size:12px;color:#fff">19/2/2024</div><svg style="left:1878px;top:1051px" width="18" height="18"><path d="M0 0 H18 V13 H11 L9 16 L7 13 H0Z" fill="#fff"/><path d="M3 4 H15 M3 7 H15 M3 10 H11" stroke="#1c1c1c" stroke-width="1.1"/></svg><div style="left:1914px;top:1040px;width:1px;height:40px;background:#5a5a5a;"></div><div class="menu" style="left:1200px;top:257px;width:317px;height:560px"></div><div style="left:1203px;top:260px;width:311px;height:22px;background:#91c9f7;"></div><div class="mi t" style="left:1235px;top:265px">Create</div><svg style="left:1505px;top:267px" width="6" height="9"><path d="M1 1 L4.5 4.5 L1 8" fill="none" stroke="#222" stroke-width="1.1"/></svg><div style="left:1231px;top:285px;width:283px;height:1px;background:#d7d7d7;"></div><div class="mi t" style="left:1235px;top:294px">Show in Explorer</div><div class="mi t" style="left:1235px;top:316px">Open</div><div class="mi t dis" style="left:1235px;top:338px">Delete</div><div class="mi t dis" style="left:1235px;top:360px">Rename</div><div class="mi t" style="left:1235px;top:382px">Copy Path</div><div class="mi t" style="left:1501px;top:382px;transform:translateX(-100%)">Alt+Ctrl+C</div><div style="left:1231px;top:402px;width:283px;height:1px;background:#d7d7d7;"></div><div class="mi t dis" style="left:1235px;top:411px">Open Scene Additive</div><div style="left:1231px;top:431px;width:283px;height:1px;background:#d7d7d7;"></div><div class="mi t dis" style="left:1235px;top:440px">View in Package Manager</div><div style="left:1231px;top:460px;width:283px;height:1px;background:#d7d7d7;"></div><div class="mi t" style="left:1235px;top:469px">Import New Asset...</div><div class="mi t" style="left:1235px;top:491px">Import Package</div><svg style="left:1505px;top:493px" width="6" height="9"><path d="M1 1 L4.5 4.5 L1 8" fill="none" stroke="#222" stroke-width="1.1"/></svg><div class="mi t" style="left:1235px;top:513px">Export Package...</div><div class="mi t dis" style="left:1235px;top:535px">Find References In Scene</div><div class="mi t" style="left:1235px;top:557px">Select Dependencies</div><div style="left:1231px;top:577px;width:283px;height:1px;background:#d7d7d7;"></div><div class="mi t" style="left:1235px;top:586px">Refresh</div><div class="mi t" style="left:1501px;top:586px;transform:translateX(-100%)">Ctrl+R</div><div class="mi t" style="left:1235px;top:608px">Reimport</div><div style="left:1231px;top:628px;width:283px;height:1px;background:#d7d7d7;"></div><div class="mi t" style="left:1235px;top:637px">Reimport All</div><div style="left:1231px;top:657px;width:283px;height:1px;background:#d7d7d7;"></div><div class="mi t dis" style="left:1235px;top:666px">Extract From Prefab</div><div style="left:1231px;top:686px;width:283px;height:1px;background:#d7d7d7;"></div><div class="mi t" style="left:1235px;top:695px">Update UXML Schema</div><div style="left:1231px;top:715px;width:283px;height:1px;background:#d7d7d7;"></div><div class="mi t" style="left:1235px;top:724px">Generate Lighting</div><div class="mi t" style="left:1501px;top:724px;transform:translateX(-100%)">Ctrl+Shift+L</div><div class="mi t" style="left:1235px;top:746px">View in Import Activity Window</div><div class="mi t" style="left:1235px;top:768px">Open C# Project</div><div style="left:1231px;top:788px;width:283px;height:1px;background:#d7d7d7;"></div><div class="mi t" style="left:1235px;top:797px">Properties...</div><div class="mi t" style="left:1501px;top:797px;transform:translateX(-100%)">Alt+P</div><div class="menu" style="left:1516px;top:124px;width:251px;height:966px"></div><div style="left:1519px;top:127px;width:245px;height:22px;background:#91c9f7;"></div><div class="mi t" style="left:1551px;top:132px">Folder</div><div style="left:1547px;top:152px;width:217px;height:1px;background:#d7d7d7;"></div><div class="mi t" style="left:1551px;top:161px">C# Script</div><div class="mi t" style="left:1551px;top:183px">2D</div><svg style="left:1750px;top:185px" width="6" height="9"><path d="M1 1 L4.5 4.5 L1 8" fill="none" stroke="#222" stroke-width="1.1"/></svg><div class="mi t" style="left:1551px;top:205px">Visual Scripting</div><svg style="left:1750px;top:207px" width="6" height="9"><path d="M1 1 L4.5 4.5 L1 8" fill="none" stroke="#222" stroke-width="1.1"/></svg><div class="mi t" style="left:1551px;top:227px">Shader</div><svg style="left:1750px;top:229px" width="6" height="9"><path d="M1 1 L4.5 4.5 L1 8" fill="none" stroke="#222" stroke-width="1.1"/></svg><div class="mi t" style="left:1551px;top:249px">Shader Variant Collection</div><div class="mi t" style="left:1551px;top:271px">Testing</div><svg style="left:1750px;top:273px" width="6" height="9"><path d="M1 1 L4.5 4.5 L1 8" fill="none" stroke="#222" stroke-width="1.1"/></svg><div class="mi t" style="left:1551px;top:293px">Playables</div><svg style="left:1750px;top:295px" width="6" height="9"><path d="M1 1 L4.5 4.5 L1 8" fill="none" stroke="#222" stroke-width="1.1"/></svg><div class="mi t" style="left:1551px;top:315px">Assembly Definition</div><div class="mi t" style="left:1551px;top:337px">Assembly Definition Reference</div><div class="mi t" style="left:1551px;top:359px">Text</div><svg style="left:1750px;top:361px" width="6" height="9"><path d="M1 1 L4.5 4.5 L1 8" fill="none" stroke="#222" stroke-width="1.1"/></svg><div class="mi t" style="left:1551px;top:381px">TextMeshPro</div><svg style="left:1750px;top:383px" width="6" height="9"><path d="M1 1 L4.5 4.5 L1 8" fill="none" stroke="#222" stroke-width="1.1"/></svg><div style="left:1547px;top:401px;width:217px;height:1px;background:#d7d7d7;"></div><div class="mi t" style="left:1551px;top:410px">Scene</div><div class="mi t dis" style="left:1551px;top:432px">Scene Template From Scene</div><div class="mi t" style="left:1551px;top:454px">Scene Template</div><div class="mi t" style="left:1551px;top:476px">Scene Template Pipeline</div><div class="mi t" style="left:1551px;top:498px">Prefab</div><div class="mi t dis" style="left:1551px;top:520px">Prefab Variant</div><div style="left:1547px;top:540px;width:217px;height:1px;background:#d7d7d7;"></div><div class="mi t" style="left:1551px;top:549px">Audio Mixer</div><div style="left:1547px;top:569px;width:217px;height:1px;background:#d7d7d7;"></div><div class="mi t" style="left:1551px;top:578px">Material</div><div class="mi t dis" style="left:1551px;top:600px">Material Variant</div><div class="mi t" style="left:1551px;top:622px">Lens Flare</div><div class="mi t" style="left:1551px;top:644px">Render Texture</div><div class="mi t" style="left:1551px;top:666px">Lightmap Parameters</div><div class="mi t" style="left:1551px;top:688px">Lighting Settings</div><div class="mi t" style="left:1551px;top:710px">Custom Render Texture</div><div style="left:1547px;top:730px;width:217px;height:1px;background:#d7d7d7;"></div><div class="mi t" style="left:1551px;top:739px">Animator Controller</div><div class="mi t" style="left:1551px;top:761px">Animation</div><div class="mi t" style="left:1551px;top:783px">Animator Override Controller</div><div class="mi t" style="left:1551px;top:805px">Avatar Mask</div><div style="left:1547px;top:825px;width:217px;height:1px;background:#d7d7d7;"></div><div class="mi t" style="left:1551px;top:834px">Timeline</div><div class="mi t" style="left:1551px;top:856px">Signal</div><div style="left:1547px;top:876px;width:217px;height:1px;background:#d7d7d7;"></div><div class="mi t" style="left:1551px;top:885px">Physic Material</div><div style="left:1547px;top:905px;width:217px;height:1px;background:#d7d7d7;"></div><div class="mi t" style="left:1551px;top:914px">GUI Skin</div><div class="mi t" style="left:1551px;top:936px">Custom Font</div><div class="mi t" style="left:1551px;top:958px">UI Toolkit</div><svg style="left:1750px;top:960px" width="6" height="9"><path d="M1 1 L4.5 4.5 L1 8" fill="none" stroke="#222" stroke-width="1.1"/></svg><div style="left:1547px;top:978px;width:217px;height:1px;background:#d7d7d7;"></div><div class="mi t" style="left:1551px;top:987px">Legacy</div><svg style="left:1750px;top:989px" width="6" height="9"><path d="M1 1 L4.5 4.5 L1 8" fill="none" stroke="#222" stroke-width="1.1"/></svg><div style="left:1547px;top:1007px;width:217px;height:1px;background:#d7d7d7;"></div><div class="mi t" style="left:1551px;top:1016px">Search</div><svg style="left:1750px;top:1018px" width="6" height="9"><path d="M1 1 L4.5 4.5 L1 8" fill="none" stroke="#222" stroke-width="1.1"/></svg><div class="mi t" style="left:1551px;top:1038px">Terrain Layer</div><div class="mi t" style="left:1551px;top:1060px">Brush</div><svg style="left:0px;top:0px" width="1920" height="1080"><line x1="1199" y1="197" x2="1235.8" y2="263.5" stroke="#fff" stroke-width="2.2" stroke-linecap="round"/><polygon points="1243.5,277.5 1230.0,264.4 1239.6,259.1" fill="#fff"/><line x1="1502.5" y1="89.5" x2="1552.1" y2="118.0" stroke="#fff" stroke-width="2.2" stroke-linecap="round"/><polygon points="1566,126 1547.7,121.8 1553.1,112.3" fill="#fff"/><line x1="1163.5" y1="872.8" x2="1219.6" y2="888.4" stroke="#fff" stroke-width="2.2" stroke-linecap="round"/><polygon points="1235,892.7 1216.2,893.2 1219.1,882.6" fill="#fff"/></svg>
</body></html>
